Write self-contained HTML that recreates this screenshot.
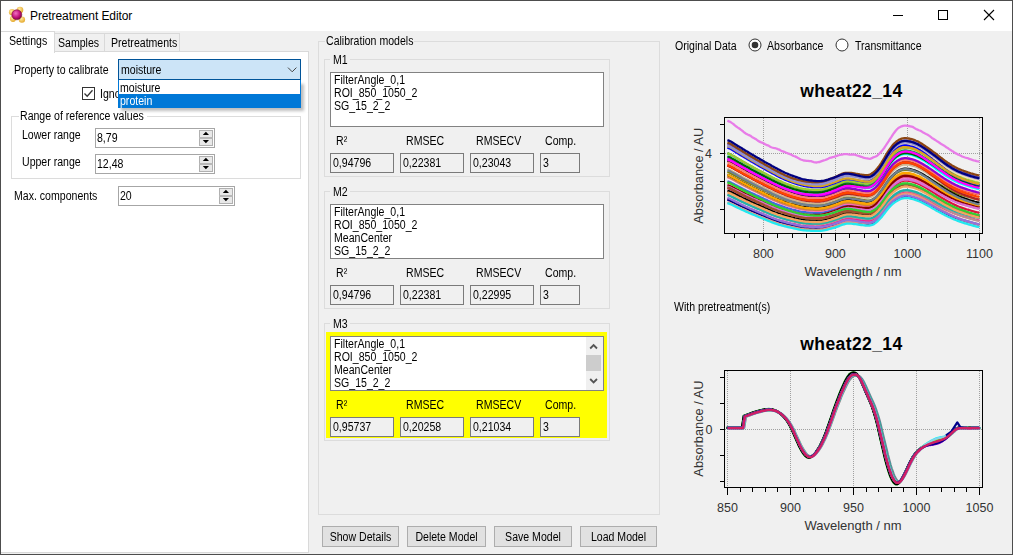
<!DOCTYPE html>
<html><head><meta charset="utf-8"><style>
html,body{margin:0;padding:0;background:#f0f0f0}
#w{position:relative;width:1013px;height:555px;overflow:hidden;font-family:"Liberation Sans",sans-serif}
.t{position:absolute;white-space:pre}
.r{position:absolute}
</style></head><body><div id="w">
<div class="r" style="left:0px;top:0px;width:1013px;height:555px;background:#f0f0f0"></div>
<div class="r" style="left:1px;top:1px;width:1011px;height:30px;background:#fff"></div>
<div class="r" style="left:0px;top:0px;width:1013px;height:1px;background:#4d4d4d"></div>
<div class="r" style="left:0px;top:554px;width:1013px;height:1px;background:#4d4d4d"></div>
<div class="r" style="left:0px;top:0px;width:1px;height:555px;background:#4d4d4d"></div>
<div class="r" style="left:1012px;top:0px;width:1px;height:555px;background:#4d4d4d"></div>
<svg class="r" style="left:8px;top:6px" width="18" height="18" viewBox="0 0 18 18">
<defs><radialGradient id="yg" cx="0.4" cy="0.35" r="0.7"><stop offset="0" stop-color="#ffeaa0"/><stop offset="1" stop-color="#e3a424"/></radialGradient>
<radialGradient id="mg" cx="0.4" cy="0.35" r="0.7"><stop offset="0" stop-color="#f070c0"/><stop offset="0.6" stop-color="#c0107a"/><stop offset="1" stop-color="#70003a"/></radialGradient></defs>
<circle cx="4.0" cy="6.2" r="3.1" fill="url(#yg)"/><circle cx="12.0" cy="4.0" r="3.3" fill="url(#yg)"/>
<circle cx="5.0" cy="12.8" r="3.1" fill="url(#yg)"/><circle cx="13.9" cy="13.6" r="3.2" fill="url(#yg)"/>
<circle cx="8.8" cy="8.8" r="5.0" fill="url(#mg)" stroke="#7a1030" stroke-width="0.6"/></svg>
<div class="t" style="left:30.00px;top:9.84px;font-size:12px;line-height:12px;color:#000;font-weight:400;letter-spacing:-0.1px;transform-origin:0 0;transform:scaleX(1);">Pretreatment Editor</div>
<div class="r" style="left:893px;top:15px;width:10px;height:1px;background:#000"></div>
<div class="r" style="left:938px;top:10px;width:10px;height:10px;border:1px solid #000;box-sizing:border-box"></div>
<svg class="r" style="left:983px;top:9px" width="12" height="12" viewBox="0 0 12 12"><path d="M1 1L11 11M11 1L1 11" stroke="#000" stroke-width="1.1" fill="none"/></svg>
<div class="r" style="left:1px;top:51px;width:308px;height:502px;background:#fff;border-right:1px solid #d9d9d9;border-bottom:1px solid #d9d9d9;border-left:0;box-sizing:border-box"></div>
<div class="r" style="left:1px;top:51px;width:308px;height:1px;background:#d9d9d9"></div>
<div class="r" style="left:54px;top:33px;width:51px;height:19px;background:#f0f0f0;border:1px solid #d9d9d9;box-sizing:border-box"></div>
<div class="r" style="left:104px;top:33px;width:76px;height:19px;background:#f0f0f0;border:1px solid #d9d9d9;box-sizing:border-box"></div>
<div class="r" style="left:1px;top:31px;width:54px;height:22px;background:#fff;border-top:1px solid #d9d9d9;border-right:1px solid #d9d9d9;box-sizing:border-box"></div>
<div class="t" style="left:8.80px;top:34.84px;font-size:12px;line-height:12px;color:#000;font-weight:400;letter-spacing:0px;transform-origin:0 0;transform:scaleX(0.88);">Settings</div>
<div class="t" style="left:58.30px;top:36.84px;font-size:12px;line-height:12px;color:#000;font-weight:400;letter-spacing:0px;transform-origin:0 0;transform:scaleX(0.88);">Samples</div>
<div class="t" style="left:110.80px;top:36.84px;font-size:12px;line-height:12px;color:#000;font-weight:400;letter-spacing:0px;transform-origin:0 0;transform:scaleX(0.88);">Pretreatments</div>
<div class="t" style="left:13.80px;top:64.34px;font-size:12px;line-height:12px;color:#000;font-weight:400;letter-spacing:0px;transform-origin:0 0;transform:scaleX(0.88);">Property to calibrate</div>
<div class="r" style="left:82px;top:87px;width:13px;height:13px;border:1px solid #333;box-sizing:border-box;background:#fff"></div>
<svg class="r" style="left:82px;top:87px" width="13" height="13" viewBox="0 0 13 13"><path d="M2.5 6.5L5.2 9.2L10.5 3.3" stroke="#333" stroke-width="1.3" fill="none"/></svg>
<div class="t" style="left:100.30px;top:88.34px;font-size:12px;line-height:12px;color:#000;font-weight:400;letter-spacing:0px;transform-origin:0 0;transform:scaleX(0.88);">Ignore</div>
<div class="r" style="left:11px;top:116px;width:290px;height:63px;border:1px solid #dcdcdc;box-sizing:border-box"></div>
<div class="r" style="left:19px;top:110px;width:128px;height:10px;background:#fff"></div>
<div class="t" style="left:19.80px;top:110.34px;font-size:12px;line-height:12px;color:#000;font-weight:400;letter-spacing:0px;transform-origin:0 0;transform:scaleX(0.88);">Range of reference values</div>
<div class="t" style="left:22.30px;top:129.34px;font-size:12px;line-height:12px;color:#000;font-weight:400;letter-spacing:0px;transform-origin:0 0;transform:scaleX(0.88);">Lower range</div>
<div class="t" style="left:22.30px;top:155.84px;font-size:12px;line-height:12px;color:#000;font-weight:400;letter-spacing:0px;transform-origin:0 0;transform:scaleX(0.88);">Upper range</div>
<div class="r" style="left:95px;top:128px;width:120px;height:20px;border:1px solid #a6a6a6;box-sizing:border-box;background:#fff"></div>
<div class="t" style="left:96.80px;top:131.54px;font-size:12px;line-height:12px;color:#000;font-weight:400;letter-spacing:0px;transform-origin:0 0;transform:scaleX(0.88);">8,79</div>
<div class="r" style="left:199px;top:130px;width:14px;height:8px;background:#e8e8e8;border:1px solid #b0b0b0;border-bottom:0;box-sizing:border-box"></div>
<div class="r" style="left:199px;top:138px;width:14px;height:8px;background:#e8e8e8;border:1px solid #b0b0b0;border-top:0;box-sizing:border-box"></div>
<div class="r" style="left:199px;top:137px;width:14px;height:2px;background:#b8b8b8"></div>
<svg class="r" style="left:199px;top:128px" width="14" height="20" viewBox="0 0 14 20"><path d="M3.8 7L6.9 3.8L10 7Z M3.8 12L10 12L6.9 15.2Z" fill="#000"/></svg>
<div class="r" style="left:95px;top:154px;width:120px;height:20px;border:1px solid #a6a6a6;box-sizing:border-box;background:#fff"></div>
<div class="t" style="left:96.80px;top:157.54px;font-size:12px;line-height:12px;color:#000;font-weight:400;letter-spacing:0px;transform-origin:0 0;transform:scaleX(0.88);">12,48</div>
<div class="r" style="left:199px;top:156px;width:14px;height:8px;background:#e8e8e8;border:1px solid #b0b0b0;border-bottom:0;box-sizing:border-box"></div>
<div class="r" style="left:199px;top:164px;width:14px;height:8px;background:#e8e8e8;border:1px solid #b0b0b0;border-top:0;box-sizing:border-box"></div>
<div class="r" style="left:199px;top:163px;width:14px;height:2px;background:#b8b8b8"></div>
<svg class="r" style="left:199px;top:154px" width="14" height="20" viewBox="0 0 14 20"><path d="M3.8 7L6.9 3.8L10 7Z M3.8 12L10 12L6.9 15.2Z" fill="#000"/></svg>
<div class="t" style="left:13.80px;top:189.84px;font-size:12px;line-height:12px;color:#000;font-weight:400;letter-spacing:0px;transform-origin:0 0;transform:scaleX(0.88);">Max. components</div>
<div class="r" style="left:118px;top:186px;width:117px;height:20px;border:1px solid #a6a6a6;box-sizing:border-box;background:#fff"></div>
<div class="t" style="left:119.80px;top:189.54px;font-size:12px;line-height:12px;color:#000;font-weight:400;letter-spacing:0px;transform-origin:0 0;transform:scaleX(0.88);">20</div>
<div class="r" style="left:219px;top:188px;width:14px;height:8px;background:#e8e8e8;border:1px solid #b0b0b0;border-bottom:0;box-sizing:border-box"></div>
<div class="r" style="left:219px;top:196px;width:14px;height:8px;background:#e8e8e8;border:1px solid #b0b0b0;border-top:0;box-sizing:border-box"></div>
<div class="r" style="left:219px;top:195px;width:14px;height:2px;background:#b8b8b8"></div>
<svg class="r" style="left:219px;top:186px" width="14" height="20" viewBox="0 0 14 20"><path d="M3.8 7L6.9 3.8L10 7Z M3.8 12L10 12L6.9 15.2Z" fill="#000"/></svg>
<div class="r" style="left:118px;top:59px;width:183px;height:21px;background:#cce4f7;border:1px solid #005499;box-sizing:border-box"></div>
<div class="t" style="left:120.80px;top:63.84px;font-size:12px;line-height:12px;color:#000;font-weight:400;letter-spacing:0px;transform-origin:0 0;transform:scaleX(0.88);">moisture</div>
<svg class="r" style="left:284px;top:64px" width="16" height="10" viewBox="0 0 16 10"><path d="M4 3.6L8.2 7.8L12.4 3.6" stroke="#444" stroke-width="1" fill="none"/></svg>
<div class="r" style="left:121px;top:84px;width:183px;height:27px;background:rgba(0,0,0,0.25);filter:blur(1.5px)"></div>
<div class="r" style="left:118px;top:80px;width:183px;height:28px;background:#fff;border:1px solid #0078d7;border-top:0;box-sizing:border-box"></div>
<div class="r" style="left:118px;top:94px;width:183px;height:14px;background:#0078d7"></div>
<div class="t" style="left:119.80px;top:81.94px;font-size:12px;line-height:12px;color:#000;font-weight:400;letter-spacing:0px;transform-origin:0 0;transform:scaleX(0.88);">moisture</div>
<div class="t" style="left:120.10px;top:94.84px;font-size:12px;line-height:12px;color:#fff;font-weight:400;letter-spacing:0px;transform-origin:0 0;transform:scaleX(0.88);">protein</div>
<div class="r" style="left:318px;top:41px;width:342px;height:474px;border:1px solid #dcdcdc;box-sizing:border-box"></div>
<div class="r" style="left:325px;top:35px;width:89px;height:10px;background:#f0f0f0"></div>
<div class="t" style="left:325.80px;top:35.34px;font-size:12px;line-height:12px;color:#000;font-weight:400;letter-spacing:0px;transform-origin:0 0;transform:scaleX(0.88);">Calibration models</div>
<div class="r" style="left:324px;top:59px;width:286px;height:118px;border:1px solid #dcdcdc;box-sizing:border-box"></div>
<div class="r" style="left:330px;top:53px;width:20px;height:10px;background:#f0f0f0"></div>
<div class="t" style="left:332.80px;top:54.14px;font-size:12px;line-height:12px;color:#000;font-weight:400;letter-spacing:0px;transform-origin:0 0;transform:scaleX(0.88);">M1</div>
<div class="r" style="left:330px;top:72px;width:274px;height:55px;background:#fff;border:1px solid #828282;box-sizing:border-box"></div>
<div class="t" style="left:333.80px;top:74.34px;font-size:12px;line-height:12px;color:#000;font-weight:400;letter-spacing:0px;transform-origin:0 0;transform:scaleX(0.88);">FilterAngle_0,1</div>
<div class="t" style="left:333.80px;top:87.34px;font-size:12px;line-height:12px;color:#000;font-weight:400;letter-spacing:0px;transform-origin:0 0;transform:scaleX(0.88);">ROI_850_1050_2</div>
<div class="t" style="left:333.80px;top:100.34px;font-size:12px;line-height:12px;color:#000;font-weight:400;letter-spacing:0px;transform-origin:0 0;transform:scaleX(0.88);">SG_15_2_2</div>
<div class="t" style="left:335.80px;top:134.84px;font-size:12px;line-height:12px;color:#000;font-weight:400;letter-spacing:0px;transform-origin:0 0;transform:scaleX(0.88);">R&#178;</div>
<div class="t" style="left:405.80px;top:134.84px;font-size:12px;line-height:12px;color:#000;font-weight:400;letter-spacing:0px;transform-origin:0 0;transform:scaleX(0.88);">RMSEC</div>
<div class="t" style="left:475.80px;top:134.84px;font-size:12px;line-height:12px;color:#000;font-weight:400;letter-spacing:0px;transform-origin:0 0;transform:scaleX(0.88);">RMSECV</div>
<div class="t" style="left:544.80px;top:134.84px;font-size:12px;line-height:12px;color:#000;font-weight:400;letter-spacing:0px;transform-origin:0 0;transform:scaleX(0.88);">Comp.</div>
<div class="r" style="left:330px;top:153px;width:64px;height:20px;background:#f0f0f0;border:1px solid #7a7a7a;box-sizing:border-box"></div>
<div class="t" style="left:333.30px;top:157.34px;font-size:12px;line-height:12px;color:#000;font-weight:400;letter-spacing:0px;transform-origin:0 0;transform:scaleX(0.88);">0,94796</div>
<div class="r" style="left:400px;top:153px;width:64px;height:20px;background:#f0f0f0;border:1px solid #7a7a7a;box-sizing:border-box"></div>
<div class="t" style="left:403.30px;top:157.34px;font-size:12px;line-height:12px;color:#000;font-weight:400;letter-spacing:0px;transform-origin:0 0;transform:scaleX(0.88);">0,22381</div>
<div class="r" style="left:470px;top:153px;width:64px;height:20px;background:#f0f0f0;border:1px solid #7a7a7a;box-sizing:border-box"></div>
<div class="t" style="left:473.30px;top:157.34px;font-size:12px;line-height:12px;color:#000;font-weight:400;letter-spacing:0px;transform-origin:0 0;transform:scaleX(0.88);">0,23043</div>
<div class="r" style="left:540px;top:153px;width:40px;height:20px;background:#f0f0f0;border:1px solid #7a7a7a;box-sizing:border-box"></div>
<div class="t" style="left:543.30px;top:157.34px;font-size:12px;line-height:12px;color:#000;font-weight:400;letter-spacing:0px;transform-origin:0 0;transform:scaleX(0.88);">3</div>
<div class="r" style="left:324px;top:191px;width:286px;height:118px;border:1px solid #dcdcdc;box-sizing:border-box"></div>
<div class="r" style="left:330px;top:185px;width:20px;height:10px;background:#f0f0f0"></div>
<div class="t" style="left:332.80px;top:186.14px;font-size:12px;line-height:12px;color:#000;font-weight:400;letter-spacing:0px;transform-origin:0 0;transform:scaleX(0.88);">M2</div>
<div class="r" style="left:330px;top:204px;width:274px;height:55px;background:#fff;border:1px solid #828282;box-sizing:border-box"></div>
<div class="t" style="left:333.80px;top:206.34px;font-size:12px;line-height:12px;color:#000;font-weight:400;letter-spacing:0px;transform-origin:0 0;transform:scaleX(0.88);">FilterAngle_0,1</div>
<div class="t" style="left:333.80px;top:219.34px;font-size:12px;line-height:12px;color:#000;font-weight:400;letter-spacing:0px;transform-origin:0 0;transform:scaleX(0.88);">ROI_850_1050_2</div>
<div class="t" style="left:333.80px;top:232.34px;font-size:12px;line-height:12px;color:#000;font-weight:400;letter-spacing:0px;transform-origin:0 0;transform:scaleX(0.88);">MeanCenter</div>
<div class="t" style="left:333.80px;top:245.34px;font-size:12px;line-height:12px;color:#000;font-weight:400;letter-spacing:0px;transform-origin:0 0;transform:scaleX(0.88);">SG_15_2_2</div>
<div class="t" style="left:335.80px;top:266.84px;font-size:12px;line-height:12px;color:#000;font-weight:400;letter-spacing:0px;transform-origin:0 0;transform:scaleX(0.88);">R&#178;</div>
<div class="t" style="left:405.80px;top:266.84px;font-size:12px;line-height:12px;color:#000;font-weight:400;letter-spacing:0px;transform-origin:0 0;transform:scaleX(0.88);">RMSEC</div>
<div class="t" style="left:475.80px;top:266.84px;font-size:12px;line-height:12px;color:#000;font-weight:400;letter-spacing:0px;transform-origin:0 0;transform:scaleX(0.88);">RMSECV</div>
<div class="t" style="left:544.80px;top:266.84px;font-size:12px;line-height:12px;color:#000;font-weight:400;letter-spacing:0px;transform-origin:0 0;transform:scaleX(0.88);">Comp.</div>
<div class="r" style="left:330px;top:285px;width:64px;height:20px;background:#f0f0f0;border:1px solid #7a7a7a;box-sizing:border-box"></div>
<div class="t" style="left:333.30px;top:289.34px;font-size:12px;line-height:12px;color:#000;font-weight:400;letter-spacing:0px;transform-origin:0 0;transform:scaleX(0.88);">0,94796</div>
<div class="r" style="left:400px;top:285px;width:64px;height:20px;background:#f0f0f0;border:1px solid #7a7a7a;box-sizing:border-box"></div>
<div class="t" style="left:403.30px;top:289.34px;font-size:12px;line-height:12px;color:#000;font-weight:400;letter-spacing:0px;transform-origin:0 0;transform:scaleX(0.88);">0,22381</div>
<div class="r" style="left:470px;top:285px;width:64px;height:20px;background:#f0f0f0;border:1px solid #7a7a7a;box-sizing:border-box"></div>
<div class="t" style="left:473.30px;top:289.34px;font-size:12px;line-height:12px;color:#000;font-weight:400;letter-spacing:0px;transform-origin:0 0;transform:scaleX(0.88);">0,22995</div>
<div class="r" style="left:540px;top:285px;width:40px;height:20px;background:#f0f0f0;border:1px solid #7a7a7a;box-sizing:border-box"></div>
<div class="t" style="left:543.30px;top:289.34px;font-size:12px;line-height:12px;color:#000;font-weight:400;letter-spacing:0px;transform-origin:0 0;transform:scaleX(0.88);">3</div>
<div class="r" style="left:324px;top:323px;width:286px;height:118px;border:1px solid #dcdcdc;box-sizing:border-box"></div>
<div class="r" style="left:330px;top:317px;width:20px;height:10px;background:#f0f0f0"></div>
<div class="t" style="left:332.80px;top:318.14px;font-size:12px;line-height:12px;color:#000;font-weight:400;letter-spacing:0px;transform-origin:0 0;transform:scaleX(0.88);">M3</div>
<div class="r" style="left:326px;top:332px;width:281px;height:106px;background:#ffff00"></div>
<div class="r" style="left:330px;top:336px;width:274px;height:55px;background:#fff;border:1px solid #828282;box-sizing:border-box"></div>
<div class="t" style="left:333.80px;top:338.34px;font-size:12px;line-height:12px;color:#000;font-weight:400;letter-spacing:0px;transform-origin:0 0;transform:scaleX(0.88);">FilterAngle_0,1</div>
<div class="t" style="left:333.80px;top:351.34px;font-size:12px;line-height:12px;color:#000;font-weight:400;letter-spacing:0px;transform-origin:0 0;transform:scaleX(0.88);">ROI_850_1050_2</div>
<div class="t" style="left:333.80px;top:364.34px;font-size:12px;line-height:12px;color:#000;font-weight:400;letter-spacing:0px;transform-origin:0 0;transform:scaleX(0.88);">MeanCenter</div>
<div class="t" style="left:333.80px;top:377.34px;font-size:12px;line-height:12px;color:#000;font-weight:400;letter-spacing:0px;transform-origin:0 0;transform:scaleX(0.88);">SG_15_2_2</div>
<div class="r" style="left:586px;top:337px;width:17px;height:53px;background:#f0f0f0"></div>
<div class="r" style="left:586px;top:355px;width:15px;height:16px;background:#cdcdcd"></div>
<svg class="r" style="left:586px;top:337px" width="17" height="53" viewBox="0 0 17 53"><path d="M4.2 11.5L7.6 8L11 11.5 M4.2 42L7.6 45.5L11 42" stroke="#555" stroke-width="1.8" fill="none"/></svg>
<div class="t" style="left:335.80px;top:398.84px;font-size:12px;line-height:12px;color:#000;font-weight:400;letter-spacing:0px;transform-origin:0 0;transform:scaleX(0.88);">R&#178;</div>
<div class="t" style="left:405.80px;top:398.84px;font-size:12px;line-height:12px;color:#000;font-weight:400;letter-spacing:0px;transform-origin:0 0;transform:scaleX(0.88);">RMSEC</div>
<div class="t" style="left:475.80px;top:398.84px;font-size:12px;line-height:12px;color:#000;font-weight:400;letter-spacing:0px;transform-origin:0 0;transform:scaleX(0.88);">RMSECV</div>
<div class="t" style="left:544.80px;top:398.84px;font-size:12px;line-height:12px;color:#000;font-weight:400;letter-spacing:0px;transform-origin:0 0;transform:scaleX(0.88);">Comp.</div>
<div class="r" style="left:330px;top:417px;width:64px;height:20px;background:#f0f0f0;border:1px solid #7a7a7a;box-sizing:border-box"></div>
<div class="t" style="left:333.30px;top:421.34px;font-size:12px;line-height:12px;color:#000;font-weight:400;letter-spacing:0px;transform-origin:0 0;transform:scaleX(0.88);">0,95737</div>
<div class="r" style="left:400px;top:417px;width:64px;height:20px;background:#f0f0f0;border:1px solid #7a7a7a;box-sizing:border-box"></div>
<div class="t" style="left:403.30px;top:421.34px;font-size:12px;line-height:12px;color:#000;font-weight:400;letter-spacing:0px;transform-origin:0 0;transform:scaleX(0.88);">0,20258</div>
<div class="r" style="left:470px;top:417px;width:64px;height:20px;background:#f0f0f0;border:1px solid #7a7a7a;box-sizing:border-box"></div>
<div class="t" style="left:473.30px;top:421.34px;font-size:12px;line-height:12px;color:#000;font-weight:400;letter-spacing:0px;transform-origin:0 0;transform:scaleX(0.88);">0,21034</div>
<div class="r" style="left:540px;top:417px;width:40px;height:20px;background:#f0f0f0;border:1px solid #7a7a7a;box-sizing:border-box"></div>
<div class="t" style="left:543.30px;top:421.34px;font-size:12px;line-height:12px;color:#000;font-weight:400;letter-spacing:0px;transform-origin:0 0;transform:scaleX(0.88);">3</div>
<div class="r" style="left:322px;top:526px;width:77px;height:21px;background:#e1e1e1;border:1px solid #adadad;box-sizing:border-box"></div>
<div class="t" style="left:322px;top:530.6px;width:77px;height:12px;line-height:12px;text-align:center;font-size:12px;color:#000;transform-origin:50% 0;transform:scaleX(0.88)">Show Details</div>
<div class="r" style="left:407px;top:526px;width:79px;height:21px;background:#e1e1e1;border:1px solid #adadad;box-sizing:border-box"></div>
<div class="t" style="left:407px;top:530.6px;width:79px;height:12px;line-height:12px;text-align:center;font-size:12px;color:#000;transform-origin:50% 0;transform:scaleX(0.88)">Delete Model</div>
<div class="r" style="left:494px;top:526px;width:78px;height:21px;background:#e1e1e1;border:1px solid #adadad;box-sizing:border-box"></div>
<div class="t" style="left:494px;top:530.6px;width:78px;height:12px;line-height:12px;text-align:center;font-size:12px;color:#000;transform-origin:50% 0;transform:scaleX(0.88)">Save Model</div>
<div class="r" style="left:580px;top:526px;width:77px;height:21px;background:#e1e1e1;border:1px solid #adadad;box-sizing:border-box"></div>
<div class="t" style="left:580px;top:530.6px;width:77px;height:12px;line-height:12px;text-align:center;font-size:12px;color:#000;transform-origin:50% 0;transform:scaleX(0.88)">Load Model</div>
<div class="t" style="left:675.30px;top:40.34px;font-size:12px;line-height:12px;color:#000;font-weight:400;letter-spacing:0px;transform-origin:0 0;transform:scaleX(0.88);">Original Data</div>
<svg class="r" style="left:747.6px;top:38.3px" width="14" height="14" viewBox="0 0 14 14"><circle cx="7" cy="7" r="6" fill="#fff" stroke="#333" stroke-width="1"/><circle cx="7" cy="7" r="3.3" fill="#333"/></svg>
<div class="t" style="left:766.80px;top:40.34px;font-size:12px;line-height:12px;color:#000;font-weight:400;letter-spacing:0px;transform-origin:0 0;transform:scaleX(0.88);">Absorbance</div>
<svg class="r" style="left:835.4px;top:38.3px" width="14" height="14" viewBox="0 0 14 14"><circle cx="7" cy="7" r="6" fill="#fff" stroke="#333" stroke-width="1"/></svg>
<div class="t" style="left:854.80px;top:40.34px;font-size:12px;line-height:12px;color:#000;font-weight:400;letter-spacing:0px;transform-origin:0 0;transform:scaleX(0.88);">Transmittance</div>
<svg class="r" style="left:0;top:0" width="1013" height="555" viewBox="0 0 1013 555" font-family="Liberation Sans, sans-serif">
<text x="851.5" y="96.7" font-size="17.5" fill="#000" text-anchor="middle" font-weight="700" letter-spacing="0.4">wheat22_14</text>
<defs><clipPath id="c1"><rect x="724.5" y="117.5" width="258.0" height="116.0"/></clipPath></defs>
<line x1="763.5" y1="118.0" x2="763.5" y2="233.0" stroke="#a0a0a0" stroke-width="1" stroke-dasharray="1 1"/>
<line x1="835.5" y1="118.0" x2="835.5" y2="233.0" stroke="#a0a0a0" stroke-width="1" stroke-dasharray="1 1"/>
<line x1="907.5" y1="118.0" x2="907.5" y2="233.0" stroke="#a0a0a0" stroke-width="1" stroke-dasharray="1 1"/>
<line x1="979.5" y1="118.0" x2="979.5" y2="233.0" stroke="#a0a0a0" stroke-width="1" stroke-dasharray="1 1"/>
<line x1="725.0" y1="153.5" x2="982.0" y2="153.5" stroke="#a0a0a0" stroke-width="1" stroke-dasharray="1 1"/>
<g clip-path="url(#c1)" fill="none" stroke-width="2.3" stroke-linejoin="round">
<path d="M727.4 156.2 L728.8 156.8 L730.3 157.4 L731.7 158.2 L733.2 159.0 L734.6 159.9 L736.0 160.7 L737.5 161.5 L738.9 162.4 L740.4 163.2 L741.8 164.0 L743.2 164.9 L744.7 165.7 L746.1 166.5 L747.6 167.3 L749.0 168.1 L750.4 168.9 L751.9 169.7 L753.3 170.5 L754.8 171.3 L756.2 172.1 L757.6 172.8 L759.1 173.6 L760.5 174.4 L762.0 175.1 L763.4 175.9 L764.8 176.7 L766.3 177.4 L767.7 178.2 L769.2 178.9 L770.6 179.7 L772.0 180.4 L773.5 181.1 L774.9 181.9 L776.4 182.6 L777.8 183.2 L779.2 183.9 L780.7 184.6 L782.1 185.2 L783.6 185.9 L785.0 186.5 L786.4 187.0 L787.9 187.6 L789.3 188.1 L790.8 188.6 L792.2 189.1 L793.6 189.5 L795.1 190.0 L796.5 190.4 L798.0 190.8 L799.4 191.2 L800.8 191.6 L802.3 191.9 L803.7 192.2 L805.2 192.4 L806.6 192.6 L808.0 192.8 L809.5 192.9 L810.9 193.0 L812.4 193.1 L813.8 193.2 L815.2 193.3 L816.7 193.3 L818.1 193.3 L819.6 193.3 L821.0 193.1 L822.4 192.9 L823.9 192.7 L825.3 192.3 L826.8 191.9 L828.2 191.5 L829.6 191.0 L831.1 190.6 L832.5 190.1 L834.0 189.5 L835.4 189.0 L836.8 188.4 L838.3 187.8 L839.7 187.2 L841.2 186.6 L842.6 186.1 L844.0 185.7 L845.5 185.5 L846.9 185.3 L848.4 185.3 L849.8 185.4 L851.2 185.6 L852.7 185.8 L854.1 186.1 L855.6 186.3 L857.0 186.6 L858.4 186.9 L859.9 187.1 L861.3 187.4 L862.8 187.6 L864.2 187.9 L865.6 188.0 L867.1 188.1 L868.5 188.0 L870.0 187.7 L871.4 187.2 L872.8 186.3 L874.3 185.3 L875.7 184.0 L877.2 182.5 L878.6 180.9 L880.0 179.0 L881.5 177.0 L882.9 174.8 L884.4 172.5 L885.8 170.3 L887.2 168.0 L888.7 165.9 L890.1 163.9 L891.6 162.0 L893.0 160.4 L894.4 159.0 L895.9 157.8 L897.3 156.7 L898.8 155.8 L900.2 155.1 L901.6 154.6 L903.1 154.2 L904.5 154.0 L906.0 154.0 L907.4 154.1 L908.8 154.4 L910.3 154.7 L911.7 155.0 L913.2 155.4 L914.6 155.9 L916.0 156.4 L917.5 157.1 L918.9 157.8 L920.4 158.6 L921.8 159.4 L923.2 160.3 L924.7 161.1 L926.1 162.1 L927.6 163.0 L929.0 164.0 L930.4 164.9 L931.9 165.9 L933.3 166.9 L934.8 167.9 L936.2 169.0 L937.6 170.0 L939.1 171.0 L940.5 172.0 L942.0 173.1 L943.4 174.1 L944.8 175.0 L946.3 176.0 L947.7 176.9 L949.2 177.8 L950.6 178.6 L952.0 179.4 L953.5 180.2 L954.9 180.9 L956.4 181.6 L957.8 182.3 L959.2 182.9 L960.7 183.5 L962.1 184.0 L963.6 184.5 L965.0 185.0 L966.4 185.5 L967.9 186.0 L969.3 186.4 L970.8 186.9 L972.2 187.3 L973.6 187.7 L975.1 188.1 L976.5 188.5 L978.0 188.8 L979.4 189.0" stroke="#00ffff"/>
<path d="M727.4 181.3 L728.8 181.8 L730.3 182.4 L731.7 183.1 L733.2 183.8 L734.6 184.6 L736.0 185.3 L737.5 186.1 L738.9 186.8 L740.4 187.6 L741.8 188.3 L743.2 189.0 L744.7 189.7 L746.1 190.5 L747.6 191.2 L749.0 191.9 L750.4 192.6 L751.9 193.2 L753.3 193.9 L754.8 194.6 L756.2 195.3 L757.6 195.9 L759.1 196.6 L760.5 197.3 L762.0 197.9 L763.4 198.6 L764.8 199.2 L766.3 199.9 L767.7 200.6 L769.2 201.2 L770.6 201.9 L772.0 202.5 L773.5 203.1 L774.9 203.7 L776.4 204.3 L777.8 204.9 L779.2 205.4 L780.7 205.9 L782.1 206.4 L783.6 206.9 L785.0 207.4 L786.4 207.8 L787.9 208.3 L789.3 208.7 L790.8 209.1 L792.2 209.5 L793.6 209.8 L795.1 210.2 L796.5 210.6 L798.0 210.9 L799.4 211.3 L800.8 211.6 L802.3 211.8 L803.7 212.0 L805.2 212.2 L806.6 212.4 L808.0 212.5 L809.5 212.6 L810.9 212.7 L812.4 212.7 L813.8 212.8 L815.2 212.8 L816.7 212.8 L818.1 212.8 L819.6 212.8 L821.0 212.6 L822.4 212.4 L823.9 212.2 L825.3 211.9 L826.8 211.5 L828.2 211.1 L829.6 210.6 L831.1 210.2 L832.5 209.7 L834.0 209.2 L835.4 208.7 L836.8 208.2 L838.3 207.6 L839.7 207.0 L841.2 206.5 L842.6 206.0 L844.0 205.5 L845.5 205.2 L846.9 205.1 L848.4 205.0 L849.8 205.1 L851.2 205.2 L852.7 205.4 L854.1 205.6 L855.6 205.8 L857.0 206.0 L858.4 206.3 L859.9 206.5 L861.3 206.7 L862.8 206.9 L864.2 207.1 L865.6 207.3 L867.1 207.4 L868.5 207.4 L870.0 207.2 L871.4 206.8 L872.8 206.1 L874.3 205.2 L875.7 204.1 L877.2 202.7 L878.6 201.2 L880.0 199.6 L881.5 197.7 L882.9 195.8 L884.4 193.7 L885.8 191.6 L887.2 189.6 L888.7 187.6 L890.1 185.8 L891.6 184.2 L893.0 182.8 L894.4 181.6 L895.9 180.5 L897.3 179.5 L898.8 178.6 L900.2 177.9 L901.6 177.4 L903.1 177.0 L904.5 176.8 L906.0 176.7 L907.4 176.8 L908.8 177.0 L910.3 177.2 L911.7 177.6 L913.2 177.9 L914.6 178.4 L916.0 178.8 L917.5 179.4 L918.9 180.0 L920.4 180.7 L921.8 181.4 L923.2 182.2 L924.7 183.0 L926.1 183.8 L927.6 184.6 L929.0 185.5 L930.4 186.3 L931.9 187.2 L933.3 188.1 L934.8 189.0 L936.2 189.9 L937.6 190.7 L939.1 191.6 L940.5 192.5 L942.0 193.3 L943.4 194.2 L944.8 195.0 L946.3 195.8 L947.7 196.5 L949.2 197.3 L950.6 198.0 L952.0 198.7 L953.5 199.4 L954.9 200.0 L956.4 200.6 L957.8 201.2 L959.2 201.8 L960.7 202.3 L962.1 202.8 L963.6 203.3 L965.0 203.7 L966.4 204.1 L967.9 204.5 L969.3 205.0 L970.8 205.4 L972.2 205.8 L973.6 206.2 L975.1 206.5 L976.5 206.9 L978.0 207.2 L979.4 207.4" stroke="#4169e1"/>
<path d="M727.4 198.9 L728.8 199.3 L730.3 199.9 L731.7 200.5 L733.2 201.2 L734.6 201.9 L736.0 202.6 L737.5 203.3 L738.9 204.0 L740.4 204.7 L741.8 205.3 L743.2 206.0 L744.7 206.7 L746.1 207.3 L747.6 207.9 L749.0 208.6 L750.4 209.2 L751.9 209.8 L753.3 210.4 L754.8 211.0 L756.2 211.6 L757.6 212.2 L759.1 212.8 L760.5 213.3 L762.0 213.9 L763.4 214.5 L764.8 215.1 L766.3 215.7 L767.7 216.3 L769.2 216.9 L770.6 217.5 L772.0 218.0 L773.5 218.6 L774.9 219.1 L776.4 219.6 L777.8 220.0 L779.2 220.5 L780.7 220.9 L782.1 221.3 L783.6 221.7 L785.0 222.1 L786.4 222.4 L787.9 222.8 L789.3 223.1 L790.8 223.5 L792.2 223.8 L793.6 224.1 L795.1 224.4 L796.5 224.8 L798.0 225.1 L799.4 225.3 L800.8 225.6 L802.3 225.8 L803.7 226.0 L805.2 226.1 L806.6 226.3 L808.0 226.3 L809.5 226.4 L810.9 226.5 L812.4 226.5 L813.8 226.5 L815.2 226.6 L816.7 226.5 L818.1 226.5 L819.6 226.4 L821.0 226.3 L822.4 226.1 L823.9 225.9 L825.3 225.6 L826.8 225.2 L828.2 224.8 L829.6 224.4 L831.1 224.0 L832.5 223.5 L834.0 223.1 L835.4 222.6 L836.8 222.1 L838.3 221.5 L839.7 221.0 L841.2 220.4 L842.6 219.9 L844.0 219.5 L845.5 219.1 L846.9 218.9 L848.4 218.8 L849.8 218.8 L851.2 218.9 L852.7 219.1 L854.1 219.3 L855.6 219.5 L857.0 219.7 L858.4 219.9 L859.9 220.1 L861.3 220.3 L862.8 220.5 L864.2 220.7 L865.6 220.8 L867.1 220.9 L868.5 221.0 L870.0 220.9 L871.4 220.5 L872.8 220.0 L874.3 219.2 L875.7 218.2 L877.2 216.9 L878.6 215.5 L880.0 214.0 L881.5 212.3 L882.9 210.5 L884.4 208.6 L885.8 206.6 L887.2 204.7 L888.7 202.9 L890.1 201.2 L891.6 199.8 L893.0 198.5 L894.4 197.4 L895.9 196.3 L897.3 195.4 L898.8 194.6 L900.2 193.9 L901.6 193.3 L903.1 192.9 L904.5 192.7 L906.0 192.6 L907.4 192.7 L908.8 192.8 L910.3 193.1 L911.7 193.4 L913.2 193.7 L914.6 194.1 L916.0 194.5 L917.5 195.1 L918.9 195.6 L920.4 196.2 L921.8 196.9 L923.2 197.5 L924.7 198.2 L926.1 199.0 L927.6 199.7 L929.0 200.5 L930.4 201.3 L931.9 202.1 L933.3 202.9 L934.8 203.7 L936.2 204.5 L937.6 205.3 L939.1 206.0 L940.5 206.8 L942.0 207.5 L943.4 208.3 L944.8 209.0 L946.3 209.7 L947.7 210.3 L949.2 211.0 L950.6 211.6 L952.0 212.2 L953.5 212.9 L954.9 213.4 L956.4 214.0 L957.8 214.5 L959.2 215.0 L960.7 215.5 L962.1 215.9 L963.6 216.4 L965.0 216.8 L966.4 217.2 L967.9 217.5 L969.3 217.9 L970.8 218.3 L972.2 218.7 L973.6 219.1 L975.1 219.5 L976.5 219.8 L978.0 220.1 L979.4 220.3" stroke="#ff1493"/>
<path d="M727.4 177.1 L728.8 177.6 L730.3 178.3 L731.7 179.0 L733.2 179.8 L734.6 180.6 L736.0 181.4 L737.5 182.2 L738.9 182.9 L740.4 183.7 L741.8 184.5 L743.2 185.2 L744.7 186.0 L746.1 186.8 L747.6 187.5 L749.0 188.2 L750.4 189.0 L751.9 189.7 L753.3 190.4 L754.8 191.1 L756.2 191.8 L757.6 192.5 L759.1 193.2 L760.5 193.9 L762.0 194.6 L763.4 195.3 L764.8 196.0 L766.3 196.7 L767.7 197.4 L769.2 198.1 L770.6 198.8 L772.0 199.4 L773.5 200.1 L774.9 200.7 L776.4 201.3 L777.8 201.9 L779.2 202.5 L780.7 203.1 L782.1 203.6 L783.6 204.1 L785.0 204.6 L786.4 205.1 L787.9 205.6 L789.3 206.0 L790.8 206.5 L792.2 206.9 L793.6 207.3 L795.1 207.7 L796.5 208.1 L798.0 208.5 L799.4 208.9 L800.8 209.2 L802.3 209.5 L803.7 209.7 L805.2 209.9 L806.6 210.1 L808.0 210.3 L809.5 210.4 L810.9 210.5 L812.4 210.6 L813.8 210.7 L815.2 210.8 L816.7 210.8 L818.1 210.8 L819.6 210.8 L821.0 210.7 L822.4 210.5 L823.9 210.3 L825.3 210.0 L826.8 209.7 L828.2 209.3 L829.6 208.9 L831.1 208.5 L832.5 208.1 L834.0 207.6 L835.4 207.1 L836.8 206.6 L838.3 206.1 L839.7 205.5 L841.2 205.0 L842.6 204.5 L844.0 204.2 L845.5 203.9 L846.9 203.8 L848.4 203.8 L849.8 203.9 L851.2 204.0 L852.7 204.3 L854.1 204.5 L855.6 204.8 L857.0 205.1 L858.4 205.4 L859.9 205.7 L861.3 206.0 L862.8 206.2 L864.2 206.5 L865.6 206.7 L867.1 206.9 L868.5 206.9 L870.0 206.8 L871.4 206.4 L872.8 205.8 L874.3 204.9 L875.7 203.8 L877.2 202.6 L878.6 201.1 L880.0 199.5 L881.5 197.7 L882.9 195.8 L884.4 193.8 L885.8 191.7 L887.2 189.7 L888.7 187.8 L890.1 186.1 L891.6 184.5 L893.0 183.1 L894.4 181.9 L895.9 180.8 L897.3 179.9 L898.8 179.1 L900.2 178.4 L901.6 177.9 L903.1 177.6 L904.5 177.4 L906.0 177.4 L907.4 177.5 L908.8 177.7 L910.3 178.0 L911.7 178.3 L913.2 178.7 L914.6 179.2 L916.0 179.7 L917.5 180.3 L918.9 180.9 L920.4 181.6 L921.8 182.3 L923.2 183.1 L924.7 183.9 L926.1 184.7 L927.6 185.5 L929.0 186.4 L930.4 187.3 L931.9 188.2 L933.3 189.1 L934.8 189.9 L936.2 190.8 L937.6 191.7 L939.1 192.6 L940.5 193.5 L942.0 194.3 L943.4 195.2 L944.8 196.0 L946.3 196.8 L947.7 197.6 L949.2 198.3 L950.6 199.0 L952.0 199.7 L953.5 200.4 L954.9 201.1 L956.4 201.7 L957.8 202.3 L959.2 202.9 L960.7 203.4 L962.1 203.9 L963.6 204.4 L965.0 204.8 L966.4 205.3 L967.9 205.7 L969.3 206.1 L970.8 206.6 L972.2 207.0 L973.6 207.4 L975.1 207.8 L976.5 208.2 L978.0 208.5 L979.4 208.7" stroke="#ff69b4"/>
<path d="M727.4 194.7 L728.8 195.2 L730.3 195.8 L731.7 196.4 L733.2 197.2 L734.6 197.9 L736.0 198.6 L737.5 199.4 L738.9 200.1 L740.4 200.8 L741.8 201.5 L743.2 202.2 L744.7 202.9 L746.1 203.5 L747.6 204.2 L749.0 204.9 L750.4 205.5 L751.9 206.2 L753.3 206.8 L754.8 207.4 L756.2 208.1 L757.6 208.7 L759.1 209.3 L760.5 209.9 L762.0 210.5 L763.4 211.2 L764.8 211.8 L766.3 212.4 L767.7 213.0 L769.2 213.7 L770.6 214.3 L772.0 214.9 L773.5 215.5 L774.9 216.0 L776.4 216.5 L777.8 217.0 L779.2 217.5 L780.7 218.0 L782.1 218.4 L783.6 218.8 L785.0 219.2 L786.4 219.6 L787.9 220.0 L789.3 220.4 L790.8 220.8 L792.2 221.1 L793.6 221.5 L795.1 221.8 L796.5 222.2 L798.0 222.5 L799.4 222.8 L800.8 223.1 L802.3 223.4 L803.7 223.6 L805.2 223.7 L806.6 223.9 L808.0 224.0 L809.5 224.1 L810.9 224.2 L812.4 224.2 L813.8 224.3 L815.2 224.3 L816.7 224.4 L818.1 224.3 L819.6 224.3 L821.0 224.2 L822.4 224.0 L823.9 223.8 L825.3 223.5 L826.8 223.2 L828.2 222.8 L829.6 222.4 L831.1 222.0 L832.5 221.6 L834.0 221.1 L835.4 220.7 L836.8 220.2 L838.3 219.6 L839.7 219.1 L841.2 218.5 L842.6 218.0 L844.0 217.6 L845.5 217.3 L846.9 217.1 L848.4 217.0 L849.8 217.0 L851.2 217.1 L852.7 217.3 L854.1 217.5 L855.6 217.7 L857.0 217.9 L858.4 218.1 L859.9 218.3 L861.3 218.5 L862.8 218.7 L864.2 218.9 L865.6 219.1 L867.1 219.2 L868.5 219.2 L870.0 219.1 L871.4 218.8 L872.8 218.2 L874.3 217.4 L875.7 216.3 L877.2 215.0 L878.6 213.6 L880.0 212.1 L881.5 210.4 L882.9 208.5 L884.4 206.6 L885.8 204.6 L887.2 202.7 L888.7 200.8 L890.1 199.2 L891.6 197.7 L893.0 196.4 L894.4 195.3 L895.9 194.2 L897.3 193.3 L898.8 192.5 L900.2 191.8 L901.6 191.3 L903.1 190.9 L904.5 190.7 L906.0 190.6 L907.4 190.7 L908.8 190.9 L910.3 191.2 L911.7 191.5 L913.2 191.9 L914.6 192.3 L916.0 192.8 L917.5 193.3 L918.9 194.0 L920.4 194.6 L921.8 195.3 L923.2 196.1 L924.7 196.8 L926.1 197.6 L927.6 198.4 L929.0 199.3 L930.4 200.1 L931.9 201.0 L933.3 201.9 L934.8 202.7 L936.2 203.6 L937.6 204.4 L939.1 205.3 L940.5 206.1 L942.0 206.9 L943.4 207.7 L944.8 208.5 L946.3 209.2 L947.7 210.0 L949.2 210.7 L950.6 211.4 L952.0 212.1 L953.5 212.7 L954.9 213.4 L956.4 214.0 L957.8 214.6 L959.2 215.1 L960.7 215.6 L962.1 216.1 L963.6 216.6 L965.0 217.1 L966.4 217.5 L967.9 217.9 L969.3 218.4 L970.8 218.8 L972.2 219.2 L973.6 219.6 L975.1 220.0 L976.5 220.4 L978.0 220.7 L979.4 221.0" stroke="#bc8f8f"/>
<path d="M727.4 188.0 L728.8 188.5 L730.3 189.1 L731.7 189.7 L733.2 190.5 L734.6 191.2 L736.0 191.9 L737.5 192.7 L738.9 193.4 L740.4 194.1 L741.8 194.8 L743.2 195.5 L744.7 196.2 L746.1 196.9 L747.6 197.6 L749.0 198.3 L750.4 199.0 L751.9 199.6 L753.3 200.3 L754.8 200.9 L756.2 201.6 L757.6 202.2 L759.1 202.8 L760.5 203.5 L762.0 204.1 L763.4 204.7 L764.8 205.4 L766.3 206.0 L767.7 206.7 L769.2 207.3 L770.6 207.9 L772.0 208.5 L773.5 209.1 L774.9 209.7 L776.4 210.2 L777.8 210.8 L779.2 211.3 L780.7 211.7 L782.1 212.2 L783.6 212.7 L785.0 213.1 L786.4 213.5 L787.9 213.9 L789.3 214.3 L790.8 214.7 L792.2 215.1 L793.6 215.4 L795.1 215.8 L796.5 216.1 L798.0 216.5 L799.4 216.8 L800.8 217.1 L802.3 217.3 L803.7 217.5 L805.2 217.7 L806.6 217.8 L808.0 217.9 L809.5 218.0 L810.9 218.1 L812.4 218.1 L813.8 218.2 L815.2 218.2 L816.7 218.2 L818.1 218.2 L819.6 218.1 L821.0 218.0 L822.4 217.8 L823.9 217.5 L825.3 217.2 L826.8 216.8 L828.2 216.4 L829.6 216.0 L831.1 215.6 L832.5 215.1 L834.0 214.6 L835.4 214.1 L836.8 213.6 L838.3 213.0 L839.7 212.4 L841.2 211.8 L842.6 211.3 L844.0 210.8 L845.5 210.5 L846.9 210.2 L848.4 210.1 L849.8 210.1 L851.2 210.2 L852.7 210.3 L854.1 210.5 L855.6 210.7 L857.0 210.8 L858.4 211.0 L859.9 211.2 L861.3 211.4 L862.8 211.5 L864.2 211.6 L865.6 211.7 L867.1 211.8 L868.5 211.7 L870.0 211.5 L871.4 211.0 L872.8 210.4 L874.3 209.4 L875.7 208.2 L877.2 206.9 L878.6 205.3 L880.0 203.7 L881.5 201.8 L882.9 199.9 L884.4 197.8 L885.8 195.7 L887.2 193.6 L888.7 191.7 L890.1 189.9 L891.6 188.3 L893.0 186.9 L894.4 185.6 L895.9 184.5 L897.3 183.5 L898.8 182.6 L900.2 181.9 L901.6 181.3 L903.1 180.9 L904.5 180.7 L906.0 180.6 L907.4 180.7 L908.8 180.9 L910.3 181.1 L911.7 181.4 L913.2 181.8 L914.6 182.3 L916.0 182.8 L917.5 183.4 L918.9 184.0 L920.4 184.7 L921.8 185.5 L923.2 186.2 L924.7 187.0 L926.1 187.9 L927.6 188.8 L929.0 189.7 L930.4 190.6 L931.9 191.5 L933.3 192.4 L934.8 193.4 L936.2 194.3 L937.6 195.2 L939.1 196.1 L940.5 197.0 L942.0 197.9 L943.4 198.8 L944.8 199.6 L946.3 200.4 L947.7 201.2 L949.2 202.0 L950.6 202.8 L952.0 203.5 L953.5 204.2 L954.9 204.9 L956.4 205.6 L957.8 206.2 L959.2 206.8 L960.7 207.3 L962.1 207.8 L963.6 208.3 L965.0 208.8 L966.4 209.3 L967.9 209.7 L969.3 210.2 L970.8 210.6 L972.2 211.0 L973.6 211.4 L975.1 211.8 L976.5 212.2 L978.0 212.5 L979.4 212.8" stroke="#dc143c"/>
<path d="M727.4 160.6 L728.8 161.1 L730.3 161.7 L731.7 162.5 L733.2 163.3 L734.6 164.1 L736.0 165.0 L737.5 165.8 L738.9 166.6 L740.4 167.5 L741.8 168.3 L743.2 169.1 L744.7 169.9 L746.1 170.7 L747.6 171.5 L749.0 172.3 L750.4 173.1 L751.9 173.9 L753.3 174.7 L754.8 175.4 L756.2 176.2 L757.6 177.0 L759.1 177.7 L760.5 178.5 L762.0 179.2 L763.4 180.0 L764.8 180.7 L766.3 181.5 L767.7 182.2 L769.2 183.0 L770.6 183.7 L772.0 184.4 L773.5 185.1 L774.9 185.8 L776.4 186.5 L777.8 187.2 L779.2 187.9 L780.7 188.5 L782.1 189.1 L783.6 189.7 L785.0 190.3 L786.4 190.9 L787.9 191.4 L789.3 191.9 L790.8 192.4 L792.2 192.9 L793.6 193.3 L795.1 193.8 L796.5 194.2 L798.0 194.6 L799.4 195.0 L800.8 195.3 L802.3 195.7 L803.7 195.9 L805.2 196.2 L806.6 196.4 L808.0 196.5 L809.5 196.7 L810.9 196.8 L812.4 196.9 L813.8 197.0 L815.2 197.1 L816.7 197.1 L818.1 197.1 L819.6 197.1 L821.0 197.0 L822.4 196.8 L823.9 196.5 L825.3 196.2 L826.8 195.8 L828.2 195.4 L829.6 195.0 L831.1 194.5 L832.5 194.0 L834.0 193.6 L835.4 193.0 L836.8 192.5 L838.3 191.9 L839.7 191.3 L841.2 190.8 L842.6 190.3 L844.0 189.9 L845.5 189.7 L846.9 189.5 L848.4 189.5 L849.8 189.7 L851.2 189.9 L852.7 190.1 L854.1 190.4 L855.6 190.6 L857.0 190.9 L858.4 191.2 L859.9 191.5 L861.3 191.8 L862.8 192.1 L864.2 192.4 L865.6 192.6 L867.1 192.7 L868.5 192.7 L870.0 192.4 L871.4 191.9 L872.8 191.2 L874.3 190.2 L875.7 189.0 L877.2 187.6 L878.6 186.0 L880.0 184.2 L881.5 182.3 L882.9 180.2 L884.4 178.0 L885.8 175.8 L887.2 173.7 L888.7 171.6 L890.1 169.7 L891.6 167.9 L893.0 166.4 L894.4 165.0 L895.9 163.9 L897.3 162.9 L898.8 162.0 L900.2 161.3 L901.6 160.8 L903.1 160.4 L904.5 160.3 L906.0 160.3 L907.4 160.4 L908.8 160.6 L910.3 160.9 L911.7 161.3 L913.2 161.7 L914.6 162.1 L916.0 162.7 L917.5 163.3 L918.9 163.9 L920.4 164.7 L921.8 165.5 L923.2 166.3 L924.7 167.2 L926.1 168.0 L927.6 168.9 L929.0 169.9 L930.4 170.8 L931.9 171.7 L933.3 172.7 L934.8 173.7 L936.2 174.6 L937.6 175.6 L939.1 176.6 L940.5 177.5 L942.0 178.5 L943.4 179.4 L944.8 180.4 L946.3 181.2 L947.7 182.1 L949.2 182.9 L950.6 183.7 L952.0 184.5 L953.5 185.2 L954.9 185.9 L956.4 186.6 L957.8 187.2 L959.2 187.8 L960.7 188.4 L962.1 188.9 L963.6 189.4 L965.0 189.9 L966.4 190.3 L967.9 190.8 L969.3 191.2 L970.8 191.6 L972.2 192.1 L973.6 192.5 L975.1 192.9 L976.5 193.2 L978.0 193.5 L979.4 193.8" stroke="#000000"/>
<path d="M727.4 195.0 L728.8 195.4 L730.3 196.0 L731.7 196.7 L733.2 197.4 L734.6 198.1 L736.0 198.8 L737.5 199.5 L738.9 200.2 L740.4 200.9 L741.8 201.6 L743.2 202.3 L744.7 202.9 L746.1 203.6 L747.6 204.2 L749.0 204.9 L750.4 205.5 L751.9 206.2 L753.3 206.8 L754.8 207.4 L756.2 208.0 L757.6 208.6 L759.1 209.2 L760.5 209.8 L762.0 210.4 L763.4 211.0 L764.8 211.6 L766.3 212.3 L767.7 212.9 L769.2 213.5 L770.6 214.1 L772.0 214.7 L773.5 215.2 L774.9 215.8 L776.4 216.3 L777.8 216.7 L779.2 217.2 L780.7 217.7 L782.1 218.1 L783.6 218.5 L785.0 218.9 L786.4 219.3 L787.9 219.6 L789.3 220.0 L790.8 220.4 L792.2 220.7 L793.6 221.0 L795.1 221.4 L796.5 221.7 L798.0 222.0 L799.4 222.3 L800.8 222.6 L802.3 222.8 L803.7 223.0 L805.2 223.2 L806.6 223.3 L808.0 223.4 L809.5 223.5 L810.9 223.5 L812.4 223.6 L813.8 223.6 L815.2 223.6 L816.7 223.6 L818.1 223.6 L819.6 223.5 L821.0 223.4 L822.4 223.2 L823.9 223.0 L825.3 222.7 L826.8 222.3 L828.2 222.0 L829.6 221.5 L831.1 221.1 L832.5 220.7 L834.0 220.2 L835.4 219.7 L836.8 219.2 L838.3 218.7 L839.7 218.1 L841.2 217.6 L842.6 217.1 L844.0 216.7 L845.5 216.3 L846.9 216.1 L848.4 216.1 L849.8 216.1 L851.2 216.2 L852.7 216.4 L854.1 216.6 L855.6 216.8 L857.0 217.0 L858.4 217.3 L859.9 217.5 L861.3 217.7 L862.8 218.0 L864.2 218.2 L865.6 218.4 L867.1 218.5 L868.5 218.5 L870.0 218.4 L871.4 218.1 L872.8 217.6 L874.3 216.8 L875.7 215.7 L877.2 214.5 L878.6 213.1 L880.0 211.5 L881.5 209.9 L882.9 208.0 L884.4 206.1 L885.8 204.1 L887.2 202.2 L888.7 200.4 L890.1 198.8 L891.6 197.3 L893.0 196.0 L894.4 194.9 L895.9 193.8 L897.3 192.9 L898.8 192.1 L900.2 191.4 L901.6 190.9 L903.1 190.5 L904.5 190.3 L906.0 190.2 L907.4 190.2 L908.8 190.4 L910.3 190.6 L911.7 190.9 L913.2 191.3 L914.6 191.7 L916.0 192.1 L917.5 192.6 L918.9 193.2 L920.4 193.8 L921.8 194.5 L923.2 195.2 L924.7 195.9 L926.1 196.6 L927.6 197.4 L929.0 198.1 L930.4 198.9 L931.9 199.7 L933.3 200.6 L934.8 201.3 L936.2 202.1 L937.6 202.9 L939.1 203.7 L940.5 204.4 L942.0 205.2 L943.4 205.9 L944.8 206.6 L946.3 207.3 L947.7 208.0 L949.2 208.6 L950.6 209.3 L952.0 209.9 L953.5 210.5 L954.9 211.1 L956.4 211.7 L957.8 212.2 L959.2 212.7 L960.7 213.2 L962.1 213.6 L963.6 214.0 L965.0 214.4 L966.4 214.8 L967.9 215.2 L969.3 215.6 L970.8 216.0 L972.2 216.4 L973.6 216.7 L975.1 217.1 L976.5 217.4 L978.0 217.7 L979.4 217.9" stroke="#20b2aa"/>
<path d="M727.4 153.2 L728.8 153.7 L730.3 154.4 L731.7 155.2 L733.2 156.0 L734.6 156.8 L736.0 157.7 L737.5 158.5 L738.9 159.4 L740.4 160.2 L741.8 161.1 L743.2 161.9 L744.7 162.7 L746.1 163.6 L747.6 164.4 L749.0 165.2 L750.4 166.0 L751.9 166.8 L753.3 167.6 L754.8 168.4 L756.2 169.2 L757.6 170.0 L759.1 170.8 L760.5 171.5 L762.0 172.3 L763.4 173.1 L764.8 173.9 L766.3 174.6 L767.7 175.4 L769.2 176.2 L770.6 176.9 L772.0 177.7 L773.5 178.4 L774.9 179.1 L776.4 179.8 L777.8 180.6 L779.2 181.3 L780.7 181.9 L782.1 182.6 L783.6 183.2 L785.0 183.9 L786.4 184.4 L787.9 185.0 L789.3 185.5 L790.8 186.0 L792.2 186.5 L793.6 187.0 L795.1 187.4 L796.5 187.9 L798.0 188.3 L799.4 188.7 L800.8 189.0 L802.3 189.4 L803.7 189.6 L805.2 189.9 L806.6 190.1 L808.0 190.3 L809.5 190.4 L810.9 190.5 L812.4 190.7 L813.8 190.8 L815.2 190.8 L816.7 190.9 L818.1 190.9 L819.6 190.8 L821.0 190.7 L822.4 190.4 L823.9 190.2 L825.3 189.8 L826.8 189.4 L828.2 189.0 L829.6 188.5 L831.1 188.0 L832.5 187.5 L834.0 187.0 L835.4 186.4 L836.8 185.8 L838.3 185.2 L839.7 184.6 L841.2 184.0 L842.6 183.5 L844.0 183.1 L845.5 182.8 L846.9 182.7 L848.4 182.7 L849.8 182.8 L851.2 183.0 L852.7 183.2 L854.1 183.4 L855.6 183.7 L857.0 183.9 L858.4 184.2 L859.9 184.4 L861.3 184.7 L862.8 185.0 L864.2 185.2 L865.6 185.3 L867.1 185.4 L868.5 185.2 L870.0 184.9 L871.4 184.3 L872.8 183.5 L874.3 182.4 L875.7 181.1 L877.2 179.5 L878.6 177.8 L880.0 176.0 L881.5 173.9 L882.9 171.7 L884.4 169.4 L885.8 167.0 L887.2 164.8 L888.7 162.6 L890.1 160.5 L891.6 158.6 L893.0 157.0 L894.4 155.6 L895.9 154.3 L897.3 153.2 L898.8 152.3 L900.2 151.6 L901.6 151.0 L903.1 150.7 L904.5 150.5 L906.0 150.5 L907.4 150.6 L908.8 150.8 L910.3 151.1 L911.7 151.5 L913.2 151.9 L914.6 152.4 L916.0 152.9 L917.5 153.6 L918.9 154.3 L920.4 155.1 L921.8 156.0 L923.2 156.9 L924.7 157.8 L926.1 158.7 L927.6 159.7 L929.0 160.6 L930.4 161.7 L931.9 162.7 L933.3 163.7 L934.8 164.7 L936.2 165.8 L937.6 166.8 L939.1 167.9 L940.5 169.0 L942.0 170.0 L943.4 171.1 L944.8 172.1 L946.3 173.0 L947.7 174.0 L949.2 174.9 L950.6 175.7 L952.0 176.6 L953.5 177.3 L954.9 178.1 L956.4 178.8 L957.8 179.5 L959.2 180.1 L960.7 180.7 L962.1 181.3 L963.6 181.8 L965.0 182.3 L966.4 182.8 L967.9 183.3 L969.3 183.8 L970.8 184.2 L972.2 184.7 L973.6 185.1 L975.1 185.5 L976.5 185.8 L978.0 186.1 L979.4 186.4" stroke="#2e8b57"/>
<path d="M727.4 176.6 L728.8 177.1 L730.3 177.7 L731.7 178.5 L733.2 179.2 L734.6 180.0 L736.0 180.8 L737.5 181.6 L738.9 182.4 L740.4 183.1 L741.8 183.9 L743.2 184.7 L744.7 185.4 L746.1 186.1 L747.6 186.9 L749.0 187.6 L750.4 188.3 L751.9 189.1 L753.3 189.8 L754.8 190.5 L756.2 191.2 L757.6 191.9 L759.1 192.6 L760.5 193.3 L762.0 193.9 L763.4 194.6 L764.8 195.3 L766.3 196.0 L767.7 196.7 L769.2 197.4 L770.6 198.1 L772.0 198.7 L773.5 199.4 L774.9 200.0 L776.4 200.6 L777.8 201.2 L779.2 201.8 L780.7 202.3 L782.1 202.9 L783.6 203.4 L785.0 203.9 L786.4 204.4 L787.9 204.8 L789.3 205.3 L790.8 205.7 L792.2 206.1 L793.6 206.5 L795.1 206.9 L796.5 207.3 L798.0 207.7 L799.4 208.1 L800.8 208.4 L802.3 208.7 L803.7 208.9 L805.2 209.1 L806.6 209.3 L808.0 209.4 L809.5 209.5 L810.9 209.7 L812.4 209.7 L813.8 209.8 L815.2 209.9 L816.7 209.9 L818.1 209.9 L819.6 209.9 L821.0 209.7 L822.4 209.6 L823.9 209.3 L825.3 209.0 L826.8 208.7 L828.2 208.3 L829.6 207.8 L831.1 207.4 L832.5 207.0 L834.0 206.5 L835.4 206.0 L836.8 205.5 L838.3 204.9 L839.7 204.3 L841.2 203.8 L842.6 203.3 L844.0 202.9 L845.5 202.6 L846.9 202.5 L848.4 202.4 L849.8 202.5 L851.2 202.6 L852.7 202.8 L854.1 203.1 L855.6 203.3 L857.0 203.6 L858.4 203.8 L859.9 204.1 L861.3 204.3 L862.8 204.6 L864.2 204.8 L865.6 205.0 L867.1 205.1 L868.5 205.1 L870.0 204.9 L871.4 204.5 L872.8 203.8 L874.3 202.9 L875.7 201.8 L877.2 200.4 L878.6 198.9 L880.0 197.3 L881.5 195.4 L882.9 193.5 L884.4 191.4 L885.8 189.3 L887.2 187.2 L888.7 185.3 L890.1 183.5 L891.6 181.9 L893.0 180.4 L894.4 179.2 L895.9 178.1 L897.3 177.1 L898.8 176.3 L900.2 175.6 L901.6 175.0 L903.1 174.7 L904.5 174.5 L906.0 174.5 L907.4 174.5 L908.8 174.7 L910.3 175.0 L911.7 175.4 L913.2 175.8 L914.6 176.2 L916.0 176.7 L917.5 177.3 L918.9 178.0 L920.4 178.7 L921.8 179.4 L923.2 180.2 L924.7 181.0 L926.1 181.8 L927.6 182.7 L929.0 183.6 L930.4 184.5 L931.9 185.4 L933.3 186.3 L934.8 187.2 L936.2 188.1 L937.6 189.0 L939.1 190.0 L940.5 190.9 L942.0 191.7 L943.4 192.6 L944.8 193.5 L946.3 194.3 L947.7 195.1 L949.2 195.9 L950.6 196.6 L952.0 197.4 L953.5 198.1 L954.9 198.7 L956.4 199.4 L957.8 200.0 L959.2 200.6 L960.7 201.1 L962.1 201.6 L963.6 202.1 L965.0 202.6 L966.4 203.0 L967.9 203.4 L969.3 203.9 L970.8 204.3 L972.2 204.7 L973.6 205.1 L975.1 205.5 L976.5 205.9 L978.0 206.2 L979.4 206.5" stroke="#cd853f"/>
<path d="M727.4 171.9 L728.8 172.3 L730.3 173.0 L731.7 173.7 L733.2 174.4 L734.6 175.2 L736.0 176.0 L737.5 176.8 L738.9 177.6 L740.4 178.3 L741.8 179.1 L743.2 179.9 L744.7 180.6 L746.1 181.4 L747.6 182.1 L749.0 182.8 L750.4 183.6 L751.9 184.3 L753.3 185.0 L754.8 185.7 L756.2 186.4 L757.6 187.1 L759.1 187.8 L760.5 188.5 L762.0 189.2 L763.4 189.9 L764.8 190.6 L766.3 191.3 L767.7 192.0 L769.2 192.7 L770.6 193.4 L772.0 194.0 L773.5 194.7 L774.9 195.3 L776.4 195.9 L777.8 196.5 L779.2 197.1 L780.7 197.7 L782.1 198.3 L783.6 198.8 L785.0 199.3 L786.4 199.8 L787.9 200.3 L789.3 200.7 L790.8 201.1 L792.2 201.5 L793.6 202.0 L795.1 202.3 L796.5 202.7 L798.0 203.1 L799.4 203.4 L800.8 203.8 L802.3 204.0 L803.7 204.3 L805.2 204.5 L806.6 204.6 L808.0 204.8 L809.5 204.9 L810.9 205.0 L812.4 205.1 L813.8 205.1 L815.2 205.2 L816.7 205.2 L818.1 205.2 L819.6 205.1 L821.0 205.0 L822.4 204.8 L823.9 204.5 L825.3 204.2 L826.8 203.8 L828.2 203.4 L829.6 202.9 L831.1 202.5 L832.5 202.0 L834.0 201.5 L835.4 201.0 L836.8 200.5 L838.3 199.9 L839.7 199.3 L841.2 198.8 L842.6 198.3 L844.0 197.9 L845.5 197.6 L846.9 197.5 L848.4 197.5 L849.8 197.6 L851.2 197.7 L852.7 198.0 L854.1 198.2 L855.6 198.5 L857.0 198.8 L858.4 199.1 L859.9 199.4 L861.3 199.7 L862.8 200.0 L864.2 200.2 L865.6 200.4 L867.1 200.6 L868.5 200.6 L870.0 200.4 L871.4 200.0 L872.8 199.4 L874.3 198.4 L875.7 197.3 L877.2 196.0 L878.6 194.5 L880.0 192.8 L881.5 191.0 L882.9 189.0 L884.4 186.9 L885.8 184.8 L887.2 182.7 L888.7 180.7 L890.1 178.9 L891.6 177.3 L893.0 175.8 L894.4 174.5 L895.9 173.4 L897.3 172.5 L898.8 171.6 L900.2 170.9 L901.6 170.4 L903.1 170.0 L904.5 169.8 L906.0 169.8 L907.4 169.9 L908.8 170.1 L910.3 170.3 L911.7 170.6 L913.2 171.0 L914.6 171.4 L916.0 171.9 L917.5 172.4 L918.9 173.0 L920.4 173.7 L921.8 174.4 L923.2 175.2 L924.7 175.9 L926.1 176.7 L927.6 177.5 L929.0 178.3 L930.4 179.2 L931.9 180.0 L933.3 180.9 L934.8 181.7 L936.2 182.6 L937.6 183.4 L939.1 184.3 L940.5 185.1 L942.0 186.0 L943.4 186.8 L944.8 187.6 L946.3 188.4 L947.7 189.1 L949.2 189.9 L950.6 190.5 L952.0 191.2 L953.5 191.9 L954.9 192.5 L956.4 193.1 L957.8 193.6 L959.2 194.1 L960.7 194.6 L962.1 195.1 L963.6 195.5 L965.0 195.9 L966.4 196.3 L967.9 196.7 L969.3 197.1 L970.8 197.5 L972.2 197.9 L973.6 198.3 L975.1 198.6 L976.5 198.9 L978.0 199.2 L979.4 199.4" stroke="#808000"/>
<path d="M727.4 190.7 L728.8 191.1 L730.3 191.7 L731.7 192.4 L733.2 193.1 L734.6 193.9 L736.0 194.6 L737.5 195.3 L738.9 196.1 L740.4 196.8 L741.8 197.5 L743.2 198.2 L744.7 198.9 L746.1 199.6 L747.6 200.2 L749.0 200.9 L750.4 201.6 L751.9 202.2 L753.3 202.9 L754.8 203.5 L756.2 204.2 L757.6 204.8 L759.1 205.4 L760.5 206.1 L762.0 206.7 L763.4 207.3 L764.8 208.0 L766.3 208.6 L767.7 209.2 L769.2 209.9 L770.6 210.5 L772.0 211.1 L773.5 211.7 L774.9 212.3 L776.4 212.8 L777.8 213.3 L779.2 213.8 L780.7 214.3 L782.1 214.7 L783.6 215.2 L785.0 215.6 L786.4 216.0 L787.9 216.4 L789.3 216.8 L790.8 217.2 L792.2 217.5 L793.6 217.9 L795.1 218.3 L796.5 218.6 L798.0 218.9 L799.4 219.3 L800.8 219.5 L802.3 219.8 L803.7 220.0 L805.2 220.2 L806.6 220.3 L808.0 220.4 L809.5 220.5 L810.9 220.6 L812.4 220.7 L813.8 220.7 L815.2 220.8 L816.7 220.8 L818.1 220.8 L819.6 220.7 L821.0 220.6 L822.4 220.4 L823.9 220.1 L825.3 219.8 L826.8 219.5 L828.2 219.1 L829.6 218.7 L831.1 218.2 L832.5 217.8 L834.0 217.3 L835.4 216.8 L836.8 216.3 L838.3 215.8 L839.7 215.2 L841.2 214.6 L842.6 214.1 L844.0 213.6 L845.5 213.3 L846.9 213.1 L848.4 213.0 L849.8 213.0 L851.2 213.1 L852.7 213.2 L854.1 213.4 L855.6 213.6 L857.0 213.8 L858.4 213.9 L859.9 214.1 L861.3 214.3 L862.8 214.5 L864.2 214.6 L865.6 214.7 L867.1 214.8 L868.5 214.7 L870.0 214.6 L871.4 214.2 L872.8 213.5 L874.3 212.6 L875.7 211.5 L877.2 210.1 L878.6 208.6 L880.0 207.0 L881.5 205.2 L882.9 203.3 L884.4 201.3 L885.8 199.2 L887.2 197.2 L888.7 195.3 L890.1 193.5 L891.6 192.0 L893.0 190.6 L894.4 189.4 L895.9 188.3 L897.3 187.4 L898.8 186.5 L900.2 185.8 L901.6 185.2 L903.1 184.8 L904.5 184.6 L906.0 184.6 L907.4 184.6 L908.8 184.8 L910.3 185.1 L911.7 185.4 L913.2 185.8 L914.6 186.2 L916.0 186.8 L917.5 187.3 L918.9 188.0 L920.4 188.7 L921.8 189.4 L923.2 190.2 L924.7 191.0 L926.1 191.8 L927.6 192.7 L929.0 193.6 L930.4 194.5 L931.9 195.4 L933.3 196.3 L934.8 197.2 L936.2 198.1 L937.6 199.0 L939.1 199.9 L940.5 200.8 L942.0 201.7 L943.4 202.5 L944.8 203.3 L946.3 204.2 L947.7 204.9 L949.2 205.7 L950.6 206.5 L952.0 207.2 L953.5 207.9 L954.9 208.6 L956.4 209.2 L957.8 209.8 L959.2 210.4 L960.7 211.0 L962.1 211.5 L963.6 212.0 L965.0 212.5 L966.4 212.9 L967.9 213.4 L969.3 213.8 L970.8 214.2 L972.2 214.7 L973.6 215.1 L975.1 215.5 L976.5 215.9 L978.0 216.2 L979.4 216.5" stroke="#000000"/>
<path d="M727.4 165.7 L728.8 166.2 L730.3 166.8 L731.7 167.6 L733.2 168.3 L734.6 169.1 L736.0 170.0 L737.5 170.7 L738.9 171.5 L740.4 172.3 L741.8 173.1 L743.2 173.9 L744.7 174.7 L746.1 175.5 L747.6 176.2 L749.0 177.0 L750.4 177.7 L751.9 178.5 L753.3 179.2 L754.8 179.9 L756.2 180.7 L757.6 181.4 L759.1 182.1 L760.5 182.8 L762.0 183.6 L763.4 184.3 L764.8 185.0 L766.3 185.7 L767.7 186.4 L769.2 187.1 L770.6 187.8 L772.0 188.5 L773.5 189.2 L774.9 189.9 L776.4 190.5 L777.8 191.1 L779.2 191.8 L780.7 192.4 L782.1 193.0 L783.6 193.5 L785.0 194.1 L786.4 194.6 L787.9 195.1 L789.3 195.5 L790.8 196.0 L792.2 196.4 L793.6 196.9 L795.1 197.3 L796.5 197.7 L798.0 198.0 L799.4 198.4 L800.8 198.7 L802.3 199.0 L803.7 199.3 L805.2 199.5 L806.6 199.6 L808.0 199.8 L809.5 199.9 L810.9 200.0 L812.4 200.1 L813.8 200.2 L815.2 200.2 L816.7 200.2 L818.1 200.2 L819.6 200.1 L821.0 200.0 L822.4 199.8 L823.9 199.5 L825.3 199.2 L826.8 198.8 L828.2 198.3 L829.6 197.9 L831.1 197.4 L832.5 196.9 L834.0 196.4 L835.4 195.9 L836.8 195.3 L838.3 194.7 L839.7 194.1 L841.2 193.5 L842.6 193.0 L844.0 192.6 L845.5 192.3 L846.9 192.2 L848.4 192.2 L849.8 192.3 L851.2 192.4 L852.7 192.7 L854.1 192.9 L855.6 193.2 L857.0 193.4 L858.4 193.7 L859.9 194.0 L861.3 194.3 L862.8 194.5 L864.2 194.7 L865.6 194.9 L867.1 195.0 L868.5 195.0 L870.0 194.7 L871.4 194.3 L872.8 193.5 L874.3 192.5 L875.7 191.3 L877.2 189.9 L878.6 188.3 L880.0 186.6 L881.5 184.6 L882.9 182.6 L884.4 180.4 L885.8 178.2 L887.2 176.0 L888.7 174.0 L890.1 172.1 L891.6 170.3 L893.0 168.8 L894.4 167.4 L895.9 166.3 L897.3 165.3 L898.8 164.4 L900.2 163.7 L901.6 163.1 L903.1 162.8 L904.5 162.6 L906.0 162.5 L907.4 162.6 L908.8 162.8 L910.3 163.1 L911.7 163.4 L913.2 163.8 L914.6 164.2 L916.0 164.7 L917.5 165.3 L918.9 165.9 L920.4 166.6 L921.8 167.4 L923.2 168.2 L924.7 169.0 L926.1 169.8 L927.6 170.7 L929.0 171.6 L930.4 172.5 L931.9 173.4 L933.3 174.3 L934.8 175.2 L936.2 176.1 L937.6 177.1 L939.1 178.0 L940.5 178.9 L942.0 179.8 L943.4 180.7 L944.8 181.6 L946.3 182.5 L947.7 183.3 L949.2 184.0 L950.6 184.8 L952.0 185.5 L953.5 186.2 L954.9 186.9 L956.4 187.5 L957.8 188.1 L959.2 188.7 L960.7 189.2 L962.1 189.7 L963.6 190.2 L965.0 190.6 L966.4 191.0 L967.9 191.5 L969.3 191.9 L970.8 192.3 L972.2 192.7 L973.6 193.1 L975.1 193.4 L976.5 193.8 L978.0 194.0 L979.4 194.2" stroke="#ff0000"/>
<path d="M727.4 169.2 L728.8 169.7 L730.3 170.3 L731.7 171.1 L733.2 171.9 L734.6 172.7 L736.0 173.5 L737.5 174.3 L738.9 175.0 L740.4 175.8 L741.8 176.6 L743.2 177.4 L744.7 178.2 L746.1 178.9 L747.6 179.7 L749.0 180.5 L750.4 181.2 L751.9 181.9 L753.3 182.7 L754.8 183.4 L756.2 184.1 L757.6 184.8 L759.1 185.6 L760.5 186.3 L762.0 187.0 L763.4 187.7 L764.8 188.4 L766.3 189.1 L767.7 189.8 L769.2 190.5 L770.6 191.2 L772.0 191.9 L773.5 192.6 L774.9 193.3 L776.4 193.9 L777.8 194.5 L779.2 195.1 L780.7 195.7 L782.1 196.3 L783.6 196.9 L785.0 197.4 L786.4 197.9 L787.9 198.4 L789.3 198.9 L790.8 199.3 L792.2 199.7 L793.6 200.2 L795.1 200.6 L796.5 201.0 L798.0 201.3 L799.4 201.7 L800.8 202.0 L802.3 202.3 L803.7 202.6 L805.2 202.8 L806.6 203.0 L808.0 203.1 L809.5 203.2 L810.9 203.3 L812.4 203.4 L813.8 203.5 L815.2 203.6 L816.7 203.6 L818.1 203.6 L819.6 203.5 L821.0 203.4 L822.4 203.2 L823.9 202.9 L825.3 202.6 L826.8 202.2 L828.2 201.8 L829.6 201.3 L831.1 200.8 L832.5 200.4 L834.0 199.9 L835.4 199.3 L836.8 198.8 L838.3 198.2 L839.7 197.6 L841.2 197.0 L842.6 196.4 L844.0 196.0 L845.5 195.7 L846.9 195.5 L848.4 195.5 L849.8 195.5 L851.2 195.7 L852.7 195.8 L854.1 196.0 L855.6 196.2 L857.0 196.5 L858.4 196.7 L859.9 196.9 L861.3 197.1 L862.8 197.3 L864.2 197.5 L865.6 197.6 L867.1 197.6 L868.5 197.5 L870.0 197.2 L871.4 196.7 L872.8 195.9 L874.3 194.9 L875.7 193.7 L877.2 192.2 L878.6 190.6 L880.0 188.8 L881.5 186.8 L882.9 184.7 L884.4 182.5 L885.8 180.3 L887.2 178.1 L888.7 176.0 L890.1 174.1 L891.6 172.3 L893.0 170.8 L894.4 169.5 L895.9 168.3 L897.3 167.2 L898.8 166.3 L900.2 165.6 L901.6 165.0 L903.1 164.7 L904.5 164.5 L906.0 164.4 L907.4 164.5 L908.8 164.7 L910.3 165.0 L911.7 165.4 L913.2 165.8 L914.6 166.2 L916.0 166.8 L917.5 167.4 L918.9 168.1 L920.4 168.9 L921.8 169.7 L923.2 170.5 L924.7 171.4 L926.1 172.3 L927.6 173.2 L929.0 174.2 L930.4 175.2 L931.9 176.1 L933.3 177.1 L934.8 178.1 L936.2 179.1 L937.6 180.1 L939.1 181.1 L940.5 182.1 L942.0 183.1 L943.4 184.1 L944.8 185.0 L946.3 186.0 L947.7 186.8 L949.2 187.7 L950.6 188.5 L952.0 189.3 L953.5 190.1 L954.9 190.8 L956.4 191.5 L957.8 192.2 L959.2 192.8 L960.7 193.4 L962.1 193.9 L963.6 194.5 L965.0 195.0 L966.4 195.4 L967.9 195.9 L969.3 196.4 L970.8 196.8 L972.2 197.3 L973.6 197.7 L975.1 198.1 L976.5 198.5 L978.0 198.8 L979.4 199.0" stroke="#d2b48c"/>
<path d="M727.4 185.2 L728.8 185.6 L730.3 186.2 L731.7 186.8 L733.2 187.6 L734.6 188.3 L736.0 189.0 L737.5 189.7 L738.9 190.5 L740.4 191.2 L741.8 191.9 L743.2 192.6 L744.7 193.3 L746.1 194.0 L747.6 194.7 L749.0 195.3 L750.4 196.0 L751.9 196.6 L753.3 197.3 L754.8 197.9 L756.2 198.6 L757.6 199.2 L759.1 199.9 L760.5 200.5 L762.0 201.1 L763.4 201.7 L764.8 202.4 L766.3 203.0 L767.7 203.7 L769.2 204.3 L770.6 204.9 L772.0 205.5 L773.5 206.1 L774.9 206.7 L776.4 207.2 L777.8 207.7 L779.2 208.2 L780.7 208.7 L782.1 209.2 L783.6 209.7 L785.0 210.1 L786.4 210.5 L787.9 210.9 L789.3 211.3 L790.8 211.7 L792.2 212.0 L793.6 212.4 L795.1 212.7 L796.5 213.1 L798.0 213.4 L799.4 213.7 L800.8 214.0 L802.3 214.2 L803.7 214.4 L805.2 214.6 L806.6 214.7 L808.0 214.8 L809.5 214.8 L810.9 214.9 L812.4 215.0 L813.8 215.0 L815.2 215.0 L816.7 215.0 L818.1 214.9 L819.6 214.8 L821.0 214.7 L822.4 214.5 L823.9 214.2 L825.3 213.8 L826.8 213.4 L828.2 213.0 L829.6 212.6 L831.1 212.1 L832.5 211.6 L834.0 211.1 L835.4 210.5 L836.8 210.0 L838.3 209.4 L839.7 208.7 L841.2 208.1 L842.6 207.6 L844.0 207.1 L845.5 206.8 L846.9 206.5 L848.4 206.4 L849.8 206.4 L851.2 206.5 L852.7 206.6 L854.1 206.8 L855.6 206.9 L857.0 207.1 L858.4 207.3 L859.9 207.5 L861.3 207.6 L862.8 207.8 L864.2 207.9 L865.6 208.0 L867.1 208.0 L868.5 207.9 L870.0 207.7 L871.4 207.2 L872.8 206.5 L874.3 205.5 L875.7 204.3 L877.2 202.9 L878.6 201.3 L880.0 199.6 L881.5 197.7 L882.9 195.7 L884.4 193.6 L885.8 191.4 L887.2 189.3 L888.7 187.3 L890.1 185.5 L891.6 183.8 L893.0 182.4 L894.4 181.1 L895.9 179.9 L897.3 178.9 L898.8 178.0 L900.2 177.2 L901.6 176.7 L903.1 176.2 L904.5 176.0 L906.0 175.9 L907.4 176.0 L908.8 176.1 L910.3 176.4 L911.7 176.7 L913.2 177.0 L914.6 177.5 L916.0 177.9 L917.5 178.5 L918.9 179.1 L920.4 179.8 L921.8 180.6 L923.2 181.3 L924.7 182.1 L926.1 182.9 L927.6 183.8 L929.0 184.7 L930.4 185.6 L931.9 186.5 L933.3 187.4 L934.8 188.3 L936.2 189.2 L937.6 190.1 L939.1 191.0 L940.5 191.9 L942.0 192.8 L943.4 193.6 L944.8 194.5 L946.3 195.3 L947.7 196.1 L949.2 196.8 L950.6 197.6 L952.0 198.3 L953.5 199.0 L954.9 199.7 L956.4 200.3 L957.8 200.9 L959.2 201.5 L960.7 202.0 L962.1 202.5 L963.6 203.0 L965.0 203.4 L966.4 203.8 L967.9 204.3 L969.3 204.7 L970.8 205.1 L972.2 205.5 L973.6 205.9 L975.1 206.3 L976.5 206.6 L978.0 206.9 L979.4 207.1" stroke="#8b0000"/>
<path d="M727.4 156.5 L728.8 157.0 L730.3 157.6 L731.7 158.4 L733.2 159.2 L734.6 160.0 L736.0 160.8 L737.5 161.7 L738.9 162.5 L740.4 163.3 L741.8 164.1 L743.2 164.9 L744.7 165.7 L746.1 166.5 L747.6 167.3 L749.0 168.1 L750.4 168.9 L751.9 169.7 L753.3 170.5 L754.8 171.2 L756.2 172.0 L757.6 172.8 L759.1 173.5 L760.5 174.3 L762.0 175.0 L763.4 175.8 L764.8 176.5 L766.3 177.3 L767.7 178.0 L769.2 178.7 L770.6 179.5 L772.0 180.2 L773.5 180.9 L774.9 181.6 L776.4 182.3 L777.8 183.0 L779.2 183.6 L780.7 184.3 L782.1 184.9 L783.6 185.5 L785.0 186.1 L786.4 186.7 L787.9 187.2 L789.3 187.7 L790.8 188.2 L792.2 188.6 L793.6 189.1 L795.1 189.5 L796.5 189.9 L798.0 190.3 L799.4 190.7 L800.8 191.0 L802.3 191.3 L803.7 191.6 L805.2 191.8 L806.6 192.0 L808.0 192.2 L809.5 192.3 L810.9 192.4 L812.4 192.5 L813.8 192.6 L815.2 192.6 L816.7 192.6 L818.1 192.6 L819.6 192.5 L821.0 192.4 L822.4 192.2 L823.9 191.9 L825.3 191.5 L826.8 191.1 L828.2 190.6 L829.6 190.2 L831.1 189.7 L832.5 189.2 L834.0 188.6 L835.4 188.1 L836.8 187.5 L838.3 186.9 L839.7 186.2 L841.2 185.6 L842.6 185.1 L844.0 184.7 L845.5 184.5 L846.9 184.3 L848.4 184.3 L849.8 184.4 L851.2 184.6 L852.7 184.8 L854.1 185.1 L855.6 185.3 L857.0 185.6 L858.4 185.9 L859.9 186.2 L861.3 186.5 L862.8 186.7 L864.2 187.0 L865.6 187.1 L867.1 187.2 L868.5 187.1 L870.0 186.8 L871.4 186.3 L872.8 185.5 L874.3 184.4 L875.7 183.1 L877.2 181.7 L878.6 180.0 L880.0 178.2 L881.5 176.1 L882.9 174.0 L884.4 171.7 L885.8 169.4 L887.2 167.2 L888.7 165.0 L890.1 163.0 L891.6 161.2 L893.0 159.6 L894.4 158.2 L895.9 156.9 L897.3 155.9 L898.8 155.0 L900.2 154.2 L901.6 153.7 L903.1 153.3 L904.5 153.1 L906.0 153.1 L907.4 153.2 L908.8 153.4 L910.3 153.7 L911.7 154.0 L913.2 154.4 L914.6 154.8 L916.0 155.3 L917.5 155.9 L918.9 156.6 L920.4 157.4 L921.8 158.1 L923.2 159.0 L924.7 159.8 L926.1 160.7 L927.6 161.6 L929.0 162.5 L930.4 163.4 L931.9 164.4 L933.3 165.3 L934.8 166.3 L936.2 167.2 L937.6 168.2 L939.1 169.2 L940.5 170.2 L942.0 171.1 L943.4 172.1 L944.8 173.0 L946.3 173.9 L947.7 174.8 L949.2 175.6 L950.6 176.4 L952.0 177.1 L953.5 177.9 L954.9 178.6 L956.4 179.2 L957.8 179.8 L959.2 180.4 L960.7 181.0 L962.1 181.5 L963.6 182.0 L965.0 182.4 L966.4 182.9 L967.9 183.3 L969.3 183.7 L970.8 184.1 L972.2 184.5 L973.6 184.9 L975.1 185.2 L976.5 185.6 L978.0 185.8 L979.4 186.0" stroke="#006400"/>
<path d="M727.4 144.0 L728.8 144.6 L730.3 145.3 L731.7 146.0 L733.2 146.9 L734.6 147.8 L736.0 148.6 L737.5 149.5 L738.9 150.4 L740.4 151.2 L741.8 152.1 L743.2 153.0 L744.7 153.8 L746.1 154.7 L747.6 155.5 L749.0 156.4 L750.4 157.2 L751.9 158.0 L753.3 158.9 L754.8 159.7 L756.2 160.5 L757.6 161.3 L759.1 162.1 L760.5 162.9 L762.0 163.8 L763.4 164.6 L764.8 165.4 L766.3 166.1 L767.7 166.9 L769.2 167.7 L770.6 168.5 L772.0 169.3 L773.5 170.0 L774.9 170.8 L776.4 171.6 L777.8 172.3 L779.2 173.0 L780.7 173.8 L782.1 174.5 L783.6 175.2 L785.0 175.8 L786.4 176.4 L787.9 177.0 L789.3 177.6 L790.8 178.1 L792.2 178.6 L793.6 179.1 L795.1 179.6 L796.5 180.0 L798.0 180.4 L799.4 180.8 L800.8 181.2 L802.3 181.5 L803.7 181.8 L805.2 182.1 L806.6 182.3 L808.0 182.5 L809.5 182.6 L810.9 182.8 L812.4 182.9 L813.8 183.0 L815.2 183.0 L816.7 183.1 L818.1 183.1 L819.6 183.0 L821.0 182.8 L822.4 182.6 L823.9 182.3 L825.3 181.9 L826.8 181.5 L828.2 181.0 L829.6 180.5 L831.1 180.0 L832.5 179.5 L834.0 178.9 L835.4 178.3 L836.8 177.7 L838.3 177.1 L839.7 176.4 L841.2 175.8 L842.6 175.3 L844.0 174.9 L845.5 174.6 L846.9 174.5 L848.4 174.5 L849.8 174.6 L851.2 174.8 L852.7 175.0 L854.1 175.3 L855.6 175.5 L857.0 175.8 L858.4 176.0 L859.9 176.3 L861.3 176.6 L862.8 176.8 L864.2 177.0 L865.6 177.2 L867.1 177.2 L868.5 177.0 L870.0 176.6 L871.4 176.0 L872.8 175.0 L874.3 173.9 L875.7 172.5 L877.2 170.9 L878.6 169.1 L880.0 167.2 L881.5 165.0 L882.9 162.7 L884.4 160.3 L885.8 157.9 L887.2 155.5 L888.7 153.2 L890.1 151.0 L891.6 149.1 L893.0 147.3 L894.4 145.8 L895.9 144.5 L897.3 143.4 L898.8 142.4 L900.2 141.7 L901.6 141.1 L903.1 140.8 L904.5 140.6 L906.0 140.6 L907.4 140.7 L908.8 140.9 L910.3 141.2 L911.7 141.6 L913.2 142.0 L914.6 142.5 L916.0 143.0 L917.5 143.7 L918.9 144.4 L920.4 145.3 L921.8 146.1 L923.2 147.1 L924.7 148.0 L926.1 149.0 L927.6 149.9 L929.0 150.9 L930.4 152.0 L931.9 153.0 L933.3 154.1 L934.8 155.1 L936.2 156.2 L937.6 157.3 L939.1 158.4 L940.5 159.5 L942.0 160.6 L943.4 161.7 L944.8 162.8 L946.3 163.8 L947.7 164.8 L949.2 165.7 L950.6 166.6 L952.0 167.4 L953.5 168.2 L954.9 169.0 L956.4 169.7 L957.8 170.4 L959.2 171.1 L960.7 171.7 L962.1 172.3 L963.6 172.8 L965.0 173.3 L966.4 173.8 L967.9 174.3 L969.3 174.7 L970.8 175.2 L972.2 175.6 L973.6 176.0 L975.1 176.4 L976.5 176.8 L978.0 177.1 L979.4 177.3" stroke="#6a5acd"/>
<path d="M727.4 146.4 L728.8 147.0 L730.3 147.6 L731.7 148.4 L733.2 149.3 L734.6 150.1 L736.0 151.0 L737.5 151.9 L738.9 152.8 L740.4 153.6 L741.8 154.5 L743.2 155.3 L744.7 156.2 L746.1 157.1 L747.6 157.9 L749.0 158.7 L750.4 159.6 L751.9 160.4 L753.3 161.2 L754.8 162.1 L756.2 162.9 L757.6 163.7 L759.1 164.5 L760.5 165.3 L762.0 166.1 L763.4 166.9 L764.8 167.7 L766.3 168.5 L767.7 169.3 L769.2 170.1 L770.6 170.8 L772.0 171.6 L773.5 172.4 L774.9 173.1 L776.4 173.9 L777.8 174.6 L779.2 175.4 L780.7 176.1 L782.1 176.8 L783.6 177.4 L785.0 178.1 L786.4 178.7 L787.9 179.3 L789.3 179.8 L790.8 180.4 L792.2 180.9 L793.6 181.4 L795.1 181.8 L796.5 182.3 L798.0 182.7 L799.4 183.1 L800.8 183.5 L802.3 183.8 L803.7 184.1 L805.2 184.4 L806.6 184.6 L808.0 184.8 L809.5 184.9 L810.9 185.1 L812.4 185.2 L813.8 185.3 L815.2 185.4 L816.7 185.4 L818.1 185.4 L819.6 185.3 L821.0 185.2 L822.4 185.0 L823.9 184.7 L825.3 184.3 L826.8 183.9 L828.2 183.5 L829.6 183.0 L831.1 182.5 L832.5 182.0 L834.0 181.5 L835.4 180.9 L836.8 180.3 L838.3 179.6 L839.7 179.0 L841.2 178.4 L842.6 177.9 L844.0 177.5 L845.5 177.3 L846.9 177.2 L848.4 177.2 L849.8 177.3 L851.2 177.5 L852.7 177.7 L854.1 178.0 L855.6 178.2 L857.0 178.5 L858.4 178.8 L859.9 179.1 L861.3 179.3 L862.8 179.6 L864.2 179.8 L865.6 180.0 L867.1 180.0 L868.5 179.9 L870.0 179.6 L871.4 178.9 L872.8 178.0 L874.3 176.9 L875.7 175.6 L877.2 174.0 L878.6 172.3 L880.0 170.4 L881.5 168.3 L882.9 166.0 L884.4 163.6 L885.8 161.3 L887.2 158.9 L888.7 156.7 L890.1 154.6 L891.6 152.7 L893.0 151.0 L894.4 149.5 L895.9 148.2 L897.3 147.1 L898.8 146.2 L900.2 145.5 L901.6 144.9 L903.1 144.6 L904.5 144.4 L906.0 144.4 L907.4 144.5 L908.8 144.8 L910.3 145.1 L911.7 145.4 L913.2 145.8 L914.6 146.3 L916.0 146.9 L917.5 147.5 L918.9 148.3 L920.4 149.1 L921.8 150.0 L923.2 150.9 L924.7 151.8 L926.1 152.7 L927.6 153.7 L929.0 154.7 L930.4 155.7 L931.9 156.8 L933.3 157.8 L934.8 158.9 L936.2 159.9 L937.6 161.0 L939.1 162.1 L940.5 163.2 L942.0 164.2 L943.4 165.3 L944.8 166.3 L946.3 167.3 L947.7 168.3 L949.2 169.2 L950.6 170.1 L952.0 170.9 L953.5 171.7 L954.9 172.5 L956.4 173.2 L957.8 173.9 L959.2 174.5 L960.7 175.2 L962.1 175.7 L963.6 176.3 L965.0 176.8 L966.4 177.3 L967.9 177.7 L969.3 178.2 L970.8 178.6 L972.2 179.1 L973.6 179.5 L975.1 179.9 L976.5 180.2 L978.0 180.5 L979.4 180.8" stroke="#f5deb3"/>
<path d="M727.4 162.3 L728.8 162.9 L730.3 163.5 L731.7 164.3 L733.2 165.1 L734.6 165.9 L736.0 166.7 L737.5 167.5 L738.9 168.3 L740.4 169.2 L741.8 170.0 L743.2 170.8 L744.7 171.6 L746.1 172.4 L747.6 173.2 L749.0 173.9 L750.4 174.7 L751.9 175.5 L753.3 176.3 L754.8 177.0 L756.2 177.8 L757.6 178.5 L759.1 179.3 L760.5 180.0 L762.0 180.7 L763.4 181.5 L764.8 182.2 L766.3 183.0 L767.7 183.7 L769.2 184.4 L770.6 185.2 L772.0 185.9 L773.5 186.6 L774.9 187.3 L776.4 187.9 L777.8 188.6 L779.2 189.2 L780.7 189.9 L782.1 190.5 L783.6 191.1 L785.0 191.7 L786.4 192.2 L787.9 192.7 L789.3 193.2 L790.8 193.7 L792.2 194.1 L793.6 194.6 L795.1 195.0 L796.5 195.4 L798.0 195.8 L799.4 196.2 L800.8 196.5 L802.3 196.9 L803.7 197.1 L805.2 197.3 L806.6 197.5 L808.0 197.7 L809.5 197.8 L810.9 198.0 L812.4 198.1 L813.8 198.1 L815.2 198.2 L816.7 198.2 L818.1 198.2 L819.6 198.2 L821.0 198.1 L822.4 197.9 L823.9 197.6 L825.3 197.3 L826.8 196.9 L828.2 196.4 L829.6 196.0 L831.1 195.5 L832.5 195.1 L834.0 194.5 L835.4 194.0 L836.8 193.4 L838.3 192.9 L839.7 192.3 L841.2 191.7 L842.6 191.2 L844.0 190.8 L845.5 190.5 L846.9 190.4 L848.4 190.4 L849.8 190.5 L851.2 190.6 L852.7 190.8 L854.1 191.1 L855.6 191.3 L857.0 191.6 L858.4 191.9 L859.9 192.1 L861.3 192.4 L862.8 192.7 L864.2 192.9 L865.6 193.1 L867.1 193.1 L868.5 193.1 L870.0 192.8 L871.4 192.3 L872.8 191.5 L874.3 190.5 L875.7 189.3 L877.2 187.8 L878.6 186.2 L880.0 184.4 L881.5 182.5 L882.9 180.3 L884.4 178.1 L885.8 175.9 L887.2 173.7 L888.7 171.6 L890.1 169.7 L891.6 167.9 L893.0 166.4 L894.4 165.0 L895.9 163.8 L897.3 162.8 L898.8 161.9 L900.2 161.2 L901.6 160.6 L903.1 160.3 L904.5 160.1 L906.0 160.1 L907.4 160.2 L908.8 160.4 L910.3 160.7 L911.7 161.0 L913.2 161.4 L914.6 161.9 L916.0 162.4 L917.5 163.1 L918.9 163.8 L920.4 164.5 L921.8 165.3 L923.2 166.2 L924.7 167.0 L926.1 167.9 L927.6 168.8 L929.0 169.7 L930.4 170.7 L931.9 171.7 L933.3 172.6 L934.8 173.6 L936.2 174.6 L937.6 175.6 L939.1 176.6 L940.5 177.5 L942.0 178.5 L943.4 179.5 L944.8 180.4 L946.3 181.3 L947.7 182.2 L949.2 183.0 L950.6 183.8 L952.0 184.6 L953.5 185.4 L954.9 186.1 L956.4 186.8 L957.8 187.4 L959.2 188.0 L960.7 188.6 L962.1 189.1 L963.6 189.6 L965.0 190.1 L966.4 190.6 L967.9 191.0 L969.3 191.5 L970.8 191.9 L972.2 192.3 L973.6 192.7 L975.1 193.1 L976.5 193.5 L978.0 193.8 L979.4 194.0" stroke="#fa8072"/>
<path d="M727.4 158.7 L728.8 159.2 L730.3 159.9 L731.7 160.7 L733.2 161.5 L734.6 162.3 L736.0 163.2 L737.5 164.0 L738.9 164.9 L740.4 165.7 L741.8 166.5 L743.2 167.3 L744.7 168.2 L746.1 169.0 L747.6 169.8 L749.0 170.6 L750.4 171.4 L751.9 172.2 L753.3 173.0 L754.8 173.7 L756.2 174.5 L757.6 175.3 L759.1 176.1 L760.5 176.8 L762.0 177.6 L763.4 178.3 L764.8 179.1 L766.3 179.9 L767.7 180.6 L769.2 181.4 L770.6 182.1 L772.0 182.8 L773.5 183.6 L774.9 184.3 L776.4 185.0 L777.8 185.7 L779.2 186.3 L780.7 187.0 L782.1 187.6 L783.6 188.2 L785.0 188.8 L786.4 189.4 L787.9 189.9 L789.3 190.5 L790.8 190.9 L792.2 191.4 L793.6 191.9 L795.1 192.3 L796.5 192.8 L798.0 193.2 L799.4 193.6 L800.8 193.9 L802.3 194.3 L803.7 194.5 L805.2 194.8 L806.6 195.0 L808.0 195.2 L809.5 195.3 L810.9 195.4 L812.4 195.6 L813.8 195.7 L815.2 195.7 L816.7 195.8 L818.1 195.8 L819.6 195.7 L821.0 195.6 L822.4 195.4 L823.9 195.2 L825.3 194.8 L826.8 194.5 L828.2 194.0 L829.6 193.6 L831.1 193.1 L832.5 192.7 L834.0 192.2 L835.4 191.6 L836.8 191.1 L838.3 190.5 L839.7 189.9 L841.2 189.4 L842.6 188.9 L844.0 188.5 L845.5 188.2 L846.9 188.1 L848.4 188.1 L849.8 188.2 L851.2 188.4 L852.7 188.6 L854.1 188.9 L855.6 189.2 L857.0 189.5 L858.4 189.8 L859.9 190.0 L861.3 190.3 L862.8 190.6 L864.2 190.8 L865.6 191.0 L867.1 191.1 L868.5 191.1 L870.0 190.8 L871.4 190.3 L872.8 189.5 L874.3 188.5 L875.7 187.3 L877.2 185.9 L878.6 184.2 L880.0 182.4 L881.5 180.5 L882.9 178.4 L884.4 176.1 L885.8 173.9 L887.2 171.7 L888.7 169.6 L890.1 167.7 L891.6 165.9 L893.0 164.3 L894.4 163.0 L895.9 161.8 L897.3 160.7 L898.8 159.9 L900.2 159.2 L901.6 158.6 L903.1 158.3 L904.5 158.1 L906.0 158.1 L907.4 158.3 L908.8 158.5 L910.3 158.8 L911.7 159.1 L913.2 159.5 L914.6 160.0 L916.0 160.6 L917.5 161.2 L918.9 161.9 L920.4 162.7 L921.8 163.5 L923.2 164.3 L924.7 165.2 L926.1 166.1 L927.6 167.0 L929.0 168.0 L930.4 168.9 L931.9 169.9 L933.3 170.9 L934.8 171.9 L936.2 172.9 L937.6 173.9 L939.1 174.9 L940.5 175.9 L942.0 176.9 L943.4 177.9 L944.8 178.8 L946.3 179.7 L947.7 180.6 L949.2 181.5 L950.6 182.3 L952.0 183.1 L953.5 183.8 L954.9 184.6 L956.4 185.2 L957.8 185.9 L959.2 186.5 L960.7 187.1 L962.1 187.6 L963.6 188.2 L965.0 188.6 L966.4 189.1 L967.9 189.6 L969.3 190.0 L970.8 190.5 L972.2 190.9 L973.6 191.3 L975.1 191.7 L976.5 192.1 L978.0 192.4 L979.4 192.6" stroke="#9400d3"/>
<path d="M727.4 199.7 L728.8 200.2 L730.3 200.8 L731.7 201.4 L733.2 202.1 L734.6 202.8 L736.0 203.6 L737.5 204.3 L738.9 205.0 L740.4 205.6 L741.8 206.3 L743.2 207.0 L744.7 207.7 L746.1 208.3 L747.6 209.0 L749.0 209.6 L750.4 210.2 L751.9 210.9 L753.3 211.5 L754.8 212.1 L756.2 212.7 L757.6 213.3 L759.1 213.9 L760.5 214.5 L762.0 215.1 L763.4 215.7 L764.8 216.3 L766.3 216.9 L767.7 217.5 L769.2 218.1 L770.6 218.7 L772.0 219.3 L773.5 219.8 L774.9 220.4 L776.4 220.9 L777.8 221.3 L779.2 221.8 L780.7 222.2 L782.1 222.6 L783.6 223.0 L785.0 223.4 L786.4 223.8 L787.9 224.1 L789.3 224.5 L790.8 224.8 L792.2 225.2 L793.6 225.5 L795.1 225.9 L796.5 226.2 L798.0 226.5 L799.4 226.8 L800.8 227.1 L802.3 227.3 L803.7 227.5 L805.2 227.7 L806.6 227.8 L808.0 227.9 L809.5 228.0 L810.9 228.1 L812.4 228.1 L813.8 228.2 L815.2 228.2 L816.7 228.2 L818.1 228.2 L819.6 228.2 L821.0 228.1 L822.4 227.9 L823.9 227.7 L825.3 227.4 L826.8 227.1 L828.2 226.7 L829.6 226.3 L831.1 225.9 L832.5 225.5 L834.0 225.1 L835.4 224.6 L836.8 224.2 L838.3 223.6 L839.7 223.1 L841.2 222.6 L842.6 222.1 L844.0 221.7 L845.5 221.3 L846.9 221.2 L848.4 221.1 L849.8 221.1 L851.2 221.2 L852.7 221.4 L854.1 221.6 L855.6 221.8 L857.0 222.0 L858.4 222.3 L859.9 222.5 L861.3 222.7 L862.8 222.9 L864.2 223.1 L865.6 223.3 L867.1 223.5 L868.5 223.5 L870.0 223.4 L871.4 223.2 L872.8 222.7 L874.3 221.9 L875.7 220.9 L877.2 219.7 L878.6 218.3 L880.0 216.8 L881.5 215.2 L882.9 213.5 L884.4 211.6 L885.8 209.7 L887.2 207.8 L888.7 206.0 L890.1 204.4 L891.6 203.0 L893.0 201.8 L894.4 200.7 L895.9 199.7 L897.3 198.8 L898.8 198.0 L900.2 197.4 L901.6 196.8 L903.1 196.5 L904.5 196.2 L906.0 196.2 L907.4 196.3 L908.8 196.4 L910.3 196.7 L911.7 197.0 L913.2 197.4 L914.6 197.8 L916.0 198.2 L917.5 198.8 L918.9 199.3 L920.4 200.0 L921.8 200.6 L923.2 201.3 L924.7 202.0 L926.1 202.8 L927.6 203.5 L929.0 204.3 L930.4 205.2 L931.9 206.0 L933.3 206.8 L934.8 207.6 L936.2 208.4 L937.6 209.2 L939.1 209.9 L940.5 210.7 L942.0 211.4 L943.4 212.2 L944.8 212.9 L946.3 213.6 L947.7 214.3 L949.2 214.9 L950.6 215.6 L952.0 216.2 L953.5 216.8 L954.9 217.4 L956.4 218.0 L957.8 218.5 L959.2 219.1 L960.7 219.6 L962.1 220.0 L963.6 220.5 L965.0 220.9 L966.4 221.3 L967.9 221.7 L969.3 222.1 L970.8 222.5 L972.2 222.9 L973.6 223.3 L975.1 223.7 L976.5 224.1 L978.0 224.4 L979.4 224.6" stroke="#000080"/>
<path d="M727.4 174.9 L728.8 175.4 L730.3 176.0 L731.7 176.7 L733.2 177.5 L734.6 178.3 L736.0 179.1 L737.5 179.8 L738.9 180.6 L740.4 181.4 L741.8 182.1 L743.2 182.9 L744.7 183.6 L746.1 184.4 L747.6 185.1 L749.0 185.8 L750.4 186.6 L751.9 187.3 L753.3 188.0 L754.8 188.7 L756.2 189.4 L757.6 190.1 L759.1 190.8 L760.5 191.5 L762.0 192.1 L763.4 192.8 L764.8 193.5 L766.3 194.2 L767.7 194.9 L769.2 195.6 L770.6 196.3 L772.0 196.9 L773.5 197.6 L774.9 198.2 L776.4 198.8 L777.8 199.4 L779.2 200.0 L780.7 200.5 L782.1 201.1 L783.6 201.6 L785.0 202.1 L786.4 202.6 L787.9 203.0 L789.3 203.5 L790.8 203.9 L792.2 204.3 L793.6 204.7 L795.1 205.1 L796.5 205.5 L798.0 205.8 L799.4 206.2 L800.8 206.5 L802.3 206.8 L803.7 207.0 L805.2 207.2 L806.6 207.4 L808.0 207.5 L809.5 207.6 L810.9 207.7 L812.4 207.8 L813.8 207.8 L815.2 207.9 L816.7 207.9 L818.1 207.9 L819.6 207.8 L821.0 207.7 L822.4 207.5 L823.9 207.2 L825.3 206.9 L826.8 206.5 L828.2 206.1 L829.6 205.6 L831.1 205.1 L832.5 204.7 L834.0 204.2 L835.4 203.6 L836.8 203.1 L838.3 202.5 L839.7 201.8 L841.2 201.3 L842.6 200.7 L844.0 200.3 L845.5 200.0 L846.9 199.8 L848.4 199.7 L849.8 199.7 L851.2 199.8 L852.7 200.0 L854.1 200.1 L855.6 200.3 L857.0 200.5 L858.4 200.7 L859.9 200.9 L861.3 201.1 L862.8 201.3 L864.2 201.4 L865.6 201.5 L867.1 201.6 L868.5 201.5 L870.0 201.2 L871.4 200.7 L872.8 199.9 L874.3 198.9 L875.7 197.7 L877.2 196.2 L878.6 194.6 L880.0 192.8 L881.5 190.9 L882.9 188.8 L884.4 186.6 L885.8 184.4 L887.2 182.3 L888.7 180.2 L890.1 178.3 L891.6 176.6 L893.0 175.1 L894.4 173.7 L895.9 172.6 L897.3 171.5 L898.8 170.6 L900.2 169.9 L901.6 169.3 L903.1 168.9 L904.5 168.7 L906.0 168.7 L907.4 168.8 L908.8 169.0 L910.3 169.2 L911.7 169.6 L913.2 170.0 L914.6 170.4 L916.0 171.0 L917.5 171.6 L918.9 172.3 L920.4 173.0 L921.8 173.8 L923.2 174.6 L924.7 175.5 L926.1 176.4 L927.6 177.3 L929.0 178.2 L930.4 179.2 L931.9 180.2 L933.3 181.2 L934.8 182.2 L936.2 183.1 L937.6 184.1 L939.1 185.1 L940.5 186.1 L942.0 187.0 L943.4 188.0 L944.8 188.9 L946.3 189.8 L947.7 190.7 L949.2 191.5 L950.6 192.3 L952.0 193.1 L953.5 193.8 L954.9 194.6 L956.4 195.3 L957.8 195.9 L959.2 196.5 L960.7 197.1 L962.1 197.7 L963.6 198.2 L965.0 198.7 L966.4 199.1 L967.9 199.6 L969.3 200.1 L970.8 200.5 L972.2 200.9 L973.6 201.4 L975.1 201.8 L976.5 202.1 L978.0 202.5 L979.4 202.7" stroke="#000000"/>
<path d="M727.4 153.3 L728.8 153.8 L730.3 154.4 L731.7 155.2 L733.2 156.0 L734.6 156.8 L736.0 157.6 L737.5 158.5 L738.9 159.3 L740.4 160.1 L741.8 161.0 L743.2 161.8 L744.7 162.6 L746.1 163.4 L747.6 164.2 L749.0 165.0 L750.4 165.8 L751.9 166.6 L753.3 167.4 L754.8 168.2 L756.2 169.0 L757.6 169.7 L759.1 170.5 L760.5 171.2 L762.0 172.0 L763.4 172.8 L764.8 173.5 L766.3 174.3 L767.7 175.0 L769.2 175.8 L770.6 176.5 L772.0 177.2 L773.5 178.0 L774.9 178.7 L776.4 179.4 L777.8 180.1 L779.2 180.8 L780.7 181.4 L782.1 182.1 L783.6 182.7 L785.0 183.3 L786.4 183.9 L787.9 184.4 L789.3 184.9 L790.8 185.4 L792.2 185.9 L793.6 186.3 L795.1 186.8 L796.5 187.2 L798.0 187.6 L799.4 188.0 L800.8 188.3 L802.3 188.6 L803.7 188.9 L805.2 189.1 L806.6 189.3 L808.0 189.4 L809.5 189.6 L810.9 189.7 L812.4 189.8 L813.8 189.8 L815.2 189.9 L816.7 189.9 L818.1 189.9 L819.6 189.8 L821.0 189.6 L822.4 189.4 L823.9 189.1 L825.3 188.7 L826.8 188.3 L828.2 187.8 L829.6 187.3 L831.1 186.8 L832.5 186.3 L834.0 185.7 L835.4 185.1 L836.8 184.5 L838.3 183.9 L839.7 183.2 L841.2 182.6 L842.6 182.1 L844.0 181.7 L845.5 181.4 L846.9 181.2 L848.4 181.2 L849.8 181.3 L851.2 181.4 L852.7 181.6 L854.1 181.8 L855.6 182.1 L857.0 182.3 L858.4 182.5 L859.9 182.8 L861.3 183.0 L862.8 183.2 L864.2 183.4 L865.6 183.5 L867.1 183.6 L868.5 183.4 L870.0 183.0 L871.4 182.4 L872.8 181.5 L874.3 180.4 L875.7 179.0 L877.2 177.5 L878.6 175.8 L880.0 173.8 L881.5 171.7 L882.9 169.5 L884.4 167.1 L885.8 164.7 L887.2 162.4 L888.7 160.2 L890.1 158.1 L891.6 156.2 L893.0 154.5 L894.4 153.0 L895.9 151.7 L897.3 150.6 L898.8 149.7 L900.2 148.9 L901.6 148.4 L903.1 148.0 L904.5 147.8 L906.0 147.8 L907.4 147.9 L908.8 148.0 L910.3 148.3 L911.7 148.7 L913.2 149.1 L914.6 149.5 L916.0 150.1 L917.5 150.7 L918.9 151.4 L920.4 152.2 L921.8 153.0 L923.2 153.9 L924.7 154.8 L926.1 155.7 L927.6 156.7 L929.0 157.6 L930.4 158.6 L931.9 159.6 L933.3 160.7 L934.8 161.7 L936.2 162.7 L937.6 163.8 L939.1 164.8 L940.5 165.9 L942.0 166.9 L943.4 167.9 L944.8 168.9 L946.3 169.9 L947.7 170.8 L949.2 171.7 L950.6 172.5 L952.0 173.4 L953.5 174.1 L954.9 174.9 L956.4 175.6 L957.8 176.2 L959.2 176.9 L960.7 177.4 L962.1 178.0 L963.6 178.5 L965.0 179.0 L966.4 179.5 L967.9 179.9 L969.3 180.4 L970.8 180.8 L972.2 181.2 L973.6 181.6 L975.1 182.0 L976.5 182.3 L978.0 182.6 L979.4 182.8" stroke="#9acd32"/>
<path d="M727.4 147.5 L728.8 148.1 L730.3 148.8 L731.7 149.6 L733.2 150.5 L734.6 151.3 L736.0 152.2 L737.5 153.1 L738.9 154.0 L740.4 154.9 L741.8 155.7 L743.2 156.6 L744.7 157.5 L746.1 158.3 L747.6 159.2 L749.0 160.0 L750.4 160.9 L751.9 161.7 L753.3 162.6 L754.8 163.4 L756.2 164.2 L757.6 165.0 L759.1 165.9 L760.5 166.7 L762.0 167.5 L763.4 168.3 L764.8 169.1 L766.3 169.9 L767.7 170.7 L769.2 171.5 L770.6 172.3 L772.0 173.1 L773.5 173.8 L774.9 174.6 L776.4 175.4 L777.8 176.1 L779.2 176.9 L780.7 177.6 L782.1 178.3 L783.6 179.0 L785.0 179.6 L786.4 180.2 L787.9 180.8 L789.3 181.4 L790.8 181.9 L792.2 182.4 L793.6 182.9 L795.1 183.4 L796.5 183.9 L798.0 184.3 L799.4 184.7 L800.8 185.1 L802.3 185.5 L803.7 185.8 L805.2 186.1 L806.6 186.3 L808.0 186.5 L809.5 186.7 L810.9 186.8 L812.4 187.0 L813.8 187.1 L815.2 187.2 L816.7 187.2 L818.1 187.2 L819.6 187.2 L821.0 187.1 L822.4 186.9 L823.9 186.6 L825.3 186.3 L826.8 185.9 L828.2 185.4 L829.6 185.0 L831.1 184.5 L832.5 184.0 L834.0 183.5 L835.4 182.9 L836.8 182.3 L838.3 181.7 L839.7 181.1 L841.2 180.5 L842.6 180.0 L844.0 179.6 L845.5 179.3 L846.9 179.2 L848.4 179.2 L849.8 179.3 L851.2 179.4 L852.7 179.6 L854.1 179.9 L855.6 180.1 L857.0 180.3 L858.4 180.6 L859.9 180.8 L861.3 181.1 L862.8 181.3 L864.2 181.5 L865.6 181.6 L867.1 181.6 L868.5 181.4 L870.0 181.1 L871.4 180.4 L872.8 179.5 L874.3 178.3 L875.7 177.0 L877.2 175.4 L878.6 173.6 L880.0 171.7 L881.5 169.5 L882.9 167.2 L884.4 164.9 L885.8 162.5 L887.2 160.1 L888.7 157.9 L890.1 155.8 L891.6 153.8 L893.0 152.1 L894.4 150.6 L895.9 149.4 L897.3 148.3 L898.8 147.3 L900.2 146.6 L901.6 146.0 L903.1 145.7 L904.5 145.5 L906.0 145.5 L907.4 145.7 L908.8 145.9 L910.3 146.3 L911.7 146.6 L913.2 147.1 L914.6 147.6 L916.0 148.2 L917.5 148.9 L918.9 149.7 L920.4 150.6 L921.8 151.5 L923.2 152.5 L924.7 153.5 L926.1 154.5 L927.6 155.6 L929.0 156.6 L930.4 157.7 L931.9 158.8 L933.3 160.0 L934.8 161.1 L936.2 162.2 L937.6 163.4 L939.1 164.5 L940.5 165.7 L942.0 166.8 L943.4 168.0 L944.8 169.1 L946.3 170.2 L947.7 171.2 L949.2 172.2 L950.6 173.1 L952.0 174.0 L953.5 174.9 L954.9 175.7 L956.4 176.5 L957.8 177.3 L959.2 178.0 L960.7 178.7 L962.1 179.3 L963.6 179.9 L965.0 180.4 L966.4 181.0 L967.9 181.5 L969.3 182.0 L970.8 182.5 L972.2 183.0 L973.6 183.5 L975.1 183.9 L976.5 184.3 L978.0 184.6 L979.4 184.9" stroke="#0000ff"/>
<path d="M727.4 174.9 L728.8 175.4 L730.3 176.0 L731.7 176.8 L733.2 177.5 L734.6 178.3 L736.0 179.1 L737.5 179.9 L738.9 180.7 L740.4 181.5 L741.8 182.2 L743.2 183.0 L744.7 183.7 L746.1 184.5 L747.6 185.2 L749.0 186.0 L750.4 186.7 L751.9 187.4 L753.3 188.2 L754.8 188.9 L756.2 189.6 L757.6 190.3 L759.1 191.0 L760.5 191.7 L762.0 192.4 L763.4 193.1 L764.8 193.8 L766.3 194.5 L767.7 195.2 L769.2 195.9 L770.6 196.6 L772.0 197.2 L773.5 197.9 L774.9 198.5 L776.4 199.1 L777.8 199.7 L779.2 200.3 L780.7 200.9 L782.1 201.4 L783.6 202.0 L785.0 202.5 L786.4 203.0 L787.9 203.4 L789.3 203.9 L790.8 204.3 L792.2 204.7 L793.6 205.2 L795.1 205.6 L796.5 206.0 L798.0 206.3 L799.4 206.7 L800.8 207.0 L802.3 207.3 L803.7 207.6 L805.2 207.8 L806.6 207.9 L808.0 208.1 L809.5 208.2 L810.9 208.3 L812.4 208.4 L813.8 208.5 L815.2 208.6 L816.7 208.6 L818.1 208.6 L819.6 208.5 L821.0 208.4 L822.4 208.2 L823.9 208.0 L825.3 207.7 L826.8 207.3 L828.2 206.9 L829.6 206.5 L831.1 206.1 L832.5 205.6 L834.0 205.2 L835.4 204.7 L836.8 204.1 L838.3 203.6 L839.7 203.0 L841.2 202.4 L842.6 201.9 L844.0 201.5 L845.5 201.3 L846.9 201.1 L848.4 201.1 L849.8 201.2 L851.2 201.3 L852.7 201.5 L854.1 201.7 L855.6 202.0 L857.0 202.3 L858.4 202.5 L859.9 202.8 L861.3 203.0 L862.8 203.3 L864.2 203.5 L865.6 203.7 L867.1 203.8 L868.5 203.7 L870.0 203.6 L871.4 203.1 L872.8 202.5 L874.3 201.5 L875.7 200.4 L877.2 199.0 L878.6 197.5 L880.0 195.8 L881.5 194.0 L882.9 192.0 L884.4 189.9 L885.8 187.8 L887.2 185.7 L888.7 183.7 L890.1 181.9 L891.6 180.3 L893.0 178.9 L894.4 177.6 L895.9 176.5 L897.3 175.5 L898.8 174.7 L900.2 174.0 L901.6 173.4 L903.1 173.1 L904.5 172.9 L906.0 172.9 L907.4 173.0 L908.8 173.2 L910.3 173.5 L911.7 173.8 L913.2 174.2 L914.6 174.6 L916.0 175.2 L917.5 175.8 L918.9 176.4 L920.4 177.1 L921.8 177.9 L923.2 178.7 L924.7 179.5 L926.1 180.3 L927.6 181.2 L929.0 182.1 L930.4 183.0 L931.9 183.9 L933.3 184.9 L934.8 185.8 L936.2 186.7 L937.6 187.6 L939.1 188.6 L940.5 189.5 L942.0 190.4 L943.4 191.3 L944.8 192.1 L946.3 193.0 L947.7 193.8 L949.2 194.6 L950.6 195.3 L952.0 196.1 L953.5 196.8 L954.9 197.5 L956.4 198.1 L957.8 198.7 L959.2 199.3 L960.7 199.9 L962.1 200.4 L963.6 200.9 L965.0 201.3 L966.4 201.8 L967.9 202.2 L969.3 202.7 L970.8 203.1 L972.2 203.5 L973.6 203.9 L975.1 204.3 L976.5 204.7 L978.0 205.0 L979.4 205.3" stroke="#ffa500"/>
<path d="M727.4 146.1 L728.8 146.6 L730.3 147.3 L731.7 148.1 L733.2 149.0 L734.6 149.9 L736.0 150.8 L737.5 151.7 L738.9 152.6 L740.4 153.4 L741.8 154.3 L743.2 155.2 L744.7 156.1 L746.1 156.9 L747.6 157.8 L749.0 158.7 L750.4 159.5 L751.9 160.4 L753.3 161.2 L754.8 162.0 L756.2 162.9 L757.6 163.7 L759.1 164.5 L760.5 165.4 L762.0 166.2 L763.4 167.0 L764.8 167.8 L766.3 168.6 L767.7 169.4 L769.2 170.2 L770.6 171.0 L772.0 171.8 L773.5 172.6 L774.9 173.3 L776.4 174.1 L777.8 174.9 L779.2 175.6 L780.7 176.3 L782.1 177.1 L783.6 177.8 L785.0 178.4 L786.4 179.0 L787.9 179.6 L789.3 180.2 L790.8 180.8 L792.2 181.3 L793.6 181.8 L795.1 182.3 L796.5 182.7 L798.0 183.2 L799.4 183.6 L800.8 184.0 L802.3 184.4 L803.7 184.7 L805.2 185.0 L806.6 185.2 L808.0 185.4 L809.5 185.6 L810.9 185.7 L812.4 185.9 L813.8 186.0 L815.2 186.1 L816.7 186.2 L818.1 186.2 L819.6 186.1 L821.0 186.0 L822.4 185.8 L823.9 185.6 L825.3 185.2 L826.8 184.9 L828.2 184.4 L829.6 184.0 L831.1 183.5 L832.5 183.0 L834.0 182.5 L835.4 182.0 L836.8 181.4 L838.3 180.8 L839.7 180.2 L841.2 179.6 L842.6 179.2 L844.0 178.8 L845.5 178.6 L846.9 178.5 L848.4 178.5 L849.8 178.6 L851.2 178.9 L852.7 179.1 L854.1 179.4 L855.6 179.7 L857.0 180.0 L858.4 180.3 L859.9 180.6 L861.3 180.9 L862.8 181.2 L864.2 181.5 L865.6 181.6 L867.1 181.7 L868.5 181.6 L870.0 181.3 L871.4 180.7 L872.8 179.9 L874.3 178.8 L875.7 177.5 L877.2 176.0 L878.6 174.3 L880.0 172.4 L881.5 170.4 L882.9 168.1 L884.4 165.8 L885.8 163.5 L887.2 161.2 L888.7 159.0 L890.1 157.0 L891.6 155.1 L893.0 153.4 L894.4 152.0 L895.9 150.8 L897.3 149.7 L898.8 148.8 L900.2 148.1 L901.6 147.6 L903.1 147.2 L904.5 147.1 L906.0 147.1 L907.4 147.3 L908.8 147.5 L910.3 147.8 L911.7 148.2 L913.2 148.7 L914.6 149.2 L916.0 149.7 L917.5 150.4 L918.9 151.2 L920.4 152.0 L921.8 152.9 L923.2 153.8 L924.7 154.7 L926.1 155.7 L927.6 156.7 L929.0 157.7 L930.4 158.7 L931.9 159.7 L933.3 160.8 L934.8 161.9 L936.2 162.9 L937.6 164.0 L939.1 165.1 L940.5 166.2 L942.0 167.3 L943.4 168.3 L944.8 169.4 L946.3 170.4 L947.7 171.3 L949.2 172.3 L950.6 173.2 L952.0 174.0 L953.5 174.8 L954.9 175.6 L956.4 176.3 L957.8 177.0 L959.2 177.7 L960.7 178.3 L962.1 178.9 L963.6 179.4 L965.0 180.0 L966.4 180.5 L967.9 181.0 L969.3 181.4 L970.8 181.9 L972.2 182.4 L973.6 182.8 L975.1 183.2 L976.5 183.6 L978.0 183.9 L979.4 184.2" stroke="#daa520"/>
<path d="M727.4 186.6 L728.8 187.0 L730.3 187.6 L731.7 188.3 L733.2 189.0 L734.6 189.7 L736.0 190.4 L737.5 191.1 L738.9 191.9 L740.4 192.6 L741.8 193.3 L743.2 194.0 L744.7 194.7 L746.1 195.3 L747.6 196.0 L749.0 196.7 L750.4 197.4 L751.9 198.0 L753.3 198.7 L754.8 199.3 L756.2 199.9 L757.6 200.6 L759.1 201.2 L760.5 201.8 L762.0 202.4 L763.4 203.1 L764.8 203.7 L766.3 204.3 L767.7 205.0 L769.2 205.6 L770.6 206.2 L772.0 206.8 L773.5 207.4 L774.9 208.0 L776.4 208.5 L777.8 209.0 L779.2 209.5 L780.7 210.0 L782.1 210.5 L783.6 210.9 L785.0 211.3 L786.4 211.8 L787.9 212.2 L789.3 212.5 L790.8 212.9 L792.2 213.3 L793.6 213.6 L795.1 214.0 L796.5 214.3 L798.0 214.6 L799.4 214.9 L800.8 215.2 L802.3 215.4 L803.7 215.6 L805.2 215.8 L806.6 215.9 L808.0 216.0 L809.5 216.1 L810.9 216.1 L812.4 216.2 L813.8 216.2 L815.2 216.2 L816.7 216.2 L818.1 216.2 L819.6 216.1 L821.0 215.9 L822.4 215.7 L823.9 215.4 L825.3 215.1 L826.8 214.7 L828.2 214.3 L829.6 213.9 L831.1 213.4 L832.5 212.9 L834.0 212.4 L835.4 211.9 L836.8 211.4 L838.3 210.8 L839.7 210.2 L841.2 209.6 L842.6 209.1 L844.0 208.6 L845.5 208.3 L846.9 208.1 L848.4 208.0 L849.8 208.1 L851.2 208.2 L852.7 208.3 L854.1 208.5 L855.6 208.7 L857.0 208.9 L858.4 209.1 L859.9 209.3 L861.3 209.5 L862.8 209.7 L864.2 209.9 L865.6 210.1 L867.1 210.1 L868.5 210.1 L870.0 209.9 L871.4 209.5 L872.8 208.9 L874.3 208.0 L875.7 206.8 L877.2 205.5 L878.6 204.0 L880.0 202.3 L881.5 200.5 L882.9 198.6 L884.4 196.5 L885.8 194.5 L887.2 192.4 L888.7 190.5 L890.1 188.7 L891.6 187.1 L893.0 185.7 L894.4 184.5 L895.9 183.4 L897.3 182.4 L898.8 181.5 L900.2 180.8 L901.6 180.2 L903.1 179.8 L904.5 179.6 L906.0 179.5 L907.4 179.6 L908.8 179.7 L910.3 180.0 L911.7 180.3 L913.2 180.6 L914.6 181.0 L916.0 181.5 L917.5 182.0 L918.9 182.6 L920.4 183.2 L921.8 183.9 L923.2 184.7 L924.7 185.4 L926.1 186.2 L927.6 187.0 L929.0 187.8 L930.4 188.6 L931.9 189.5 L933.3 190.3 L934.8 191.2 L936.2 192.0 L937.6 192.9 L939.1 193.7 L940.5 194.5 L942.0 195.3 L943.4 196.1 L944.8 196.9 L946.3 197.6 L947.7 198.4 L949.2 199.1 L950.6 199.8 L952.0 200.4 L953.5 201.1 L954.9 201.7 L956.4 202.3 L957.8 202.8 L959.2 203.3 L960.7 203.8 L962.1 204.3 L963.6 204.7 L965.0 205.1 L966.4 205.5 L967.9 205.9 L969.3 206.3 L970.8 206.7 L972.2 207.1 L973.6 207.5 L975.1 207.8 L976.5 208.2 L978.0 208.4 L979.4 208.6" stroke="#da70d6"/>
<path d="M727.4 187.3 L728.8 187.8 L730.3 188.4 L731.7 189.1 L733.2 189.9 L734.6 190.6 L736.0 191.4 L737.5 192.1 L738.9 192.9 L740.4 193.6 L741.8 194.3 L743.2 195.1 L744.7 195.8 L746.1 196.5 L747.6 197.2 L749.0 197.9 L750.4 198.6 L751.9 199.3 L753.3 199.9 L754.8 200.6 L756.2 201.3 L757.6 201.9 L759.1 202.6 L760.5 203.2 L762.0 203.9 L763.4 204.5 L764.8 205.2 L766.3 205.9 L767.7 206.5 L769.2 207.2 L770.6 207.8 L772.0 208.5 L773.5 209.1 L774.9 209.7 L776.4 210.2 L777.8 210.8 L779.2 211.3 L780.7 211.8 L782.1 212.3 L783.6 212.7 L785.0 213.2 L786.4 213.6 L787.9 214.1 L789.3 214.5 L790.8 214.9 L792.2 215.3 L793.6 215.6 L795.1 216.0 L796.5 216.4 L798.0 216.7 L799.4 217.1 L800.8 217.4 L802.3 217.7 L803.7 217.9 L805.2 218.1 L806.6 218.2 L808.0 218.4 L809.5 218.5 L810.9 218.6 L812.4 218.7 L813.8 218.7 L815.2 218.8 L816.7 218.8 L818.1 218.8 L819.6 218.8 L821.0 218.7 L822.4 218.5 L823.9 218.3 L825.3 218.0 L826.8 217.7 L828.2 217.3 L829.6 216.9 L831.1 216.5 L832.5 216.0 L834.0 215.6 L835.4 215.1 L836.8 214.6 L838.3 214.1 L839.7 213.5 L841.2 213.0 L842.6 212.5 L844.0 212.0 L845.5 211.7 L846.9 211.5 L848.4 211.5 L849.8 211.5 L851.2 211.6 L852.7 211.8 L854.1 212.0 L855.6 212.2 L857.0 212.4 L858.4 212.6 L859.9 212.8 L861.3 213.0 L862.8 213.2 L864.2 213.4 L865.6 213.6 L867.1 213.7 L868.5 213.6 L870.0 213.5 L871.4 213.1 L872.8 212.5 L874.3 211.6 L875.7 210.5 L877.2 209.2 L878.6 207.7 L880.0 206.1 L881.5 204.3 L882.9 202.4 L884.4 200.4 L885.8 198.3 L887.2 196.3 L888.7 194.4 L890.1 192.7 L891.6 191.2 L893.0 189.8 L894.4 188.6 L895.9 187.6 L897.3 186.6 L898.8 185.8 L900.2 185.1 L901.6 184.5 L903.1 184.2 L904.5 184.0 L906.0 183.9 L907.4 184.0 L908.8 184.2 L910.3 184.5 L911.7 184.9 L913.2 185.3 L914.6 185.7 L916.0 186.2 L917.5 186.8 L918.9 187.5 L920.4 188.2 L921.8 188.9 L923.2 189.7 L924.7 190.5 L926.1 191.4 L927.6 192.2 L929.0 193.1 L930.4 194.1 L931.9 195.0 L933.3 195.9 L934.8 196.8 L936.2 197.7 L937.6 198.6 L939.1 199.5 L940.5 200.4 L942.0 201.3 L943.4 202.2 L944.8 203.0 L946.3 203.8 L947.7 204.6 L949.2 205.4 L950.6 206.2 L952.0 206.9 L953.5 207.6 L954.9 208.3 L956.4 209.0 L957.8 209.6 L959.2 210.2 L960.7 210.7 L962.1 211.3 L963.6 211.8 L965.0 212.3 L966.4 212.7 L967.9 213.2 L969.3 213.6 L970.8 214.1 L972.2 214.5 L973.6 215.0 L975.1 215.4 L976.5 215.8 L978.0 216.1 L979.4 216.4" stroke="#a0522d"/>
<path d="M727.4 165.4 L728.8 165.9 L730.3 166.6 L731.7 167.3 L733.2 168.1 L734.6 169.0 L736.0 169.8 L737.5 170.6 L738.9 171.4 L740.4 172.3 L741.8 173.1 L743.2 173.9 L744.7 174.7 L746.1 175.5 L747.6 176.3 L749.0 177.1 L750.4 177.8 L751.9 178.6 L753.3 179.4 L754.8 180.1 L756.2 180.9 L757.6 181.6 L759.1 182.4 L760.5 183.1 L762.0 183.9 L763.4 184.6 L764.8 185.4 L766.3 186.1 L767.7 186.9 L769.2 187.6 L770.6 188.3 L772.0 189.0 L773.5 189.7 L774.9 190.4 L776.4 191.1 L777.8 191.7 L779.2 192.4 L780.7 193.0 L782.1 193.6 L783.6 194.2 L785.0 194.8 L786.4 195.3 L787.9 195.8 L789.3 196.3 L790.8 196.8 L792.2 197.3 L793.6 197.7 L795.1 198.2 L796.5 198.6 L798.0 199.0 L799.4 199.4 L800.8 199.7 L802.3 200.1 L803.7 200.3 L805.2 200.6 L806.6 200.8 L808.0 200.9 L809.5 201.1 L810.9 201.2 L812.4 201.3 L813.8 201.4 L815.2 201.5 L816.7 201.6 L818.1 201.6 L819.6 201.5 L821.0 201.4 L822.4 201.2 L823.9 201.0 L825.3 200.7 L826.8 200.3 L828.2 199.9 L829.6 199.5 L831.1 199.0 L832.5 198.5 L834.0 198.0 L835.4 197.5 L836.8 197.0 L838.3 196.4 L839.7 195.8 L841.2 195.2 L842.6 194.7 L844.0 194.3 L845.5 194.0 L846.9 193.8 L848.4 193.8 L849.8 193.9 L851.2 194.0 L852.7 194.2 L854.1 194.4 L855.6 194.6 L857.0 194.8 L858.4 195.0 L859.9 195.2 L861.3 195.5 L862.8 195.7 L864.2 195.8 L865.6 195.9 L867.1 196.0 L868.5 195.9 L870.0 195.5 L871.4 195.0 L872.8 194.2 L874.3 193.2 L875.7 191.9 L877.2 190.4 L878.6 188.8 L880.0 186.9 L881.5 185.0 L882.9 182.8 L884.4 180.6 L885.8 178.4 L887.2 176.1 L888.7 174.0 L890.1 172.1 L891.6 170.3 L893.0 168.8 L894.4 167.4 L895.9 166.2 L897.3 165.2 L898.8 164.3 L900.2 163.6 L901.6 163.0 L903.1 162.6 L904.5 162.5 L906.0 162.5 L907.4 162.6 L908.8 162.8 L910.3 163.1 L911.7 163.5 L913.2 163.9 L914.6 164.4 L916.0 165.0 L917.5 165.7 L918.9 166.4 L920.4 167.3 L921.8 168.1 L923.2 169.0 L924.7 169.9 L926.1 170.9 L927.6 171.9 L929.0 172.9 L930.4 174.0 L931.9 175.0 L933.3 176.1 L934.8 177.1 L936.2 178.2 L937.6 179.2 L939.1 180.3 L940.5 181.4 L942.0 182.4 L943.4 183.5 L944.8 184.5 L946.3 185.5 L947.7 186.4 L949.2 187.3 L950.6 188.2 L952.0 189.1 L953.5 189.9 L954.9 190.7 L956.4 191.4 L957.8 192.1 L959.2 192.8 L960.7 193.4 L962.1 194.0 L963.6 194.6 L965.0 195.2 L966.4 195.7 L967.9 196.2 L969.3 196.7 L970.8 197.2 L972.2 197.7 L973.6 198.1 L975.1 198.6 L976.5 199.0 L978.0 199.3 L979.4 199.6" stroke="#b22222"/>
<path d="M727.4 165.1 L728.8 165.6 L730.3 166.3 L731.7 167.0 L733.2 167.8 L734.6 168.6 L736.0 169.4 L737.5 170.3 L738.9 171.1 L740.4 171.9 L741.8 172.7 L743.2 173.5 L744.7 174.3 L746.1 175.1 L747.6 175.8 L749.0 176.6 L750.4 177.4 L751.9 178.1 L753.3 178.9 L754.8 179.7 L756.2 180.4 L757.6 181.1 L759.1 181.9 L760.5 182.6 L762.0 183.3 L763.4 184.1 L764.8 184.8 L766.3 185.5 L767.7 186.3 L769.2 187.0 L770.6 187.7 L772.0 188.4 L773.5 189.1 L774.9 189.8 L776.4 190.5 L777.8 191.1 L779.2 191.7 L780.7 192.4 L782.1 193.0 L783.6 193.5 L785.0 194.1 L786.4 194.6 L787.9 195.1 L789.3 195.6 L790.8 196.1 L792.2 196.6 L793.6 197.0 L795.1 197.4 L796.5 197.8 L798.0 198.2 L799.4 198.6 L800.8 198.9 L802.3 199.3 L803.7 199.5 L805.2 199.7 L806.6 199.9 L808.0 200.1 L809.5 200.2 L810.9 200.4 L812.4 200.5 L813.8 200.5 L815.2 200.6 L816.7 200.6 L818.1 200.6 L819.6 200.6 L821.0 200.5 L822.4 200.3 L823.9 200.0 L825.3 199.7 L826.8 199.3 L828.2 198.9 L829.6 198.4 L831.1 198.0 L832.5 197.5 L834.0 197.0 L835.4 196.5 L836.8 195.9 L838.3 195.3 L839.7 194.7 L841.2 194.2 L842.6 193.7 L844.0 193.3 L845.5 193.0 L846.9 192.8 L848.4 192.8 L849.8 192.9 L851.2 193.0 L852.7 193.2 L854.1 193.5 L855.6 193.7 L857.0 194.0 L858.4 194.2 L859.9 194.5 L861.3 194.7 L862.8 194.9 L864.2 195.1 L865.6 195.3 L867.1 195.4 L868.5 195.3 L870.0 195.0 L871.4 194.5 L872.8 193.7 L874.3 192.7 L875.7 191.5 L877.2 190.1 L878.6 188.4 L880.0 186.7 L881.5 184.7 L882.9 182.6 L884.4 180.4 L885.8 178.2 L887.2 176.0 L888.7 173.9 L890.1 172.0 L891.6 170.2 L893.0 168.7 L894.4 167.3 L895.9 166.2 L897.3 165.1 L898.8 164.3 L900.2 163.5 L901.6 163.0 L903.1 162.6 L904.5 162.5 L906.0 162.4 L907.4 162.5 L908.8 162.8 L910.3 163.0 L911.7 163.4 L913.2 163.8 L914.6 164.3 L916.0 164.8 L917.5 165.5 L918.9 166.2 L920.4 166.9 L921.8 167.7 L923.2 168.6 L924.7 169.4 L926.1 170.3 L927.6 171.3 L929.0 172.2 L930.4 173.2 L931.9 174.2 L933.3 175.2 L934.8 176.2 L936.2 177.1 L937.6 178.1 L939.1 179.1 L940.5 180.1 L942.0 181.1 L943.4 182.1 L944.8 183.0 L946.3 184.0 L947.7 184.8 L949.2 185.7 L950.6 186.5 L952.0 187.3 L953.5 188.1 L954.9 188.8 L956.4 189.5 L957.8 190.1 L959.2 190.8 L960.7 191.3 L962.1 191.9 L963.6 192.4 L965.0 192.9 L966.4 193.4 L967.9 193.9 L969.3 194.3 L970.8 194.8 L972.2 195.2 L973.6 195.6 L975.1 196.0 L976.5 196.4 L978.0 196.7 L979.4 197.0" stroke="#ff4500"/>
<path d="M727.4 202.4 L728.8 202.8 L730.3 203.4 L731.7 204.0 L733.2 204.7 L734.6 205.4 L736.0 206.1 L737.5 206.8 L738.9 207.5 L740.4 208.1 L741.8 208.8 L743.2 209.4 L744.7 210.1 L746.1 210.7 L747.6 211.4 L749.0 212.0 L750.4 212.6 L751.9 213.2 L753.3 213.8 L754.8 214.4 L756.2 215.0 L757.6 215.6 L759.1 216.1 L760.5 216.7 L762.0 217.3 L763.4 217.9 L764.8 218.5 L766.3 219.1 L767.7 219.7 L769.2 220.2 L770.6 220.8 L772.0 221.4 L773.5 221.9 L774.9 222.4 L776.4 222.9 L777.8 223.3 L779.2 223.8 L780.7 224.2 L782.1 224.6 L783.6 224.9 L785.0 225.3 L786.4 225.7 L787.9 226.0 L789.3 226.3 L790.8 226.7 L792.2 227.0 L793.6 227.3 L795.1 227.6 L796.5 228.0 L798.0 228.3 L799.4 228.5 L800.8 228.8 L802.3 229.0 L803.7 229.2 L805.2 229.3 L806.6 229.5 L808.0 229.5 L809.5 229.6 L810.9 229.7 L812.4 229.7 L813.8 229.7 L815.2 229.8 L816.7 229.8 L818.1 229.7 L819.6 229.7 L821.0 229.5 L822.4 229.3 L823.9 229.1 L825.3 228.8 L826.8 228.5 L828.2 228.1 L829.6 227.7 L831.1 227.2 L832.5 226.8 L834.0 226.3 L835.4 225.8 L836.8 225.3 L838.3 224.8 L839.7 224.2 L841.2 223.6 L842.6 223.1 L844.0 222.6 L845.5 222.2 L846.9 222.0 L848.4 221.8 L849.8 221.8 L851.2 221.8 L852.7 221.9 L854.1 222.0 L855.6 222.2 L857.0 222.3 L858.4 222.4 L859.9 222.6 L861.3 222.7 L862.8 222.8 L864.2 222.9 L865.6 223.0 L867.1 223.0 L868.5 223.0 L870.0 222.8 L871.4 222.4 L872.8 221.8 L874.3 220.9 L875.7 219.8 L877.2 218.5 L878.6 217.0 L880.0 215.4 L881.5 213.7 L882.9 211.8 L884.4 209.9 L885.8 207.8 L887.2 205.9 L888.7 204.0 L890.1 202.3 L891.6 200.9 L893.0 199.6 L894.4 198.4 L895.9 197.3 L897.3 196.4 L898.8 195.5 L900.2 194.8 L901.6 194.2 L903.1 193.8 L904.5 193.5 L906.0 193.4 L907.4 193.5 L908.8 193.7 L910.3 193.9 L911.7 194.2 L913.2 194.6 L914.6 195.1 L916.0 195.5 L917.5 196.1 L918.9 196.7 L920.4 197.4 L921.8 198.1 L923.2 198.9 L924.7 199.6 L926.1 200.5 L927.6 201.3 L929.0 202.2 L930.4 203.1 L931.9 204.0 L933.3 204.9 L934.8 205.8 L936.2 206.7 L937.6 207.5 L939.1 208.4 L940.5 209.2 L942.0 210.0 L943.4 210.9 L944.8 211.7 L946.3 212.4 L947.7 213.2 L949.2 213.9 L950.6 214.7 L952.0 215.4 L953.5 216.1 L954.9 216.7 L956.4 217.4 L957.8 218.0 L959.2 218.6 L960.7 219.1 L962.1 219.6 L963.6 220.1 L965.0 220.6 L966.4 221.0 L967.9 221.5 L969.3 221.9 L970.8 222.3 L972.2 222.8 L973.6 223.2 L975.1 223.6 L976.5 224.0 L978.0 224.3 L979.4 224.6" stroke="#e9967a"/>
<path d="M727.4 182.3 L728.8 182.8 L730.3 183.5 L731.7 184.2 L733.2 185.0 L734.6 185.8 L736.0 186.5 L737.5 187.3 L738.9 188.1 L740.4 188.9 L741.8 189.6 L743.2 190.4 L744.7 191.1 L746.1 191.9 L747.6 192.6 L749.0 193.3 L750.4 194.1 L751.9 194.8 L753.3 195.5 L754.8 196.2 L756.2 196.9 L757.6 197.6 L759.1 198.2 L760.5 198.9 L762.0 199.6 L763.4 200.3 L764.8 201.0 L766.3 201.7 L767.7 202.4 L769.2 203.1 L770.6 203.7 L772.0 204.4 L773.5 205.0 L774.9 205.6 L776.4 206.2 L777.8 206.8 L779.2 207.4 L780.7 207.9 L782.1 208.4 L783.6 208.9 L785.0 209.4 L786.4 209.9 L787.9 210.4 L789.3 210.8 L790.8 211.2 L792.2 211.6 L793.6 212.1 L795.1 212.5 L796.5 212.9 L798.0 213.2 L799.4 213.6 L800.8 213.9 L802.3 214.2 L803.7 214.5 L805.2 214.7 L806.6 214.9 L808.0 215.0 L809.5 215.2 L810.9 215.3 L812.4 215.4 L813.8 215.5 L815.2 215.6 L816.7 215.6 L818.1 215.7 L819.6 215.6 L821.0 215.5 L822.4 215.4 L823.9 215.2 L825.3 214.9 L826.8 214.6 L828.2 214.2 L829.6 213.9 L831.1 213.5 L832.5 213.1 L834.0 212.6 L835.4 212.2 L836.8 211.7 L838.3 211.2 L839.7 210.7 L841.2 210.1 L842.6 209.7 L844.0 209.3 L845.5 209.0 L846.9 208.9 L848.4 208.9 L849.8 209.0 L851.2 209.1 L852.7 209.4 L854.1 209.6 L855.6 209.9 L857.0 210.2 L858.4 210.4 L859.9 210.7 L861.3 211.0 L862.8 211.3 L864.2 211.5 L865.6 211.7 L867.1 211.9 L868.5 211.9 L870.0 211.8 L871.4 211.5 L872.8 210.9 L874.3 210.1 L875.7 209.0 L877.2 207.8 L878.6 206.4 L880.0 204.8 L881.5 203.1 L882.9 201.2 L884.4 199.2 L885.8 197.2 L887.2 195.3 L888.7 193.4 L890.1 191.7 L891.6 190.2 L893.0 188.9 L894.4 187.7 L895.9 186.7 L897.3 185.8 L898.8 185.0 L900.2 184.3 L901.6 183.8 L903.1 183.5 L904.5 183.3 L906.0 183.3 L907.4 183.4 L908.8 183.6 L910.3 183.9 L911.7 184.3 L913.2 184.7 L914.6 185.2 L916.0 185.7 L917.5 186.3 L918.9 186.9 L920.4 187.6 L921.8 188.4 L923.2 189.1 L924.7 189.9 L926.1 190.8 L927.6 191.6 L929.0 192.5 L930.4 193.4 L931.9 194.3 L933.3 195.2 L934.8 196.1 L936.2 197.0 L937.6 197.8 L939.1 198.7 L940.5 199.6 L942.0 200.4 L943.4 201.3 L944.8 202.1 L946.3 202.9 L947.7 203.7 L949.2 204.4 L950.6 205.2 L952.0 205.9 L953.5 206.6 L954.9 207.3 L956.4 207.9 L957.8 208.5 L959.2 209.1 L960.7 209.6 L962.1 210.1 L963.6 210.6 L965.0 211.1 L966.4 211.6 L967.9 212.0 L969.3 212.5 L970.8 212.9 L972.2 213.4 L973.6 213.8 L975.1 214.2 L976.5 214.6 L978.0 214.9 L979.4 215.2" stroke="#32cd32"/>
<path d="M727.4 159.4 L728.8 159.9 L730.3 160.6 L731.7 161.3 L733.2 162.1 L734.6 162.9 L736.0 163.7 L737.5 164.5 L738.9 165.3 L740.4 166.2 L741.8 167.0 L743.2 167.8 L744.7 168.5 L746.1 169.3 L747.6 170.1 L749.0 170.9 L750.4 171.7 L751.9 172.4 L753.3 173.2 L754.8 174.0 L756.2 174.7 L757.6 175.5 L759.1 176.2 L760.5 176.9 L762.0 177.7 L763.4 178.4 L764.8 179.1 L766.3 179.9 L767.7 180.6 L769.2 181.3 L770.6 182.1 L772.0 182.8 L773.5 183.5 L774.9 184.1 L776.4 184.8 L777.8 185.5 L779.2 186.1 L780.7 186.8 L782.1 187.4 L783.6 188.0 L785.0 188.6 L786.4 189.1 L787.9 189.6 L789.3 190.1 L790.8 190.6 L792.2 191.0 L793.6 191.5 L795.1 191.9 L796.5 192.3 L798.0 192.7 L799.4 193.0 L800.8 193.4 L802.3 193.7 L803.7 193.9 L805.2 194.1 L806.6 194.3 L808.0 194.4 L809.5 194.6 L810.9 194.7 L812.4 194.7 L813.8 194.8 L815.2 194.8 L816.7 194.9 L818.1 194.8 L819.6 194.7 L821.0 194.6 L822.4 194.3 L823.9 194.0 L825.3 193.7 L826.8 193.2 L828.2 192.8 L829.6 192.3 L831.1 191.8 L832.5 191.2 L834.0 190.7 L835.4 190.1 L836.8 189.5 L838.3 188.8 L839.7 188.2 L841.2 187.5 L842.6 187.0 L844.0 186.5 L845.5 186.2 L846.9 186.0 L848.4 186.0 L849.8 186.0 L851.2 186.1 L852.7 186.2 L854.1 186.4 L855.6 186.6 L857.0 186.8 L858.4 187.0 L859.9 187.2 L861.3 187.3 L862.8 187.5 L864.2 187.6 L865.6 187.7 L867.1 187.7 L868.5 187.5 L870.0 187.1 L871.4 186.4 L872.8 185.5 L874.3 184.4 L875.7 183.0 L877.2 181.4 L878.6 179.7 L880.0 177.7 L881.5 175.6 L882.9 173.3 L884.4 171.0 L885.8 168.6 L887.2 166.3 L888.7 164.1 L890.1 162.0 L891.6 160.1 L893.0 158.4 L894.4 156.9 L895.9 155.6 L897.3 154.5 L898.8 153.5 L900.2 152.8 L901.6 152.2 L903.1 151.8 L904.5 151.6 L906.0 151.5 L907.4 151.6 L908.8 151.8 L910.3 152.1 L911.7 152.4 L913.2 152.8 L914.6 153.3 L916.0 153.9 L917.5 154.5 L918.9 155.2 L920.4 156.1 L921.8 156.9 L923.2 157.8 L924.7 158.7 L926.1 159.7 L927.6 160.7 L929.0 161.7 L930.4 162.7 L931.9 163.7 L933.3 164.8 L934.8 165.9 L936.2 166.9 L937.6 168.0 L939.1 169.1 L940.5 170.2 L942.0 171.2 L943.4 172.3 L944.8 173.3 L946.3 174.3 L947.7 175.3 L949.2 176.2 L950.6 177.1 L952.0 177.9 L953.5 178.7 L954.9 179.5 L956.4 180.2 L957.8 180.9 L959.2 181.6 L960.7 182.2 L962.1 182.8 L963.6 183.3 L965.0 183.8 L966.4 184.3 L967.9 184.8 L969.3 185.3 L970.8 185.7 L972.2 186.1 L973.6 186.6 L975.1 187.0 L976.5 187.3 L978.0 187.6 L979.4 187.9" stroke="#ff00ff"/>
<path d="M727.4 198.0 L728.8 198.4 L730.3 199.0 L731.7 199.7 L733.2 200.4 L734.6 201.1 L736.0 201.9 L737.5 202.6 L738.9 203.3 L740.4 204.0 L741.8 204.7 L743.2 205.4 L744.7 206.0 L746.1 206.7 L747.6 207.4 L749.0 208.0 L750.4 208.7 L751.9 209.3 L753.3 209.9 L754.8 210.5 L756.2 211.1 L757.6 211.8 L759.1 212.4 L760.5 213.0 L762.0 213.6 L763.4 214.2 L764.8 214.8 L766.3 215.4 L767.7 216.1 L769.2 216.7 L770.6 217.3 L772.0 217.9 L773.5 218.4 L774.9 219.0 L776.4 219.5 L777.8 220.0 L779.2 220.4 L780.7 220.9 L782.1 221.3 L783.6 221.7 L785.0 222.1 L786.4 222.5 L787.9 222.8 L789.3 223.2 L790.8 223.6 L792.2 223.9 L793.6 224.3 L795.1 224.6 L796.5 225.0 L798.0 225.3 L799.4 225.6 L800.8 225.9 L802.3 226.1 L803.7 226.3 L805.2 226.5 L806.6 226.6 L808.0 226.7 L809.5 226.8 L810.9 226.9 L812.4 227.0 L813.8 227.1 L815.2 227.1 L816.7 227.1 L818.1 227.1 L819.6 227.1 L821.0 227.0 L822.4 226.8 L823.9 226.6 L825.3 226.3 L826.8 226.0 L828.2 225.7 L829.6 225.3 L831.1 224.9 L832.5 224.5 L834.0 224.1 L835.4 223.6 L836.8 223.1 L838.3 222.6 L839.7 222.1 L841.2 221.6 L842.6 221.1 L844.0 220.7 L845.5 220.4 L846.9 220.2 L848.4 220.1 L849.8 220.2 L851.2 220.3 L852.7 220.5 L854.1 220.7 L855.6 220.9 L857.0 221.2 L858.4 221.4 L859.9 221.7 L861.3 221.9 L862.8 222.1 L864.2 222.4 L865.6 222.6 L867.1 222.7 L868.5 222.8 L870.0 222.7 L871.4 222.4 L872.8 221.9 L874.3 221.2 L875.7 220.2 L877.2 219.0 L878.6 217.7 L880.0 216.2 L881.5 214.6 L882.9 212.8 L884.4 210.9 L885.8 209.0 L887.2 207.1 L888.7 205.4 L890.1 203.8 L891.6 202.4 L893.0 201.2 L894.4 200.1 L895.9 199.1 L897.3 198.2 L898.8 197.4 L900.2 196.8 L901.6 196.3 L903.1 195.9 L904.5 195.7 L906.0 195.6 L907.4 195.7 L908.8 195.9 L910.3 196.2 L911.7 196.5 L913.2 196.8 L914.6 197.3 L916.0 197.7 L917.5 198.3 L918.9 198.8 L920.4 199.5 L921.8 200.1 L923.2 200.8 L924.7 201.5 L926.1 202.3 L927.6 203.1 L929.0 203.9 L930.4 204.7 L931.9 205.5 L933.3 206.3 L934.8 207.1 L936.2 207.9 L937.6 208.7 L939.1 209.5 L940.5 210.2 L942.0 211.0 L943.4 211.7 L944.8 212.4 L946.3 213.1 L947.7 213.8 L949.2 214.5 L950.6 215.1 L952.0 215.8 L953.5 216.4 L954.9 217.0 L956.4 217.5 L957.8 218.1 L959.2 218.6 L960.7 219.1 L962.1 219.6 L963.6 220.0 L965.0 220.4 L966.4 220.9 L967.9 221.3 L969.3 221.7 L970.8 222.1 L972.2 222.5 L973.6 222.9 L975.1 223.3 L976.5 223.7 L978.0 224.0 L979.4 224.2" stroke="#9370db"/>
<path d="M727.4 192.4 L728.8 192.8 L730.3 193.4 L731.7 194.1 L733.2 194.8 L734.6 195.5 L736.0 196.3 L737.5 197.0 L738.9 197.7 L740.4 198.4 L741.8 199.1 L743.2 199.8 L744.7 200.5 L746.1 201.2 L747.6 201.9 L749.0 202.5 L750.4 203.2 L751.9 203.8 L753.3 204.5 L754.8 205.1 L756.2 205.7 L757.6 206.4 L759.1 207.0 L760.5 207.6 L762.0 208.2 L763.4 208.9 L764.8 209.5 L766.3 210.1 L767.7 210.8 L769.2 211.4 L770.6 212.0 L772.0 212.6 L773.5 213.2 L774.9 213.7 L776.4 214.2 L777.8 214.8 L779.2 215.2 L780.7 215.7 L782.1 216.2 L783.6 216.6 L785.0 217.0 L786.4 217.4 L787.9 217.8 L789.3 218.2 L790.8 218.5 L792.2 218.9 L793.6 219.3 L795.1 219.6 L796.5 220.0 L798.0 220.3 L799.4 220.6 L800.8 220.9 L802.3 221.1 L803.7 221.3 L805.2 221.5 L806.6 221.6 L808.0 221.7 L809.5 221.8 L810.9 221.9 L812.4 222.0 L813.8 222.0 L815.2 222.0 L816.7 222.1 L818.1 222.0 L819.6 222.0 L821.0 221.9 L822.4 221.7 L823.9 221.4 L825.3 221.1 L826.8 220.8 L828.2 220.4 L829.6 220.0 L831.1 219.6 L832.5 219.1 L834.0 218.6 L835.4 218.2 L836.8 217.6 L838.3 217.1 L839.7 216.5 L841.2 215.9 L842.6 215.4 L844.0 215.0 L845.5 214.7 L846.9 214.4 L848.4 214.3 L849.8 214.4 L851.2 214.4 L852.7 214.6 L854.1 214.7 L855.6 214.9 L857.0 215.1 L858.4 215.3 L859.9 215.5 L861.3 215.7 L862.8 215.9 L864.2 216.0 L865.6 216.1 L867.1 216.2 L868.5 216.2 L870.0 216.0 L871.4 215.6 L872.8 215.0 L874.3 214.1 L875.7 213.0 L877.2 211.7 L878.6 210.2 L880.0 208.6 L881.5 206.9 L882.9 205.0 L884.4 203.0 L885.8 200.9 L887.2 198.9 L888.7 197.0 L890.1 195.3 L891.6 193.8 L893.0 192.5 L894.4 191.3 L895.9 190.2 L897.3 189.2 L898.8 188.4 L900.2 187.7 L901.6 187.1 L903.1 186.7 L904.5 186.5 L906.0 186.4 L907.4 186.5 L908.8 186.7 L910.3 187.0 L911.7 187.3 L913.2 187.7 L914.6 188.1 L916.0 188.6 L917.5 189.2 L918.9 189.8 L920.4 190.5 L921.8 191.2 L923.2 191.9 L924.7 192.7 L926.1 193.5 L927.6 194.4 L929.0 195.3 L930.4 196.1 L931.9 197.0 L933.3 197.9 L934.8 198.8 L936.2 199.7 L937.6 200.6 L939.1 201.4 L940.5 202.3 L942.0 203.1 L943.4 204.0 L944.8 204.8 L946.3 205.6 L947.7 206.3 L949.2 207.1 L950.6 207.8 L952.0 208.5 L953.5 209.2 L954.9 209.9 L956.4 210.5 L957.8 211.1 L959.2 211.7 L960.7 212.2 L962.1 212.7 L963.6 213.2 L965.0 213.6 L966.4 214.1 L967.9 214.5 L969.3 215.0 L970.8 215.4 L972.2 215.8 L973.6 216.2 L975.1 216.6 L976.5 217.0 L978.0 217.3 L979.4 217.6" stroke="#f4a460"/>
<path d="M727.4 145.7 L728.8 146.2 L730.3 146.9 L731.7 147.7 L733.2 148.5 L734.6 149.4 L736.0 150.2 L737.5 151.1 L738.9 152.0 L740.4 152.8 L741.8 153.7 L743.2 154.5 L744.7 155.4 L746.1 156.3 L747.6 157.1 L749.0 157.9 L750.4 158.8 L751.9 159.6 L753.3 160.4 L754.8 161.2 L756.2 162.1 L757.6 162.9 L759.1 163.7 L760.5 164.5 L762.0 165.3 L763.4 166.1 L764.8 166.9 L766.3 167.7 L767.7 168.4 L769.2 169.2 L770.6 170.0 L772.0 170.8 L773.5 171.5 L774.9 172.3 L776.4 173.0 L777.8 173.8 L779.2 174.5 L780.7 175.2 L782.1 175.9 L783.6 176.6 L785.0 177.2 L786.4 177.9 L787.9 178.4 L789.3 179.0 L790.8 179.5 L792.2 180.0 L793.6 180.5 L795.1 181.0 L796.5 181.4 L798.0 181.8 L799.4 182.2 L800.8 182.6 L802.3 182.9 L803.7 183.2 L805.2 183.5 L806.6 183.7 L808.0 183.9 L809.5 184.0 L810.9 184.2 L812.4 184.3 L813.8 184.4 L815.2 184.4 L816.7 184.5 L818.1 184.4 L819.6 184.4 L821.0 184.2 L822.4 184.0 L823.9 183.7 L825.3 183.3 L826.8 182.9 L828.2 182.4 L829.6 182.0 L831.1 181.4 L832.5 180.9 L834.0 180.4 L835.4 179.8 L836.8 179.2 L838.3 178.5 L839.7 177.9 L841.2 177.3 L842.6 176.8 L844.0 176.4 L845.5 176.1 L846.9 176.0 L848.4 176.0 L849.8 176.1 L851.2 176.3 L852.7 176.5 L854.1 176.7 L855.6 177.0 L857.0 177.2 L858.4 177.5 L859.9 177.8 L861.3 178.0 L862.8 178.3 L864.2 178.5 L865.6 178.6 L867.1 178.6 L868.5 178.5 L870.0 178.1 L871.4 177.5 L872.8 176.6 L874.3 175.4 L875.7 174.0 L877.2 172.5 L878.6 170.7 L880.0 168.7 L881.5 166.6 L882.9 164.3 L884.4 161.9 L885.8 159.5 L887.2 157.2 L888.7 154.9 L890.1 152.8 L891.6 150.8 L893.0 149.1 L894.4 147.6 L895.9 146.3 L897.3 145.2 L898.8 144.2 L900.2 143.5 L901.6 142.9 L903.1 142.5 L904.5 142.4 L906.0 142.4 L907.4 142.5 L908.8 142.7 L910.3 143.0 L911.7 143.4 L913.2 143.8 L914.6 144.3 L916.0 144.8 L917.5 145.5 L918.9 146.2 L920.4 147.0 L921.8 147.9 L923.2 148.8 L924.7 149.8 L926.1 150.7 L927.6 151.7 L929.0 152.7 L930.4 153.7 L931.9 154.8 L933.3 155.8 L934.8 156.9 L936.2 157.9 L937.6 159.0 L939.1 160.1 L940.5 161.2 L942.0 162.3 L943.4 163.4 L944.8 164.4 L946.3 165.5 L947.7 166.4 L949.2 167.3 L950.6 168.2 L952.0 169.1 L953.5 169.9 L954.9 170.6 L956.4 171.4 L957.8 172.1 L959.2 172.7 L960.7 173.3 L962.1 173.9 L963.6 174.4 L965.0 174.9 L966.4 175.4 L967.9 175.9 L969.3 176.4 L970.8 176.8 L972.2 177.2 L973.6 177.7 L975.1 178.0 L976.5 178.4 L978.0 178.7 L979.4 178.9" stroke="#9090d0"/>
<path d="M727.4 170.3 L728.8 170.8 L730.3 171.4 L731.7 172.2 L733.2 173.0 L734.6 173.8 L736.0 174.6 L737.5 175.5 L738.9 176.3 L740.4 177.1 L741.8 177.9 L743.2 178.7 L744.7 179.5 L746.1 180.2 L747.6 181.0 L749.0 181.8 L750.4 182.5 L751.9 183.3 L753.3 184.0 L754.8 184.8 L756.2 185.5 L757.6 186.3 L759.1 187.0 L760.5 187.7 L762.0 188.4 L763.4 189.2 L764.8 189.9 L766.3 190.6 L767.7 191.4 L769.2 192.1 L770.6 192.8 L772.0 193.5 L773.5 194.2 L774.9 194.9 L776.4 195.5 L777.8 196.1 L779.2 196.8 L780.7 197.4 L782.1 197.9 L783.6 198.5 L785.0 199.1 L786.4 199.6 L787.9 200.1 L789.3 200.6 L790.8 201.0 L792.2 201.5 L793.6 201.9 L795.1 202.3 L796.5 202.8 L798.0 203.2 L799.4 203.5 L800.8 203.9 L802.3 204.2 L803.7 204.5 L805.2 204.7 L806.6 204.9 L808.0 205.1 L809.5 205.2 L810.9 205.4 L812.4 205.5 L813.8 205.6 L815.2 205.7 L816.7 205.7 L818.1 205.7 L819.6 205.7 L821.0 205.6 L822.4 205.4 L823.9 205.2 L825.3 204.9 L826.8 204.5 L828.2 204.1 L829.6 203.7 L831.1 203.3 L832.5 202.9 L834.0 202.4 L835.4 201.9 L836.8 201.4 L838.3 200.8 L839.7 200.2 L841.2 199.7 L842.6 199.2 L844.0 198.8 L845.5 198.5 L846.9 198.4 L848.4 198.3 L849.8 198.4 L851.2 198.6 L852.7 198.8 L854.1 199.0 L855.6 199.2 L857.0 199.5 L858.4 199.7 L859.9 200.0 L861.3 200.2 L862.8 200.5 L864.2 200.7 L865.6 200.8 L867.1 200.9 L868.5 200.9 L870.0 200.6 L871.4 200.2 L872.8 199.4 L874.3 198.5 L875.7 197.3 L877.2 195.9 L878.6 194.3 L880.0 192.6 L881.5 190.7 L882.9 188.7 L884.4 186.5 L885.8 184.4 L887.2 182.2 L888.7 180.2 L890.1 178.4 L891.6 176.7 L893.0 175.2 L894.4 173.9 L895.9 172.8 L897.3 171.8 L898.8 170.9 L900.2 170.2 L901.6 169.7 L903.1 169.4 L904.5 169.2 L906.0 169.2 L907.4 169.3 L908.8 169.5 L910.3 169.8 L911.7 170.2 L913.2 170.6 L914.6 171.1 L916.0 171.7 L917.5 172.3 L918.9 173.0 L920.4 173.8 L921.8 174.6 L923.2 175.5 L924.7 176.4 L926.1 177.3 L927.6 178.2 L929.0 179.2 L930.4 180.2 L931.9 181.2 L933.3 182.2 L934.8 183.2 L936.2 184.2 L937.6 185.1 L939.1 186.1 L940.5 187.1 L942.0 188.1 L943.4 189.1 L944.8 190.0 L946.3 191.0 L947.7 191.8 L949.2 192.7 L950.6 193.5 L952.0 194.3 L953.5 195.1 L954.9 195.8 L956.4 196.6 L957.8 197.2 L959.2 197.9 L960.7 198.5 L962.1 199.0 L963.6 199.6 L965.0 200.1 L966.4 200.6 L967.9 201.1 L969.3 201.6 L970.8 202.0 L972.2 202.5 L973.6 202.9 L975.1 203.4 L976.5 203.8 L978.0 204.1 L979.4 204.4" stroke="#708090"/>
<path d="M727.4 142.6 L728.8 143.1 L730.3 143.8 L731.7 144.6 L733.2 145.5 L734.6 146.4 L736.0 147.3 L737.5 148.2 L738.9 149.1 L740.4 149.9 L741.8 150.8 L743.2 151.7 L744.7 152.6 L746.1 153.5 L747.6 154.3 L749.0 155.2 L750.4 156.1 L751.9 156.9 L753.3 157.8 L754.8 158.6 L756.2 159.5 L757.6 160.3 L759.1 161.1 L760.5 161.9 L762.0 162.8 L763.4 163.6 L764.8 164.4 L766.3 165.2 L767.7 166.0 L769.2 166.8 L770.6 167.6 L772.0 168.4 L773.5 169.2 L774.9 170.0 L776.4 170.8 L777.8 171.6 L779.2 172.3 L780.7 173.1 L782.1 173.8 L783.6 174.5 L785.0 175.2 L786.4 175.8 L787.9 176.4 L789.3 177.0 L790.8 177.6 L792.2 178.1 L793.6 178.6 L795.1 179.0 L796.5 179.4 L798.0 179.8 L799.4 180.2 L800.8 180.5 L802.3 180.8 L803.7 181.1 L805.2 181.3 L806.6 181.5 L808.0 181.7 L809.5 181.8 L810.9 181.9 L812.4 182.0 L813.8 182.0 L815.2 182.1 L816.7 182.1 L818.1 182.0 L819.6 181.9 L821.0 181.7 L822.4 181.5 L823.9 181.1 L825.3 180.7 L826.8 180.3 L828.2 179.7 L829.6 179.2 L831.1 178.7 L832.5 178.1 L834.0 177.5 L835.4 176.9 L836.8 176.2 L838.3 175.5 L839.7 174.8 L841.2 174.2 L842.6 173.7 L844.0 173.2 L845.5 172.9 L846.9 172.8 L848.4 172.8 L849.8 172.9 L851.2 173.0 L852.7 173.2 L854.1 173.4 L855.6 173.7 L857.0 173.9 L858.4 174.1 L859.9 174.4 L861.3 174.6 L862.8 174.8 L864.2 175.0 L865.6 175.1 L867.1 175.1 L868.5 174.9 L870.0 174.5 L871.4 173.8 L872.8 172.8 L874.3 171.6 L875.7 170.2 L877.2 168.6 L878.6 166.8 L880.0 164.8 L881.5 162.6 L882.9 160.3 L884.4 157.9 L885.8 155.4 L887.2 153.0 L888.7 150.7 L890.1 148.6 L891.6 146.6 L893.0 144.8 L894.4 143.3 L895.9 142.0 L897.3 140.9 L898.8 139.9 L900.2 139.2 L901.6 138.6 L903.1 138.3 L904.5 138.1 L906.0 138.1 L907.4 138.3 L908.8 138.5 L910.3 138.8 L911.7 139.2 L913.2 139.6 L914.6 140.1 L916.0 140.7 L917.5 141.3 L918.9 142.1 L920.4 142.9 L921.8 143.8 L923.2 144.8 L924.7 145.7 L926.1 146.7 L927.6 147.7 L929.0 148.7 L930.4 149.7 L931.9 150.8 L933.3 151.9 L934.8 152.9 L936.2 154.0 L937.6 155.1 L939.1 156.3 L940.5 157.4 L942.0 158.5 L943.4 159.6 L944.8 160.7 L946.3 161.7 L947.7 162.7 L949.2 163.6 L950.6 164.5 L952.0 165.4 L953.5 166.2 L954.9 167.0 L956.4 167.8 L957.8 168.5 L959.2 169.1 L960.7 169.7 L962.1 170.3 L963.6 170.9 L965.0 171.4 L966.4 171.9 L967.9 172.4 L969.3 172.8 L970.8 173.3 L972.2 173.7 L973.6 174.1 L975.1 174.5 L976.5 174.9 L978.0 175.2 L979.4 175.4" stroke="#8b4513"/>
<path d="M727.4 140.1 L728.8 140.6 L730.3 141.3 L731.7 142.1 L733.2 143.0 L734.6 143.9 L736.0 144.8 L737.5 145.7 L738.9 146.6 L740.4 147.4 L741.8 148.3 L743.2 149.2 L744.7 150.1 L746.1 151.0 L747.6 151.8 L749.0 152.7 L750.4 153.6 L751.9 154.4 L753.3 155.3 L754.8 156.1 L756.2 157.0 L757.6 157.8 L759.1 158.6 L760.5 159.4 L762.0 160.3 L763.4 161.1 L764.8 161.9 L766.3 162.7 L767.7 163.5 L769.2 164.3 L770.6 165.1 L772.0 165.9 L773.5 166.7 L774.9 167.5 L776.4 168.3 L777.8 169.1 L779.2 169.8 L780.7 170.6 L782.1 171.3 L783.6 172.0 L785.0 172.7 L786.4 173.3 L787.9 173.9 L789.3 174.5 L790.8 175.1 L792.2 175.6 L793.6 176.1 L795.1 176.7 L796.5 177.2 L798.0 177.7 L799.4 178.1 L800.8 178.6 L802.3 179.0 L803.7 179.3 L805.2 179.6 L806.6 179.9 L808.0 180.1 L809.5 180.3 L810.9 180.5 L812.4 180.7 L813.8 180.9 L815.2 181.0 L816.7 181.1 L818.1 181.1 L819.6 181.1 L821.0 181.0 L822.4 180.8 L823.9 180.6 L825.3 180.3 L826.8 179.9 L828.2 179.5 L829.6 179.0 L831.1 178.5 L832.5 178.1 L834.0 177.6 L835.4 177.0 L836.8 176.5 L838.3 175.9 L839.7 175.3 L841.2 174.7 L842.6 174.3 L844.0 173.9 L845.5 173.7 L846.9 173.7 L848.4 173.7 L849.8 173.9 L851.2 174.1 L852.7 174.4 L854.1 174.7 L855.6 175.0 L857.0 175.4 L858.4 175.7 L859.9 176.0 L861.3 176.4 L862.8 176.7 L864.2 176.9 L865.6 177.2 L867.1 177.2 L868.5 177.1 L870.0 176.8 L871.4 176.2 L872.8 175.3 L874.3 174.2 L875.7 172.8 L877.2 171.3 L878.6 169.6 L880.0 167.6 L881.5 165.4 L882.9 163.1 L884.4 160.7 L885.8 158.2 L887.2 155.8 L888.7 153.5 L890.1 151.4 L891.6 149.4 L893.0 147.6 L894.4 146.1 L895.9 144.8 L897.3 143.7 L898.8 142.7 L900.2 142.0 L901.6 141.4 L903.1 141.1 L904.5 140.9 L906.0 140.9 L907.4 141.1 L908.8 141.3 L910.3 141.6 L911.7 142.0 L913.2 142.4 L914.6 142.9 L916.0 143.5 L917.5 144.1 L918.9 144.9 L920.4 145.7 L921.8 146.6 L923.2 147.6 L924.7 148.5 L926.1 149.5 L927.6 150.5 L929.0 151.5 L930.4 152.5 L931.9 153.6 L933.3 154.7 L934.8 155.7 L936.2 156.8 L937.6 157.9 L939.1 159.1 L940.5 160.2 L942.0 161.3 L943.4 162.4 L944.8 163.5 L946.3 164.5 L947.7 165.5 L949.2 166.4 L950.6 167.3 L952.0 168.2 L953.5 169.0 L954.9 169.8 L956.4 170.6 L957.8 171.3 L959.2 171.9 L960.7 172.5 L962.1 173.1 L963.6 173.7 L965.0 174.2 L966.4 174.7 L967.9 175.2 L969.3 175.6 L970.8 176.1 L972.2 176.5 L973.6 176.9 L975.1 177.3 L976.5 177.7 L978.0 178.0 L979.4 178.2" stroke="#000080"/>
<path d="M727.4 203.2 L728.8 203.6 L730.3 204.2 L731.7 204.8 L733.2 205.5 L734.6 206.2 L736.0 206.9 L737.5 207.6 L738.9 208.3 L740.4 209.0 L741.8 209.7 L743.2 210.3 L744.7 211.0 L746.1 211.6 L747.6 212.3 L749.0 212.9 L750.4 213.5 L751.9 214.1 L753.3 214.7 L754.8 215.3 L756.2 215.9 L757.6 216.5 L759.1 217.1 L760.5 217.6 L762.0 218.2 L763.4 218.8 L764.8 219.4 L766.3 220.0 L767.7 220.6 L769.2 221.2 L770.6 221.8 L772.0 222.4 L773.5 222.9 L774.9 223.4 L776.4 223.9 L777.8 224.3 L779.2 224.8 L780.7 225.2 L782.1 225.6 L783.6 225.9 L785.0 226.3 L786.4 226.7 L787.9 227.0 L789.3 227.3 L790.8 227.7 L792.2 228.0 L793.6 228.3 L795.1 228.7 L796.5 229.0 L798.0 229.3 L799.4 229.6 L800.8 229.9 L802.3 230.1 L803.7 230.3 L805.2 230.4 L806.6 230.6 L808.0 230.6 L809.5 230.7 L810.9 230.8 L812.4 230.8 L813.8 230.9 L815.2 230.9 L816.7 230.9 L818.1 230.9 L819.6 230.9 L821.0 230.8 L822.4 230.6 L823.9 230.4 L825.3 230.1 L826.8 229.8 L828.2 229.4 L829.6 229.0 L831.1 228.6 L832.5 228.2 L834.0 227.8 L835.4 227.3 L836.8 226.8 L838.3 226.3 L839.7 225.8 L841.2 225.2 L842.6 224.7 L844.0 224.3 L845.5 223.9 L846.9 223.7 L848.4 223.6 L849.8 223.6 L851.2 223.7 L852.7 223.8 L854.1 224.0 L855.6 224.2 L857.0 224.4 L858.4 224.6 L859.9 224.8 L861.3 225.0 L862.8 225.2 L864.2 225.3 L865.6 225.5 L867.1 225.6 L868.5 225.6 L870.0 225.5 L871.4 225.2 L872.8 224.7 L874.3 223.9 L875.7 222.9 L877.2 221.7 L878.6 220.3 L880.0 218.8 L881.5 217.2 L882.9 215.4 L884.4 213.5 L885.8 211.6 L887.2 209.7 L888.7 207.9 L890.1 206.4 L891.6 205.0 L893.0 203.7 L894.4 202.6 L895.9 201.6 L897.3 200.7 L898.8 199.9 L900.2 199.2 L901.6 198.7 L903.1 198.3 L904.5 198.1 L906.0 198.0 L907.4 198.1 L908.8 198.2 L910.3 198.5 L911.7 198.8 L913.2 199.2 L914.6 199.6 L916.0 200.1 L917.5 200.6 L918.9 201.2 L920.4 201.8 L921.8 202.5 L923.2 203.2 L924.7 203.9 L926.1 204.7 L927.6 205.5 L929.0 206.3 L930.4 207.1 L931.9 208.0 L933.3 208.8 L934.8 209.6 L936.2 210.5 L937.6 211.3 L939.1 212.0 L940.5 212.8 L942.0 213.6 L943.4 214.3 L944.8 215.1 L946.3 215.8 L947.7 216.5 L949.2 217.2 L950.6 217.8 L952.0 218.5 L953.5 219.1 L954.9 219.7 L956.4 220.3 L957.8 220.9 L959.2 221.4 L960.7 221.9 L962.1 222.4 L963.6 222.9 L965.0 223.3 L966.4 223.7 L967.9 224.2 L969.3 224.6 L970.8 225.0 L972.2 225.4 L973.6 225.8 L975.1 226.2 L976.5 226.6 L978.0 226.9 L979.4 227.2" stroke="#22e8f0"/>
<path d="M727.4 120.6 L728.8 121.4 L730.3 121.9 L731.7 122.9 L733.2 123.9 L734.6 125.2 L736.0 126.3 L737.5 127.4 L738.9 128.3 L740.4 129.3 L741.8 130.4 L743.2 131.5 L744.7 132.8 L746.1 133.7 L747.6 134.5 L749.0 135.1 L750.4 135.8 L751.9 136.9 L753.3 137.7 L754.8 138.6 L756.2 139.3 L757.6 140.5 L759.1 141.4 L760.5 142.1 L762.0 142.6 L763.4 143.3 L764.8 144.1 L766.3 144.8 L767.7 145.3 L769.2 146.1 L770.6 147.0 L772.0 147.5 L773.5 147.9 L774.9 148.1 L776.4 148.5 L777.8 149.1 L779.2 149.6 L780.7 150.5 L782.1 151.2 L783.6 151.7 L785.0 152.2 L786.4 152.8 L787.9 153.4 L789.3 153.9 L790.8 154.5 L792.2 155.2 L793.6 156.0 L795.1 156.4 L796.5 157.1 L798.0 157.9 L799.4 158.8 L800.8 159.5 L802.3 160.0 L803.7 160.5 L805.2 160.6 L806.6 160.9 L808.0 160.9 L809.5 161.2 L810.9 161.2 L812.4 161.7 L813.8 162.1 L815.2 162.4 L816.7 162.5 L818.1 162.2 L819.6 162.0 L821.0 161.4 L822.4 160.9 L823.9 160.4 L825.3 160.0 L826.8 159.4 L828.2 158.8 L829.6 157.9 L831.1 157.7 L832.5 157.1 L834.0 156.8 L835.4 156.3 L836.8 155.9 L838.3 155.3 L839.7 155.0 L841.2 154.6 L842.6 154.5 L844.0 154.2 L845.5 154.2 L846.9 154.2 L848.4 154.3 L849.8 154.6 L851.2 154.6 L852.7 154.4 L854.1 154.5 L855.6 154.9 L857.0 155.5 L858.4 155.8 L859.9 156.3 L861.3 156.8 L862.8 157.4 L864.2 157.9 L865.6 158.2 L867.1 158.4 L868.5 158.7 L870.0 158.8 L871.4 158.4 L872.8 157.6 L874.3 157.0 L875.7 156.5 L877.2 155.7 L878.6 154.5 L880.0 152.9 L881.5 151.4 L882.9 149.6 L884.4 147.7 L885.8 145.5 L887.2 143.3 L888.7 141.2 L890.1 138.8 L891.6 136.6 L893.0 134.4 L894.4 132.5 L895.9 130.5 L897.3 129.0 L898.8 127.7 L900.2 127.0 L901.6 126.3 L903.1 125.8 L904.5 125.6 L906.0 125.6 L907.4 125.9 L908.8 126.0 L910.3 126.3 L911.7 126.7 L913.2 127.2 L914.6 128.1 L916.0 129.0 L917.5 129.6 L918.9 130.2 L920.4 130.8 L921.8 131.6 L923.2 132.5 L924.7 133.3 L926.1 134.0 L927.6 134.7 L929.0 135.6 L930.4 136.7 L931.9 137.9 L933.3 138.7 L934.8 139.7 L936.2 140.6 L937.6 141.6 L939.1 142.5 L940.5 143.5 L942.0 144.4 L943.4 145.3 L944.8 146.1 L946.3 147.2 L947.7 148.0 L949.2 149.1 L950.6 150.0 L952.0 150.9 L953.5 151.8 L954.9 152.9 L956.4 153.6 L957.8 154.4 L959.2 155.0 L960.7 155.6 L962.1 156.5 L963.6 157.0 L965.0 157.5 L966.4 157.9 L967.9 158.2 L969.3 158.9 L970.8 159.3 L972.2 159.9 L973.6 160.3 L975.1 160.6 L976.5 161.1 L978.0 161.4 L979.4 161.7" stroke="#e87ce8"/>
</g>
<rect x="724.5" y="117.5" width="258.0" height="116.0" fill="none" stroke="#000" stroke-width="1"/>
<line x1="720" y1="124.5" x2="724.5" y2="124.5" stroke="#000" stroke-width="1"/>
<line x1="720" y1="153.5" x2="724.5" y2="153.5" stroke="#000" stroke-width="1"/>
<line x1="720" y1="181.5" x2="724.5" y2="181.5" stroke="#000" stroke-width="1"/>
<line x1="720" y1="209.5" x2="724.5" y2="209.5" stroke="#000" stroke-width="1"/>
<line x1="734.5" y1="233.5" x2="734.5" y2="238.0" stroke="#000" stroke-width="1"/>
<line x1="749.5" y1="233.5" x2="749.5" y2="238.0" stroke="#000" stroke-width="1"/>
<line x1="763.5" y1="233.5" x2="763.5" y2="241.0" stroke="#000" stroke-width="1"/>
<line x1="777.5" y1="233.5" x2="777.5" y2="238.0" stroke="#000" stroke-width="1"/>
<line x1="792.5" y1="233.5" x2="792.5" y2="238.0" stroke="#000" stroke-width="1"/>
<line x1="806.5" y1="233.5" x2="806.5" y2="238.0" stroke="#000" stroke-width="1"/>
<line x1="821.5" y1="233.5" x2="821.5" y2="238.0" stroke="#000" stroke-width="1"/>
<line x1="835.5" y1="233.5" x2="835.5" y2="241.0" stroke="#000" stroke-width="1"/>
<line x1="849.5" y1="233.5" x2="849.5" y2="238.0" stroke="#000" stroke-width="1"/>
<line x1="864.5" y1="233.5" x2="864.5" y2="238.0" stroke="#000" stroke-width="1"/>
<line x1="878.5" y1="233.5" x2="878.5" y2="238.0" stroke="#000" stroke-width="1"/>
<line x1="893.5" y1="233.5" x2="893.5" y2="238.0" stroke="#000" stroke-width="1"/>
<line x1="907.5" y1="233.5" x2="907.5" y2="241.0" stroke="#000" stroke-width="1"/>
<line x1="921.5" y1="233.5" x2="921.5" y2="238.0" stroke="#000" stroke-width="1"/>
<line x1="936.5" y1="233.5" x2="936.5" y2="238.0" stroke="#000" stroke-width="1"/>
<line x1="950.5" y1="233.5" x2="950.5" y2="238.0" stroke="#000" stroke-width="1"/>
<line x1="965.5" y1="233.5" x2="965.5" y2="238.0" stroke="#000" stroke-width="1"/>
<line x1="979.5" y1="233.5" x2="979.5" y2="241.0" stroke="#000" stroke-width="1"/>
<text x="763.4" y="258" font-size="12.5" fill="#333" text-anchor="middle" font-weight="400" letter-spacing="0">800</text>
<text x="835.4" y="258" font-size="12.5" fill="#333" text-anchor="middle" font-weight="400" letter-spacing="0">900</text>
<text x="907.4" y="258" font-size="12.5" fill="#333" text-anchor="middle" font-weight="400" letter-spacing="0">1000</text>
<text x="979.4" y="258" font-size="12.5" fill="#333" text-anchor="middle" font-weight="400" letter-spacing="0">1100</text>
<text x="708.5" y="158" font-size="12.5" fill="#333" text-anchor="middle" font-weight="400" letter-spacing="0">4</text>
<text x="853" y="275.5" font-size="13" fill="#333" text-anchor="middle" font-weight="400" letter-spacing="0">Wavelength / nm</text>
<text x="703" y="175.7" font-size="12.8" fill="#333" text-anchor="middle" font-weight="400" letter-spacing="0" transform="rotate(-90 703 175.7)">Absorbance / AU</text>
</svg>
<div class="t" style="left:673.80px;top:301.04px;font-size:12px;line-height:12px;color:#000;font-weight:400;letter-spacing:0px;transform-origin:0 0;transform:scaleX(0.88);">With pretreatment(s)</div>
<svg class="r" style="left:0;top:0" width="1013" height="555" viewBox="0 0 1013 555" font-family="Liberation Sans, sans-serif">
<text x="851.5" y="349.7" font-size="17.5" fill="#000" text-anchor="middle" font-weight="700" letter-spacing="0.4">wheat22_14</text>
<defs><clipPath id="c2"><rect x="724.5" y="370.5" width="258.0" height="117.0"/></clipPath></defs>
<line x1="727.5" y1="371.0" x2="727.5" y2="487.0" stroke="#a0a0a0" stroke-width="1" stroke-dasharray="1 1"/>
<line x1="790.5" y1="371.0" x2="790.5" y2="487.0" stroke="#a0a0a0" stroke-width="1" stroke-dasharray="1 1"/>
<line x1="853.5" y1="371.0" x2="853.5" y2="487.0" stroke="#a0a0a0" stroke-width="1" stroke-dasharray="1 1"/>
<line x1="916.5" y1="371.0" x2="916.5" y2="487.0" stroke="#a0a0a0" stroke-width="1" stroke-dasharray="1 1"/>
<line x1="979.5" y1="371.0" x2="979.5" y2="487.0" stroke="#a0a0a0" stroke-width="1" stroke-dasharray="1 1"/>
<line x1="725.0" y1="429.5" x2="982.0" y2="429.5" stroke="#a0a0a0" stroke-width="1" stroke-dasharray="1 1"/>
<g clip-path="url(#c2)" fill="none" stroke-width="2.2" stroke-linejoin="round">
<path d="M727.3 427.8 L742.7 427.8 L744.5 416.5 L745.5 416.1 L746.5 415.7 L747.4 415.4 L748.4 415.0 L749.4 414.6 L750.4 414.3 L751.4 413.9 L752.4 413.6 L753.3 413.3 L754.3 413.0 L755.3 412.7 L756.3 412.4 L757.3 412.1 L758.3 411.8 L759.2 411.5 L760.2 411.3 L761.2 411.1 L762.2 410.8 L763.2 410.6 L764.2 410.4 L765.1 410.2 L766.1 410.1 L767.1 410.0 L768.1 409.9 L769.1 409.9 L770.1 409.9 L771.0 409.9 L772.0 410.0 L773.0 410.2 L774.0 410.5 L775.0 410.8 L776.0 411.1 L776.9 411.5 L777.9 412.0 L778.9 412.6 L779.9 413.3 L780.9 414.0 L781.8 414.8 L782.8 415.6 L783.8 416.6 L784.8 417.6 L785.8 418.7 L786.8 420.0 L787.7 421.3 L788.7 422.7 L789.7 424.3 L790.7 426.0 L791.7 427.9 L792.7 429.9 L793.6 431.9 L794.6 434.1 L795.6 436.3 L796.6 438.4 L797.6 440.6 L798.6 442.7 L799.5 444.7 L800.5 446.6 L801.5 448.4 L802.5 450.1 L803.5 451.6 L804.5 452.9 L805.4 454.0 L806.4 454.9 L807.4 455.6 L808.4 456.1 L809.4 456.3 L810.4 456.3 L811.3 456.0 L812.3 455.5 L813.3 454.8 L814.3 453.9 L815.3 452.9 L816.2 451.7 L817.2 450.4 L818.2 448.9 L819.2 447.4 L820.2 445.7 L821.2 444.0 L822.1 442.1 L823.1 440.1 L824.1 437.9 L825.1 435.7 L826.1 433.3 L827.1 430.8 L828.0 428.2 L829.0 425.6 L830.0 422.8 L831.0 420.1 L832.0 417.3 L833.0 414.6 L833.9 411.8 L834.9 409.1 L835.9 406.5 L836.9 403.9 L837.9 401.4 L838.9 398.9 L839.8 396.5 L840.8 394.1 L841.8 391.9 L842.8 389.7 L843.8 387.5 L844.8 385.5 L845.7 383.5 L846.7 381.7 L847.7 380.1 L848.8 378.6 L849.8 377.4 L850.8 376.4 L851.9 375.8 L853.0 375.3 L854.2 375.2 L855.5 375.1 L856.8 375.2 L858.1 375.5 L859.4 376.2 L860.7 377.3 L861.9 378.7 L863.0 380.4 L864.1 382.3 L865.1 384.4 L866.2 386.6 L867.2 388.9 L868.2 391.2 L869.2 393.4 L870.1 395.5 L871.1 397.7 L872.1 399.8 L873.1 402.0 L874.1 404.3 L875.1 406.7 L876.1 409.3 L877.0 412.0 L878.0 415.1 L879.0 418.3 L880.0 421.9 L881.0 425.7 L881.9 429.7 L882.9 433.8 L883.9 437.9 L884.9 442.1 L885.9 446.2 L886.9 450.3 L887.8 454.3 L888.8 458.1 L889.8 461.7 L890.7 465.1 L891.7 468.3 L892.7 471.1 L893.6 473.7 L894.5 475.9 L895.5 477.8 L896.4 479.4 L897.2 480.5 L898.1 481.3 L898.9 481.7 L899.7 481.7 L900.5 481.3 L901.2 480.6 L902.0 479.5 L902.8 478.2 L903.5 476.6 L904.3 474.9 L905.2 473.0 L906.1 471.0 L906.9 469.0 L907.9 467.0 L908.8 465.0 L909.7 462.9 L910.7 461.0 L911.6 459.1 L912.6 457.4 L913.6 455.8 L914.6 454.4 L915.5 453.1 L916.5 451.9 L917.5 450.9 L918.5 449.9 L919.5 449.1 L920.4 448.3 L921.4 447.5 L922.4 446.9 L923.4 446.2 L924.4 445.7 L925.3 445.1 L926.3 444.6 L927.3 444.2 L928.3 443.8 L929.3 443.4 L930.3 443.0 L931.2 442.7 L932.2 442.3 L933.2 442.0 L934.2 441.7 L935.2 441.4 L936.2 441.1 L937.1 440.8 L938.1 440.5 L939.1 440.2 L940.1 439.9 L941.1 439.6 L942.1 439.2 L943.0 438.8 L944.0 438.3 L945.0 437.8 L946.0 437.2 L947.0 436.5 L947.9 435.8 L948.9 434.9 L949.9 434.0 L950.9 433.1 L951.9 432.2 L952.9 431.3 L953.8 430.4 L954.8 429.7 L955.8 429.0 L956.8 428.5 L957.8 428.1 L958.8 427.9 L959.7 427.8 L960.7 427.8 L961.7 427.8 L962.7 427.8 L963.7 427.8 L964.7 427.8 L965.6 427.8 L966.6 427.8 L967.6 427.9 L968.6 427.9 L969.6 427.9 L970.6 427.9 L971.5 427.9 L972.5 427.8 L973.5 427.8 L974.5 427.8 L975.5 427.8 L976.5 427.8 L977.4 427.8 L978.4 427.8 L979.4 427.8" stroke="#708090"/>
<path d="M727.3 428.3 L742.7 428.3 L744.5 416.9 L745.5 416.5 L746.5 416.2 L747.4 415.8 L748.4 415.4 L749.4 415.1 L750.4 414.7 L751.4 414.4 L752.4 414.0 L753.3 413.7 L754.3 413.4 L755.3 413.1 L756.3 412.8 L757.3 412.5 L758.3 412.2 L759.2 412.0 L760.2 411.7 L761.2 411.5 L762.2 411.2 L763.2 411.0 L764.2 410.8 L765.1 410.7 L766.1 410.5 L767.1 410.4 L768.1 410.3 L769.1 410.3 L770.1 410.3 L771.0 410.3 L772.0 410.4 L773.0 410.6 L774.0 410.9 L775.0 411.2 L776.0 411.5 L776.9 412.0 L777.9 412.5 L778.9 413.0 L779.9 413.7 L780.9 414.4 L781.8 415.2 L782.8 416.1 L783.8 417.0 L784.8 418.1 L785.8 419.2 L786.8 420.4 L787.7 421.8 L788.7 423.2 L789.7 424.8 L790.7 426.5 L791.7 428.4 L792.7 430.4 L793.6 432.5 L794.6 434.6 L795.6 436.8 L796.6 439.0 L797.6 441.2 L798.6 443.3 L799.5 445.3 L800.5 447.2 L801.5 449.0 L802.5 450.7 L803.5 452.2 L804.5 453.5 L805.4 454.6 L806.4 455.6 L807.4 456.3 L808.4 456.8 L809.4 457.0 L810.4 457.0 L811.3 456.7 L812.3 456.2 L813.3 455.5 L814.3 454.6 L815.3 453.5 L816.2 452.3 L817.2 451.0 L818.2 449.5 L819.2 448.0 L820.2 446.3 L821.2 444.5 L822.1 442.6 L823.1 440.6 L824.1 438.5 L825.1 436.2 L826.1 433.8 L827.1 431.3 L828.0 428.7 L829.0 426.0 L830.0 423.3 L831.0 420.5 L832.0 417.8 L833.0 415.0 L833.9 412.2 L834.9 409.5 L835.9 406.9 L836.9 404.3 L837.9 401.7 L838.9 399.2 L839.8 396.8 L840.8 394.5 L841.8 392.2 L842.8 390.0 L843.8 387.8 L844.8 385.8 L845.7 383.8 L846.7 382.0 L847.7 380.3 L848.7 378.9 L849.8 377.7 L850.8 376.7 L851.9 376.0 L853.0 375.6 L854.1 375.4 L855.3 375.3 L856.5 375.4 L857.8 375.8 L859.0 376.5 L860.2 377.5 L861.4 379.0 L862.5 380.7 L863.5 382.6 L864.6 384.7 L865.6 386.9 L866.6 389.2 L867.6 391.5 L868.6 393.7 L869.5 395.9 L870.5 398.0 L871.5 400.2 L872.5 402.4 L873.5 404.7 L874.5 407.1 L875.5 409.7 L876.4 412.5 L877.4 415.5 L878.4 418.8 L879.4 422.4 L880.4 426.2 L881.3 430.2 L882.3 434.3 L883.3 438.5 L884.3 442.7 L885.3 446.8 L886.3 450.9 L887.2 454.9 L888.2 458.8 L889.2 462.4 L890.2 465.8 L891.1 469.0 L892.1 471.9 L893.0 474.4 L894.0 476.7 L894.9 478.6 L895.8 480.1 L896.7 481.3 L897.6 482.1 L898.5 482.5 L899.3 482.5 L900.1 482.1 L900.9 481.3 L901.7 480.2 L902.5 478.9 L903.4 477.3 L904.2 475.6 L905.1 473.7 L906.0 471.8 L906.9 469.7 L907.8 467.7 L908.8 465.6 L909.7 463.6 L910.7 461.7 L911.6 459.8 L912.6 458.1 L913.6 456.5 L914.5 455.0 L915.5 453.7 L916.5 452.6 L917.5 451.5 L918.5 450.5 L919.4 449.7 L920.4 448.9 L921.4 448.1 L922.4 447.5 L923.4 446.8 L924.4 446.3 L925.3 445.7 L926.3 445.2 L927.3 444.8 L928.3 444.3 L929.3 443.9 L930.3 443.6 L931.2 443.2 L932.2 442.9 L933.2 442.6 L934.2 442.3 L935.2 442.0 L936.2 441.7 L937.1 441.4 L938.1 441.1 L939.1 440.8 L940.1 440.5 L941.1 440.1 L942.1 439.7 L943.0 439.3 L944.0 438.8 L945.0 438.3 L946.0 437.7 L947.0 437.1 L947.9 436.3 L948.9 435.5 L949.9 434.6 L950.9 433.6 L951.9 432.7 L952.9 431.8 L953.8 430.9 L954.8 430.2 L955.8 429.5 L956.8 429.0 L957.8 428.6 L958.8 428.4 L959.7 428.3 L960.7 428.3 L961.7 428.3 L962.7 428.3 L963.7 428.3 L964.7 428.3 L965.6 428.3 L966.6 428.3 L967.6 428.4 L968.6 428.4 L969.6 428.4 L970.6 428.4 L971.5 428.4 L972.5 428.3 L973.5 428.3 L974.5 428.3 L975.5 428.3 L976.5 428.3 L977.4 428.3 L978.4 428.3 L979.4 428.3" stroke="#20b2aa"/>
<path d="M728.8 428.1 L744.2 428.1 L746.0 416.8 L747.0 416.5 L748.0 416.1 L748.9 415.7 L749.9 415.4 L750.9 415.0 L751.9 414.7 L752.9 414.3 L753.9 414.0 L754.8 413.7 L755.8 413.3 L756.8 413.0 L757.8 412.7 L758.8 412.5 L759.8 412.2 L760.7 411.9 L761.7 411.7 L762.7 411.4 L763.7 411.2 L764.7 411.0 L765.7 410.8 L766.6 410.6 L767.6 410.5 L768.6 410.4 L769.6 410.3 L770.6 410.2 L771.6 410.3 L772.5 410.3 L773.5 410.4 L774.5 410.6 L775.5 410.8 L776.5 411.1 L777.5 411.5 L778.4 411.9 L779.4 412.4 L780.4 413.0 L781.4 413.6 L782.4 414.3 L783.3 415.1 L784.3 416.0 L785.3 416.9 L786.3 418.0 L787.3 419.1 L788.3 420.3 L789.2 421.6 L790.2 423.0 L791.2 424.6 L792.2 426.3 L793.2 428.2 L794.2 430.1 L795.1 432.2 L796.1 434.4 L797.1 436.5 L798.1 438.7 L799.1 440.8 L800.1 442.9 L801.0 444.9 L802.0 446.8 L803.0 448.6 L804.0 450.2 L805.0 451.7 L806.0 453.1 L806.9 454.2 L807.9 455.1 L808.9 455.8 L809.9 456.3 L810.9 456.5 L811.9 456.5 L812.8 456.2 L813.8 455.7 L814.8 455.0 L815.8 454.1 L816.8 453.0 L817.7 451.9 L818.7 450.5 L819.7 449.1 L820.7 447.6 L821.7 445.9 L822.7 444.2 L823.6 442.3 L824.6 440.3 L825.6 438.2 L826.6 435.9 L827.6 433.6 L828.6 431.1 L829.5 428.5 L830.5 425.9 L831.5 423.2 L832.5 420.4 L833.5 417.7 L834.5 414.9 L835.4 412.2 L836.4 409.5 L837.4 406.9 L838.4 404.3 L839.4 401.8 L840.4 399.3 L841.3 396.9 L842.3 394.6 L843.3 392.4 L844.3 390.2 L845.3 388.0 L846.3 386.0 L847.2 384.1 L848.2 382.3 L849.2 380.6 L850.2 379.2 L851.2 378.0 L852.1 377.0 L853.1 376.3 L854.1 375.9 L855.1 375.7 L856.1 375.7 L857.1 375.8 L858.0 376.1 L859.0 376.8 L860.0 377.9 L861.0 379.3 L862.0 380.9 L863.0 382.9 L863.9 384.9 L864.9 387.1 L865.9 389.4 L866.9 391.6 L867.9 393.9 L868.9 396.0 L869.8 398.1 L870.8 400.3 L871.8 402.4 L872.8 404.7 L873.8 407.1 L874.8 409.7 L875.7 412.4 L876.7 415.4 L877.7 418.7 L878.7 422.2 L879.7 426.0 L880.6 430.0 L881.6 434.0 L882.6 438.2 L883.6 442.3 L884.6 446.4 L885.6 450.5 L886.5 454.5 L887.5 458.3 L888.5 461.9 L889.5 465.3 L890.5 468.4 L891.5 471.2 L892.4 473.8 L893.4 476.0 L894.4 477.9 L895.4 479.4 L896.4 480.6 L897.4 481.4 L898.3 481.8 L899.3 481.7 L900.3 481.3 L901.3 480.6 L902.3 479.5 L903.3 478.2 L904.2 476.7 L905.2 474.9 L906.2 473.1 L907.2 471.1 L908.2 469.1 L909.2 467.1 L910.1 465.1 L911.1 463.1 L912.1 461.1 L913.1 459.3 L914.1 457.6 L915.0 456.0 L916.0 454.6 L917.0 453.3 L918.0 452.1 L919.0 451.1 L920.0 450.1 L920.9 449.3 L921.9 448.5 L922.9 447.7 L923.9 447.1 L924.9 446.5 L925.9 445.9 L926.8 445.4 L927.8 444.9 L928.8 444.4 L929.8 444.0 L930.8 443.6 L931.8 443.2 L932.7 442.9 L933.7 442.6 L934.7 442.2 L935.7 441.9 L936.7 441.6 L937.7 441.4 L938.6 441.1 L939.6 440.8 L940.6 440.5 L941.6 440.1 L942.6 439.8 L943.6 439.4 L944.5 439.0 L945.5 438.5 L946.5 438.0 L947.5 437.4 L948.5 436.8 L949.4 436.0 L950.4 435.2 L951.4 434.3 L952.4 433.4 L953.4 432.4 L954.4 431.6 L955.3 430.7 L956.3 429.9 L957.3 429.3 L958.3 428.8 L959.3 428.4 L960.3 428.2 L961.2 428.1 L962.2 428.1 L963.2 428.1 L964.2 428.1 L965.2 428.1 L966.2 428.1 L967.1 428.1 L968.1 428.1 L969.1 428.2 L970.1 428.2 L971.1 428.2 L972.1 428.2 L973.0 428.2 L974.0 428.1 L975.0 428.1 L976.0 428.1 L977.0 428.1 L978.0 428.1 L978.9 428.1 L979.9 428.1 L980.9 428.1" stroke="#808080"/>
<path d="M726.7 427.8 L742.1 427.8 L743.9 416.2 L744.9 415.8 L745.9 415.4 L746.8 415.0 L747.8 414.7 L748.8 414.3 L749.8 413.9 L750.8 413.6 L751.8 413.2 L752.7 412.9 L753.7 412.6 L754.7 412.3 L755.7 412.0 L756.7 411.7 L757.7 411.4 L758.6 411.1 L759.6 410.9 L760.6 410.6 L761.6 410.4 L762.6 410.2 L763.6 410.0 L764.5 409.8 L765.5 409.6 L766.5 409.5 L767.5 409.4 L768.5 409.4 L769.5 409.4 L770.4 409.5 L771.4 409.6 L772.4 409.8 L773.4 410.0 L774.4 410.3 L775.4 410.7 L776.3 411.1 L777.3 411.6 L778.3 412.2 L779.3 412.9 L780.3 413.6 L781.2 414.4 L782.2 415.3 L783.2 416.3 L784.2 417.4 L785.2 418.5 L786.2 419.8 L787.1 421.1 L788.1 422.6 L789.1 424.2 L790.1 426.0 L791.1 427.9 L792.1 429.9 L793.0 432.0 L794.0 434.2 L795.0 436.5 L796.0 438.7 L797.0 440.9 L798.0 443.1 L798.9 445.1 L799.9 447.1 L800.9 448.9 L801.9 450.6 L802.9 452.2 L803.9 453.5 L804.8 454.7 L805.8 455.6 L806.8 456.3 L807.8 456.8 L808.8 457.1 L809.8 457.0 L810.7 456.8 L811.7 456.2 L812.7 455.5 L813.7 454.6 L814.7 453.5 L815.6 452.3 L816.6 450.9 L817.6 449.5 L818.6 447.9 L819.6 446.2 L820.6 444.4 L821.5 442.4 L822.5 440.4 L823.5 438.2 L824.5 435.9 L825.5 433.4 L826.5 430.9 L827.4 428.2 L828.4 425.5 L829.4 422.7 L830.4 419.9 L831.4 417.0 L832.4 414.2 L833.3 411.4 L834.3 408.6 L835.3 405.9 L836.3 403.3 L837.3 400.7 L838.3 398.2 L839.2 395.7 L840.2 393.3 L841.2 391.0 L842.2 388.7 L843.2 386.5 L844.2 384.4 L845.1 382.4 L846.1 380.6 L847.1 378.9 L848.1 377.4 L849.1 376.1 L850.0 375.1 L851.0 374.4 L852.0 374.0 L853.0 373.8 L854.0 373.8 L855.0 373.8 L855.9 374.2 L856.9 374.9 L857.9 376.0 L858.9 377.5 L859.9 379.2 L860.9 381.2 L861.8 383.3 L862.8 385.6 L863.8 387.9 L864.8 390.2 L865.8 392.5 L866.8 394.7 L867.7 396.9 L868.7 399.1 L869.7 401.4 L870.7 403.7 L871.7 406.2 L872.7 408.8 L873.6 411.6 L874.6 414.7 L875.6 418.1 L876.6 421.8 L877.6 425.6 L878.5 429.7 L879.5 433.9 L880.5 438.2 L881.5 442.5 L882.5 446.7 L883.5 450.9 L884.4 455.0 L885.4 458.9 L886.4 462.6 L887.4 466.1 L888.4 469.3 L889.4 472.2 L890.3 474.9 L891.3 477.1 L892.3 479.1 L893.3 480.7 L894.3 481.9 L895.3 482.7 L896.2 483.1 L897.2 483.1 L898.2 482.7 L899.2 481.9 L900.2 480.8 L901.2 479.4 L902.1 477.8 L903.1 476.1 L904.1 474.1 L905.1 472.1 L906.1 470.1 L907.1 468.0 L908.0 465.9 L909.0 463.8 L910.0 461.8 L911.0 459.9 L912.0 458.2 L912.9 456.5 L913.9 455.1 L914.9 453.7 L915.9 452.5 L916.9 451.5 L917.9 450.5 L918.8 449.6 L919.8 448.8 L920.8 448.0 L921.8 447.4 L922.8 446.7 L923.8 446.1 L924.7 445.6 L925.7 445.1 L926.7 444.6 L927.7 444.2 L928.7 443.8 L929.7 443.4 L930.6 443.0 L931.6 442.7 L932.6 442.4 L933.6 442.1 L934.6 441.8 L935.6 441.4 L936.5 441.1 L937.5 440.8 L938.5 440.5 L939.5 440.2 L940.5 439.8 L941.5 439.5 L942.4 439.0 L943.4 438.6 L944.4 438.0 L945.4 437.4 L946.4 436.7 L947.3 436.0 L948.3 435.1 L949.3 434.2 L950.3 433.2 L951.3 432.3 L952.3 431.3 L953.2 430.5 L954.2 429.7 L955.2 429.0 L956.2 428.5 L957.2 428.1 L958.2 427.9 L959.1 427.8 L960.1 427.8 L961.1 427.8 L962.1 427.8 L963.1 427.8 L964.1 427.8 L965.0 427.8 L966.0 427.8 L967.0 427.8 L968.0 427.9 L969.0 427.9 L970.0 427.9 L970.9 427.8 L971.9 427.8 L972.9 427.8 L973.9 427.8 L974.9 427.8 L975.9 427.8 L976.8 427.8 L977.8 427.8 L978.8 427.8" stroke="#00008b"/>
<path d="M728.3 428.0 L743.7 428.0 L745.5 416.6 L746.5 416.2 L747.5 415.9 L748.4 415.5 L749.4 415.1 L750.4 414.8 L751.4 414.4 L752.4 414.1 L753.4 413.7 L754.3 413.4 L755.3 413.1 L756.3 412.8 L757.3 412.5 L758.3 412.2 L759.3 411.9 L760.2 411.7 L761.2 411.4 L762.2 411.2 L763.2 410.9 L764.2 410.7 L765.2 410.5 L766.1 410.4 L767.1 410.2 L768.1 410.1 L769.1 410.0 L770.1 410.0 L771.1 410.0 L772.0 410.0 L773.0 410.1 L774.0 410.3 L775.0 410.6 L776.0 410.9 L777.0 411.2 L777.9 411.7 L778.9 412.2 L779.9 412.7 L780.9 413.4 L781.9 414.1 L782.8 414.9 L783.8 415.8 L784.8 416.7 L785.8 417.8 L786.8 418.9 L787.8 420.1 L788.7 421.5 L789.7 422.9 L790.7 424.5 L791.7 426.2 L792.7 428.1 L793.7 430.1 L794.6 432.2 L795.6 434.3 L796.6 436.5 L797.6 438.7 L798.6 440.9 L799.6 443.0 L800.5 445.0 L801.5 446.9 L802.5 448.7 L803.5 450.4 L804.5 451.9 L805.5 453.2 L806.4 454.3 L807.4 455.3 L808.4 456.0 L809.4 456.5 L810.4 456.7 L811.4 456.7 L812.3 456.4 L813.3 455.9 L814.3 455.2 L815.3 454.3 L816.3 453.2 L817.2 452.0 L818.2 450.7 L819.2 449.2 L820.2 447.7 L821.2 446.0 L822.2 444.2 L823.1 442.3 L824.1 440.3 L825.1 438.2 L826.1 435.9 L827.1 433.5 L828.1 431.0 L829.0 428.4 L830.0 425.7 L831.0 423.0 L832.0 420.2 L833.0 417.5 L834.0 414.7 L834.9 411.9 L835.9 409.2 L836.9 406.6 L837.9 404.0 L838.9 401.4 L839.9 398.9 L840.8 396.5 L841.8 394.2 L842.8 391.9 L843.8 389.7 L844.8 387.5 L845.8 385.5 L846.7 383.5 L847.7 381.7 L848.7 380.0 L849.7 378.6 L850.7 377.4 L851.6 376.4 L852.6 375.7 L853.6 375.3 L854.6 375.1 L855.6 375.0 L856.6 375.1 L857.5 375.5 L858.5 376.2 L859.5 377.2 L860.5 378.7 L861.5 380.4 L862.5 382.3 L863.4 384.4 L864.4 386.6 L865.4 388.9 L866.4 391.2 L867.4 393.4 L868.4 395.6 L869.3 397.7 L870.3 399.9 L871.3 402.1 L872.3 404.4 L873.3 406.8 L874.3 409.4 L875.2 412.2 L876.2 415.2 L877.2 418.5 L878.2 422.1 L879.2 425.9 L880.1 429.9 L881.1 434.0 L882.1 438.2 L883.1 442.4 L884.1 446.5 L885.1 450.6 L886.0 454.6 L887.0 458.5 L888.0 462.1 L889.0 465.5 L890.0 468.7 L891.0 471.6 L891.9 474.1 L892.9 476.4 L893.9 478.3 L894.9 479.8 L895.9 481.0 L896.9 481.8 L897.8 482.2 L898.8 482.2 L899.8 481.8 L900.8 481.0 L901.8 479.9 L902.8 478.6 L903.7 477.0 L904.7 475.3 L905.7 473.4 L906.7 471.5 L907.7 469.4 L908.7 467.4 L909.6 465.3 L910.6 463.3 L911.6 461.4 L912.6 459.5 L913.6 457.8 L914.5 456.2 L915.5 454.7 L916.5 453.4 L917.5 452.3 L918.5 451.2 L919.5 450.2 L920.4 449.4 L921.4 448.6 L922.4 447.8 L923.4 447.2 L924.4 446.5 L925.4 446.0 L926.3 445.4 L927.3 444.9 L928.3 444.5 L929.3 444.0 L930.3 443.6 L931.3 443.3 L932.2 442.9 L933.2 442.6 L934.2 442.3 L935.2 442.0 L936.2 441.7 L937.2 441.4 L938.1 441.1 L939.1 440.8 L940.1 440.5 L941.1 440.2 L942.1 439.8 L943.1 439.4 L944.0 439.0 L945.0 438.5 L946.0 438.0 L947.0 437.4 L948.0 436.8 L948.9 436.0 L949.9 435.2 L950.9 434.3 L951.9 433.3 L952.9 432.4 L953.9 431.5 L954.8 430.6 L955.8 429.9 L956.8 429.2 L957.8 428.7 L958.8 428.3 L959.8 428.1 L960.7 428.0 L961.7 428.0 L962.7 428.0 L963.7 428.0 L964.7 428.0 L965.7 428.0 L966.6 428.0 L967.6 428.0 L968.6 428.1 L969.6 428.1 L970.6 428.1 L971.6 428.1 L972.5 428.1 L973.5 428.0 L974.5 428.0 L975.5 428.0 L976.5 428.0 L977.5 428.0 L978.4 428.0 L979.4 428.0 L980.4 428.0" stroke="#40e0d0"/>
<path d="M727.6 428.1 L743.0 428.1 L744.8 416.6 L745.8 416.2 L746.8 415.8 L747.7 415.5 L748.7 415.1 L749.7 414.7 L750.7 414.4 L751.7 414.0 L752.7 413.7 L753.6 413.4 L754.6 413.0 L755.6 412.7 L756.6 412.4 L757.6 412.1 L758.6 411.9 L759.5 411.6 L760.5 411.3 L761.5 411.1 L762.5 410.9 L763.5 410.7 L764.5 410.5 L765.4 410.3 L766.4 410.1 L767.4 410.0 L768.4 409.9 L769.4 409.9 L770.4 409.9 L771.3 409.9 L772.3 410.1 L773.3 410.2 L774.3 410.5 L775.3 410.8 L776.3 411.2 L777.2 411.6 L778.2 412.1 L779.2 412.7 L780.2 413.3 L781.2 414.1 L782.1 414.9 L783.1 415.7 L784.1 416.7 L785.1 417.8 L786.1 418.9 L787.1 420.1 L788.0 421.5 L789.0 422.9 L790.0 424.5 L791.0 426.3 L792.0 428.2 L793.0 430.2 L793.9 432.3 L794.9 434.5 L795.9 436.7 L796.9 438.9 L797.9 441.1 L798.9 443.2 L799.8 445.2 L800.8 447.2 L801.8 449.0 L802.8 450.7 L803.8 452.2 L804.8 453.6 L805.7 454.7 L806.7 455.6 L807.7 456.4 L808.7 456.8 L809.7 457.1 L810.7 457.1 L811.6 456.8 L812.6 456.3 L813.6 455.5 L814.6 454.6 L815.6 453.5 L816.5 452.3 L817.5 451.0 L818.5 449.5 L819.5 448.0 L820.5 446.3 L821.5 444.5 L822.4 442.6 L823.4 440.5 L824.4 438.4 L825.4 436.1 L826.4 433.7 L827.4 431.1 L828.3 428.5 L829.3 425.8 L830.3 423.1 L831.3 420.3 L832.3 417.5 L833.3 414.7 L834.2 411.9 L835.2 409.1 L836.2 406.4 L837.2 403.8 L838.2 401.3 L839.2 398.8 L840.1 396.3 L841.1 393.9 L842.1 391.6 L843.1 389.4 L844.1 387.2 L845.1 385.1 L846.0 383.2 L847.0 381.3 L848.0 379.7 L849.0 378.2 L850.0 376.9 L850.9 376.0 L851.9 375.3 L852.9 374.8 L853.9 374.6 L854.9 374.6 L855.9 374.7 L856.8 375.0 L857.8 375.7 L858.8 376.8 L859.8 378.3 L860.8 380.0 L861.8 381.9 L862.7 384.0 L863.7 386.3 L864.7 388.6 L865.7 390.9 L866.7 393.1 L867.7 395.3 L868.6 397.5 L869.6 399.7 L870.6 401.9 L871.6 404.2 L872.6 406.7 L873.6 409.3 L874.5 412.1 L875.5 415.2 L876.5 418.5 L877.5 422.1 L878.5 426.0 L879.4 430.0 L880.4 434.2 L881.4 438.4 L882.4 442.6 L883.4 446.8 L884.4 451.0 L885.3 455.0 L886.3 458.9 L887.3 462.6 L888.3 466.0 L889.3 469.2 L890.3 472.1 L891.2 474.7 L892.2 477.0 L893.2 478.9 L894.2 480.5 L895.2 481.6 L896.2 482.5 L897.1 482.9 L898.1 482.8 L899.1 482.4 L900.1 481.7 L901.1 480.6 L902.1 479.2 L903.0 477.6 L904.0 475.9 L905.0 474.0 L906.0 472.0 L907.0 470.0 L908.0 467.9 L908.9 465.8 L909.9 463.8 L910.9 461.8 L911.9 459.9 L912.9 458.2 L913.8 456.6 L914.8 455.1 L915.8 453.8 L916.8 452.6 L917.8 451.5 L918.8 450.6 L919.7 449.7 L920.7 448.9 L921.7 448.1 L922.7 447.5 L923.7 446.8 L924.7 446.2 L925.6 445.7 L926.6 445.2 L927.6 444.7 L928.6 444.3 L929.6 443.9 L930.6 443.5 L931.5 443.2 L932.5 442.8 L933.5 442.5 L934.5 442.2 L935.5 441.9 L936.5 441.6 L937.4 441.3 L938.4 441.0 L939.4 440.7 L940.4 440.4 L941.4 440.0 L942.4 439.6 L943.3 439.2 L944.3 438.8 L945.3 438.2 L946.3 437.6 L947.3 436.9 L948.2 436.2 L949.2 435.3 L950.2 434.4 L951.2 433.5 L952.2 432.5 L953.2 431.6 L954.1 430.8 L955.1 430.0 L956.1 429.3 L957.1 428.8 L958.1 428.4 L959.1 428.2 L960.0 428.1 L961.0 428.1 L962.0 428.1 L963.0 428.1 L964.0 428.1 L965.0 428.1 L965.9 428.1 L966.9 428.1 L967.9 428.2 L968.9 428.2 L969.9 428.2 L970.9 428.2 L971.8 428.1 L972.8 428.1 L973.8 428.1 L974.8 428.1 L975.8 428.1 L976.8 428.1 L977.7 428.1 L978.7 428.1 L979.7 428.1" stroke="#9400d3"/>
<path d="M726.4 427.8 L741.8 427.8 L743.6 415.9 L744.6 415.5 L745.6 415.1 L746.5 414.7 L747.5 414.3 L748.5 414.0 L749.5 413.6 L750.5 413.2 L751.5 412.9 L752.4 412.5 L753.4 412.2 L754.4 411.9 L755.4 411.6 L756.4 411.3 L757.4 411.0 L758.3 410.7 L759.3 410.4 L760.3 410.2 L761.3 410.0 L762.3 409.7 L763.3 409.5 L764.2 409.3 L765.2 409.2 L766.2 409.1 L767.2 409.0 L768.2 408.9 L769.2 408.9 L770.1 409.0 L771.1 409.1 L772.1 409.3 L773.1 409.6 L774.1 409.9 L775.1 410.3 L776.0 410.7 L777.0 411.2 L778.0 411.8 L779.0 412.5 L780.0 413.3 L780.9 414.1 L781.9 415.0 L782.9 416.0 L783.9 417.1 L784.9 418.3 L785.9 419.6 L786.8 420.9 L787.8 422.5 L788.8 424.1 L789.8 425.9 L790.8 427.9 L791.8 430.0 L792.7 432.1 L793.7 434.4 L794.7 436.7 L795.7 439.0 L796.7 441.2 L797.7 443.4 L798.6 445.5 L799.6 447.5 L800.6 449.4 L801.6 451.2 L802.6 452.8 L803.6 454.1 L804.5 455.3 L805.5 456.3 L806.5 457.0 L807.5 457.5 L808.5 457.8 L809.5 457.8 L810.4 457.5 L811.4 456.9 L812.4 456.2 L813.4 455.2 L814.4 454.1 L815.3 452.9 L816.3 451.5 L817.3 450.0 L818.3 448.4 L819.3 446.6 L820.3 444.8 L821.2 442.8 L822.2 440.7 L823.2 438.4 L824.2 436.1 L825.2 433.6 L826.2 430.9 L827.1 428.2 L828.1 425.4 L829.1 422.6 L830.1 419.7 L831.1 416.8 L832.1 413.9 L833.0 411.0 L834.0 408.2 L835.0 405.4 L836.0 402.7 L837.0 400.0 L838.0 397.4 L838.9 394.9 L839.9 392.4 L840.9 390.0 L841.9 387.7 L842.9 385.5 L843.9 383.3 L844.8 381.3 L845.8 379.4 L846.8 377.7 L847.8 376.1 L848.8 374.8 L849.7 373.8 L850.7 373.1 L851.7 372.7 L852.7 372.5 L853.7 372.4 L854.7 372.5 L855.6 372.9 L856.6 373.6 L857.6 374.7 L858.6 376.2 L859.6 378.0 L860.6 380.0 L861.5 382.2 L862.5 384.5 L863.5 386.9 L864.5 389.3 L865.5 391.6 L866.5 393.9 L867.4 396.1 L868.4 398.4 L869.4 400.7 L870.4 403.1 L871.4 405.6 L872.4 408.3 L873.3 411.2 L874.3 414.4 L875.3 417.9 L876.3 421.6 L877.3 425.6 L878.2 429.8 L879.2 434.1 L880.2 438.4 L881.2 442.8 L882.2 447.2 L883.2 451.4 L884.1 455.6 L885.1 459.6 L886.1 463.5 L887.1 467.0 L888.1 470.3 L889.1 473.3 L890.0 476.0 L891.0 478.4 L892.0 480.4 L893.0 482.0 L894.0 483.2 L895.0 484.1 L895.9 484.5 L896.9 484.4 L897.9 484.0 L898.9 483.2 L899.9 482.1 L900.9 480.7 L901.8 479.1 L902.8 477.2 L903.8 475.3 L904.8 473.2 L905.8 471.1 L906.8 469.0 L907.7 466.8 L908.7 464.7 L909.7 462.7 L910.7 460.7 L911.7 458.9 L912.6 457.2 L913.6 455.7 L914.6 454.4 L915.6 453.2 L916.6 452.0 L917.6 451.0 L918.5 450.1 L919.5 449.3 L920.5 448.5 L921.5 447.8 L922.5 447.2 L923.5 446.6 L924.4 446.0 L925.4 445.5 L926.4 445.0 L927.4 444.6 L928.4 444.1 L929.4 443.8 L930.3 443.4 L931.3 443.1 L932.3 442.7 L933.3 442.4 L934.3 442.1 L935.3 441.8 L936.2 441.5 L937.2 441.2 L938.2 440.8 L939.2 440.5 L940.2 440.1 L941.2 439.7 L942.1 439.3 L943.1 438.8 L944.1 438.3 L945.1 437.6 L946.1 436.9 L947.0 436.2 L948.0 435.3 L949.0 434.3 L950.0 433.4 L951.0 432.4 L952.0 431.4 L952.9 430.5 L953.9 429.7 L954.9 429.1 L955.9 428.5 L956.9 428.2 L957.9 427.9 L958.8 427.8 L959.8 427.8 L960.8 427.8 L961.8 427.8 L962.8 427.8 L963.8 427.8 L964.7 427.8 L965.7 427.8 L966.7 427.8 L967.7 427.8 L968.7 427.8 L969.7 427.8 L970.6 427.8 L971.6 427.8 L972.6 427.8 L973.6 427.8 L974.6 427.8 L975.6 427.8 L976.5 427.8 L977.5 427.8 L978.5 427.8" stroke="#32cd32"/>
<path d="M726.6 427.8 L742.0 427.8 L743.8 415.9 L744.8 415.6 L745.8 415.2 L746.7 414.8 L747.7 414.4 L748.7 414.0 L749.7 413.7 L750.7 413.3 L751.7 412.9 L752.6 412.6 L753.6 412.3 L754.6 412.0 L755.6 411.6 L756.6 411.3 L757.6 411.1 L758.5 410.8 L759.5 410.5 L760.5 410.3 L761.5 410.0 L762.5 409.8 L763.5 409.6 L764.4 409.4 L765.4 409.3 L766.4 409.1 L767.4 409.1 L768.4 409.0 L769.4 409.0 L770.3 409.1 L771.3 409.2 L772.3 409.4 L773.3 409.7 L774.3 410.0 L775.3 410.3 L776.2 410.8 L777.2 411.3 L778.2 411.9 L779.2 412.6 L780.2 413.3 L781.1 414.2 L782.1 415.1 L783.1 416.1 L784.1 417.1 L785.1 418.3 L786.1 419.6 L787.0 421.0 L788.0 422.5 L789.0 424.1 L790.0 425.9 L791.0 427.9 L792.0 429.9 L792.9 432.1 L793.9 434.4 L794.9 436.6 L795.9 438.9 L796.9 441.2 L797.9 443.4 L798.8 445.5 L799.8 447.5 L800.8 449.3 L801.8 451.1 L802.8 452.6 L803.8 454.0 L804.7 455.2 L805.7 456.2 L806.7 456.9 L807.7 457.4 L808.7 457.6 L809.7 457.6 L810.6 457.3 L811.6 456.8 L812.6 456.0 L813.6 455.1 L814.6 454.0 L815.5 452.8 L816.5 451.4 L817.5 449.9 L818.5 448.3 L819.5 446.5 L820.5 444.7 L821.4 442.7 L822.4 440.6 L823.4 438.4 L824.4 436.0 L825.4 433.5 L826.4 430.9 L827.3 428.2 L828.3 425.4 L829.3 422.6 L830.3 419.7 L831.3 416.8 L832.3 413.9 L833.2 411.1 L834.2 408.3 L835.2 405.5 L836.2 402.8 L837.2 400.1 L838.2 397.6 L839.1 395.0 L840.1 392.6 L841.1 390.2 L842.1 387.9 L843.1 385.7 L844.1 383.5 L845.0 381.5 L846.0 379.6 L847.0 377.9 L848.0 376.4 L849.0 375.1 L849.9 374.1 L850.9 373.4 L851.9 372.9 L852.9 372.7 L853.9 372.7 L854.9 372.8 L855.8 373.1 L856.8 373.9 L857.8 375.0 L858.8 376.5 L859.8 378.2 L860.8 380.2 L861.7 382.4 L862.7 384.7 L863.7 387.1 L864.7 389.5 L865.7 391.8 L866.7 394.1 L867.6 396.3 L868.6 398.5 L869.6 400.8 L870.6 403.2 L871.6 405.7 L872.6 408.4 L873.5 411.3 L874.5 414.5 L875.5 417.9 L876.5 421.6 L877.5 425.6 L878.4 429.8 L879.4 434.0 L880.4 438.4 L881.4 442.7 L882.4 447.1 L883.4 451.3 L884.3 455.5 L885.3 459.5 L886.3 463.3 L887.3 466.8 L888.3 470.1 L889.3 473.1 L890.2 475.8 L891.2 478.1 L892.2 480.1 L893.2 481.7 L894.2 482.9 L895.2 483.8 L896.1 484.2 L897.1 484.2 L898.1 483.7 L899.1 483.0 L900.1 481.8 L901.1 480.4 L902.0 478.8 L903.0 477.0 L904.0 475.1 L905.0 473.0 L906.0 470.9 L907.0 468.8 L907.9 466.6 L908.9 464.5 L909.9 462.5 L910.9 460.6 L911.9 458.8 L912.8 457.1 L913.8 455.6 L914.8 454.3 L915.8 453.0 L916.8 451.9 L917.8 450.9 L918.7 450.0 L919.7 449.2 L920.7 448.4 L921.7 447.7 L922.7 447.1 L923.7 446.5 L924.6 445.9 L925.6 445.4 L926.6 444.9 L927.6 444.5 L928.6 444.1 L929.6 443.7 L930.5 443.3 L931.5 443.0 L932.5 442.7 L933.5 442.3 L934.5 442.0 L935.5 441.7 L936.4 441.4 L937.4 441.1 L938.4 440.8 L939.4 440.4 L940.4 440.1 L941.4 439.7 L942.3 439.3 L943.3 438.8 L944.3 438.2 L945.3 437.6 L946.3 436.9 L947.2 436.1 L948.2 435.2 L949.2 434.3 L950.2 433.3 L951.2 432.4 L952.2 431.4 L953.1 430.5 L954.1 429.7 L955.1 429.1 L956.1 428.5 L957.1 428.2 L958.1 427.9 L959.0 427.8 L960.0 427.8 L961.0 427.8 L962.0 427.8 L963.0 427.8 L964.0 427.8 L964.9 427.8 L965.9 427.8 L966.9 427.8 L967.9 427.8 L968.9 427.8 L969.9 427.8 L970.8 427.8 L971.8 427.8 L972.8 427.8 L973.8 427.8 L974.8 427.8 L975.8 427.8 L976.7 427.8 L977.7 427.8 L978.7 427.8" stroke="#000000"/>
<path d="M726.9 427.8 L742.3 427.8 L744.1 416.2 L745.1 415.8 L746.1 415.4 L747.0 415.0 L748.0 414.7 L749.0 414.3 L750.0 413.9 L751.0 413.6 L752.0 413.2 L752.9 412.9 L753.9 412.6 L754.9 412.3 L755.9 412.0 L756.9 411.7 L757.9 411.4 L758.8 411.1 L759.8 410.9 L760.8 410.6 L761.8 410.4 L762.8 410.2 L763.8 410.0 L764.7 409.8 L765.7 409.6 L766.7 409.5 L767.7 409.4 L768.7 409.4 L769.7 409.4 L770.6 409.5 L771.6 409.6 L772.6 409.8 L773.6 410.0 L774.6 410.3 L775.6 410.7 L776.5 411.1 L777.5 411.6 L778.5 412.2 L779.5 412.9 L780.5 413.6 L781.4 414.4 L782.4 415.3 L783.4 416.3 L784.4 417.4 L785.4 418.5 L786.4 419.8 L787.3 421.1 L788.3 422.6 L789.3 424.2 L790.3 426.0 L791.3 427.9 L792.3 429.9 L793.2 432.0 L794.2 434.2 L795.2 436.5 L796.2 438.7 L797.2 440.9 L798.2 443.1 L799.1 445.1 L800.1 447.1 L801.1 448.9 L802.1 450.6 L803.1 452.2 L804.1 453.5 L805.0 454.7 L806.0 455.6 L807.0 456.3 L808.0 456.8 L809.0 457.1 L810.0 457.0 L810.9 456.8 L811.9 456.2 L812.9 455.5 L813.9 454.6 L814.9 453.5 L815.8 452.3 L816.8 450.9 L817.8 449.5 L818.8 447.9 L819.8 446.2 L820.8 444.4 L821.7 442.4 L822.7 440.4 L823.7 438.2 L824.7 435.9 L825.7 433.4 L826.7 430.9 L827.6 428.2 L828.6 425.5 L829.6 422.7 L830.6 419.9 L831.6 417.0 L832.6 414.2 L833.5 411.4 L834.5 408.6 L835.5 405.9 L836.5 403.3 L837.5 400.7 L838.5 398.2 L839.4 395.7 L840.4 393.3 L841.4 391.0 L842.4 388.7 L843.4 386.5 L844.4 384.4 L845.3 382.4 L846.3 380.6 L847.3 378.9 L848.3 377.4 L849.3 376.1 L850.2 375.1 L851.2 374.4 L852.2 374.0 L853.2 373.8 L854.2 373.8 L855.2 373.8 L856.1 374.2 L857.1 374.9 L858.1 376.0 L859.1 377.5 L860.1 379.2 L861.1 381.2 L862.0 383.3 L863.0 385.6 L864.0 387.9 L865.0 390.2 L866.0 392.5 L867.0 394.7 L867.9 396.9 L868.9 399.1 L869.9 401.4 L870.9 403.7 L871.9 406.2 L872.9 408.8 L873.8 411.6 L874.8 414.7 L875.8 418.1 L876.8 421.8 L877.8 425.6 L878.7 429.7 L879.7 433.9 L880.7 438.2 L881.7 442.5 L882.7 446.7 L883.7 450.9 L884.6 455.0 L885.6 458.9 L886.6 462.6 L887.6 466.1 L888.6 469.3 L889.6 472.2 L890.5 474.9 L891.5 477.1 L892.5 479.1 L893.5 480.7 L894.5 481.9 L895.5 482.7 L896.4 483.1 L897.4 483.1 L898.4 482.7 L899.4 481.9 L900.4 480.8 L901.4 479.4 L902.3 477.8 L903.3 476.1 L904.3 474.1 L905.3 472.1 L906.3 470.1 L907.3 468.0 L908.2 465.9 L909.2 463.8 L910.2 461.8 L911.2 459.9 L912.2 458.2 L913.1 456.5 L914.1 455.1 L915.1 453.7 L916.1 452.5 L917.1 451.5 L918.1 450.5 L919.0 449.6 L920.0 448.8 L921.0 448.0 L922.0 447.4 L923.0 446.7 L924.0 446.1 L924.9 445.6 L925.9 445.1 L926.9 444.6 L927.9 444.2 L928.9 443.8 L929.9 443.4 L930.8 443.0 L931.8 442.7 L932.8 442.4 L933.8 442.1 L934.8 441.8 L935.8 441.4 L936.7 441.1 L937.7 440.8 L938.7 440.5 L939.7 440.2 L940.7 439.8 L941.7 439.5 L942.6 439.0 L943.6 438.6 L944.6 438.0 L945.6 437.4 L946.6 436.7 L947.5 436.0 L948.5 435.1 L949.5 434.2 L950.5 433.2 L951.5 432.3 L952.5 431.3 L953.4 430.5 L954.4 429.7 L955.4 429.0 L956.4 428.5 L957.4 428.1 L958.4 427.9 L959.3 427.8 L960.3 427.8 L961.3 427.8 L962.3 427.8 L963.3 427.8 L964.3 427.8 L965.2 427.8 L966.2 427.8 L967.2 427.8 L968.2 427.9 L969.2 427.9 L970.2 427.9 L971.1 427.8 L972.1 427.8 L973.1 427.8 L974.1 427.8 L975.1 427.8 L976.1 427.8 L977.0 427.8 L978.0 427.8 L979.0 427.8" stroke="#000000"/>
<path d="M727.7 428.0 L743.1 428.0 L744.9 416.5 L745.9 416.1 L746.9 415.7 L747.8 415.4 L748.8 415.0 L749.8 414.6 L750.8 414.3 L751.8 413.9 L752.8 413.6 L753.7 413.3 L754.7 412.9 L755.7 412.6 L756.7 412.3 L757.7 412.0 L758.7 411.8 L759.6 411.5 L760.6 411.2 L761.6 411.0 L762.6 410.8 L763.6 410.6 L764.6 410.4 L765.5 410.2 L766.5 410.0 L767.5 409.9 L768.5 409.8 L769.5 409.8 L770.5 409.8 L771.4 409.8 L772.4 410.0 L773.4 410.1 L774.4 410.4 L775.4 410.7 L776.4 411.1 L777.3 411.5 L778.3 412.0 L779.3 412.6 L780.3 413.2 L781.3 414.0 L782.2 414.8 L783.2 415.6 L784.2 416.6 L785.2 417.7 L786.2 418.8 L787.2 420.0 L788.1 421.4 L789.1 422.8 L790.1 424.4 L791.1 426.2 L792.1 428.1 L793.1 430.1 L794.0 432.2 L795.0 434.4 L796.0 436.6 L797.0 438.8 L798.0 441.0 L799.0 443.1 L799.9 445.1 L800.9 447.1 L801.9 448.9 L802.9 450.6 L803.9 452.1 L804.9 453.5 L805.8 454.6 L806.8 455.5 L807.8 456.3 L808.8 456.7 L809.8 457.0 L810.8 457.0 L811.7 456.7 L812.7 456.2 L813.7 455.4 L814.7 454.5 L815.7 453.4 L816.6 452.2 L817.6 450.9 L818.6 449.4 L819.6 447.9 L820.6 446.2 L821.6 444.4 L822.5 442.5 L823.5 440.4 L824.5 438.3 L825.5 436.0 L826.5 433.6 L827.5 431.0 L828.4 428.4 L829.4 425.7 L830.4 423.0 L831.4 420.2 L832.4 417.4 L833.4 414.6 L834.3 411.8 L835.3 409.0 L836.3 406.3 L837.3 403.7 L838.3 401.2 L839.3 398.7 L840.2 396.2 L841.2 393.8 L842.2 391.5 L843.2 389.3 L844.2 387.1 L845.2 385.0 L846.1 383.1 L847.1 381.2 L848.1 379.6 L849.1 378.1 L850.1 376.8 L851.0 375.9 L852.0 375.2 L853.0 374.7 L854.0 374.5 L855.0 374.5 L856.0 374.6 L856.9 374.9 L857.9 375.6 L858.9 376.7 L859.9 378.2 L860.9 379.9 L861.9 381.8 L862.8 383.9 L863.8 386.2 L864.8 388.5 L865.8 390.8 L866.8 393.0 L867.8 395.2 L868.7 397.4 L869.7 399.6 L870.7 401.8 L871.7 404.1 L872.7 406.6 L873.7 409.2 L874.6 412.0 L875.6 415.1 L876.6 418.4 L877.6 422.0 L878.6 425.9 L879.5 429.9 L880.5 434.1 L881.5 438.3 L882.5 442.5 L883.5 446.7 L884.5 450.9 L885.4 454.9 L886.4 458.8 L887.4 462.5 L888.4 465.9 L889.4 469.1 L890.4 472.0 L891.3 474.6 L892.3 476.9 L893.3 478.8 L894.3 480.4 L895.3 481.5 L896.3 482.4 L897.2 482.8 L898.2 482.7 L899.2 482.3 L900.2 481.6 L901.2 480.5 L902.2 479.1 L903.1 477.5 L904.1 475.8 L905.1 473.9 L906.1 471.9 L907.1 469.9 L908.1 467.8 L909.0 465.7 L910.0 463.7 L911.0 461.7 L912.0 459.8 L913.0 458.1 L913.9 456.5 L914.9 455.0 L915.9 453.7 L916.9 452.5 L917.9 451.4 L918.9 450.5 L919.8 449.6 L920.8 448.8 L921.8 448.0 L922.8 447.4 L923.8 446.7 L924.8 446.1 L925.7 445.6 L926.7 445.1 L927.7 444.6 L928.7 444.2 L929.7 443.8 L930.7 443.4 L931.6 443.1 L932.6 442.7 L933.6 442.4 L934.6 442.1 L935.6 441.8 L936.6 441.5 L937.5 441.2 L938.5 440.9 L939.5 440.6 L940.5 440.3 L941.5 439.9 L942.5 439.5 L943.4 439.1 L944.4 438.7 L945.4 438.1 L946.4 437.5 L947.4 436.8 L948.3 436.1 L949.3 435.2 L950.3 434.3 L951.3 433.4 L952.3 432.4 L953.3 431.5 L954.2 430.7 L955.2 429.9 L956.2 429.2 L957.2 428.7 L958.2 428.3 L959.2 428.1 L960.1 428.0 L961.1 428.0 L962.1 428.0 L963.1 428.0 L964.1 428.0 L965.1 428.0 L966.0 428.0 L967.0 428.0 L968.0 428.1 L969.0 428.1 L970.0 428.1 L971.0 428.1 L971.9 428.0 L972.9 428.0 L973.9 428.0 L974.9 428.0 L975.9 428.0 L976.9 428.0 L977.8 428.0 L978.8 428.0 L979.8 428.0" stroke="#ff00ff"/>
<path d="M727.3 427.9 L742.7 427.9 L744.5 416.4 L745.5 416.0 L746.5 415.6 L747.4 415.3 L748.4 414.9 L749.4 414.5 L750.4 414.2 L751.4 413.8 L752.4 413.5 L753.3 413.2 L754.3 412.8 L755.3 412.5 L756.3 412.2 L757.3 411.9 L758.3 411.7 L759.2 411.4 L760.2 411.1 L761.2 410.9 L762.2 410.7 L763.2 410.5 L764.2 410.3 L765.1 410.1 L766.1 409.9 L767.1 409.8 L768.1 409.7 L769.1 409.7 L770.1 409.7 L771.0 409.7 L772.0 409.9 L773.0 410.0 L774.0 410.3 L775.0 410.6 L776.0 411.0 L776.9 411.4 L777.9 411.9 L778.9 412.5 L779.9 413.1 L780.9 413.9 L781.8 414.7 L782.8 415.5 L783.8 416.5 L784.8 417.6 L785.8 418.7 L786.8 419.9 L787.7 421.3 L788.7 422.7 L789.7 424.3 L790.7 426.1 L791.7 428.0 L792.7 430.0 L793.6 432.1 L794.6 434.3 L795.6 436.5 L796.6 438.7 L797.6 440.9 L798.6 443.0 L799.5 445.0 L800.5 447.0 L801.5 448.8 L802.5 450.5 L803.5 452.0 L804.5 453.4 L805.4 454.5 L806.4 455.4 L807.4 456.2 L808.4 456.6 L809.4 456.9 L810.4 456.9 L811.3 456.6 L812.3 456.1 L813.3 455.3 L814.3 454.4 L815.3 453.3 L816.2 452.1 L817.2 450.8 L818.2 449.3 L819.2 447.8 L820.2 446.1 L821.2 444.3 L822.1 442.4 L823.1 440.3 L824.1 438.2 L825.1 435.9 L826.1 433.5 L827.1 430.9 L828.0 428.3 L829.0 425.6 L830.0 422.9 L831.0 420.1 L832.0 417.3 L833.0 414.5 L833.9 411.7 L834.9 408.9 L835.9 406.2 L836.9 403.6 L837.9 401.1 L838.9 398.6 L839.8 396.1 L840.8 393.7 L841.8 391.4 L842.8 389.2 L843.8 387.0 L844.8 384.9 L845.7 383.0 L846.7 381.1 L847.7 379.5 L848.7 378.0 L849.7 376.7 L850.6 375.8 L851.6 375.1 L852.6 374.6 L853.6 374.4 L854.6 374.4 L855.6 374.5 L856.5 374.8 L857.5 375.5 L858.5 376.6 L859.5 378.1 L860.5 379.8 L861.5 381.7 L862.4 383.8 L863.4 386.1 L864.4 388.4 L865.4 390.7 L866.4 392.9 L867.4 395.1 L868.3 397.3 L869.3 399.5 L870.3 401.7 L871.3 404.0 L872.3 406.5 L873.3 409.1 L874.2 411.9 L875.2 415.0 L876.2 418.3 L877.2 421.9 L878.2 425.8 L879.1 429.8 L880.1 434.0 L881.1 438.2 L882.1 442.4 L883.1 446.6 L884.1 450.8 L885.0 454.8 L886.0 458.7 L887.0 462.4 L888.0 465.8 L889.0 469.0 L890.0 471.9 L890.9 474.5 L891.9 476.8 L892.9 478.7 L893.9 480.3 L894.9 481.4 L895.9 482.3 L896.8 482.7 L897.8 482.6 L898.8 482.2 L899.8 481.5 L900.8 480.4 L901.8 479.0 L902.7 477.4 L903.7 475.7 L904.7 473.8 L905.7 471.8 L906.7 469.8 L907.7 467.7 L908.6 465.6 L909.6 463.6 L910.6 461.6 L911.6 459.7 L912.6 458.0 L913.5 456.4 L914.5 454.9 L915.5 453.6 L916.5 452.4 L917.5 451.3 L918.5 450.4 L919.4 449.5 L920.4 448.7 L921.4 447.9 L922.4 447.3 L923.4 446.6 L924.4 446.0 L925.3 445.5 L926.3 445.0 L927.3 444.5 L928.3 444.1 L929.3 443.7 L930.3 443.3 L931.2 443.0 L932.2 442.6 L933.2 442.3 L934.2 442.0 L935.2 441.7 L936.2 441.4 L937.1 441.1 L938.1 440.8 L939.1 440.5 L940.1 440.2 L941.1 439.8 L942.1 439.4 L943.0 439.0 L944.0 438.6 L945.0 438.0 L946.0 437.4 L947.0 436.7 L947.9 436.0 L948.9 435.1 L949.9 434.2 L950.9 433.3 L951.9 432.3 L952.9 431.4 L953.8 430.6 L954.8 429.8 L955.8 429.1 L956.8 428.6 L957.8 428.2 L958.8 428.0 L959.7 427.9 L960.7 427.9 L961.7 427.9 L962.7 427.9 L963.7 427.9 L964.7 427.9 L965.6 427.9 L966.6 427.9 L967.6 428.0 L968.6 428.0 L969.6 428.0 L970.6 428.0 L971.5 427.9 L972.5 427.9 L973.5 427.9 L974.5 427.9 L975.5 427.9 L976.5 427.9 L977.4 427.9 L978.4 427.9 L979.4 427.9" stroke="#b0205a"/>
<path d="M727.3 427.8 L742.7 427.8 L744.5 416.3 L745.5 415.9 L746.5 415.5 L747.4 415.2 L748.4 414.8 L749.4 414.4 L750.4 414.1 L751.4 413.7 L752.4 413.4 L753.3 413.1 L754.3 412.7 L755.3 412.4 L756.3 412.1 L757.3 411.8 L758.3 411.6 L759.2 411.3 L760.2 411.0 L761.2 410.8 L762.2 410.6 L763.2 410.4 L764.2 410.2 L765.1 410.0 L766.1 409.8 L767.1 409.7 L768.1 409.6 L769.1 409.6 L770.1 409.6 L771.0 409.6 L772.0 409.8 L773.0 409.9 L774.0 410.2 L775.0 410.5 L776.0 410.9 L776.9 411.3 L777.9 411.8 L778.9 412.4 L779.9 413.0 L780.9 413.8 L781.8 414.6 L782.8 415.4 L783.8 416.4 L784.8 417.5 L785.8 418.6 L786.8 419.8 L787.7 421.2 L788.7 422.6 L789.7 424.2 L790.7 426.0 L791.7 427.9 L792.7 429.9 L793.6 432.0 L794.6 434.2 L795.6 436.4 L796.6 438.6 L797.6 440.8 L798.6 442.9 L799.5 444.9 L800.5 446.9 L801.5 448.7 L802.5 450.4 L803.5 451.9 L804.5 453.3 L805.4 454.4 L806.4 455.3 L807.4 456.1 L808.4 456.5 L809.4 456.8 L810.4 456.8 L811.3 456.5 L812.3 456.0 L813.3 455.2 L814.3 454.3 L815.3 453.2 L816.2 452.0 L817.2 450.7 L818.2 449.2 L819.2 447.7 L820.2 446.0 L821.2 444.2 L822.1 442.3 L823.1 440.2 L824.1 438.1 L825.1 435.8 L826.1 433.4 L827.1 430.8 L828.0 428.2 L829.0 425.5 L830.0 422.8 L831.0 420.0 L832.0 417.2 L833.0 414.4 L833.9 411.6 L834.9 408.8 L835.9 406.1 L836.9 403.5 L837.9 401.0 L838.9 398.5 L839.8 396.0 L840.8 393.6 L841.8 391.3 L842.8 389.1 L843.8 386.9 L844.8 384.8 L845.7 382.9 L846.7 381.0 L847.7 379.4 L848.7 377.9 L849.7 376.6 L850.6 375.7 L851.6 375.0 L852.6 374.5 L853.6 374.3 L854.6 374.3 L855.6 374.4 L856.5 374.7 L857.5 375.4 L858.5 376.5 L859.5 378.0 L860.5 379.7 L861.5 381.6 L862.4 383.7 L863.4 386.0 L864.4 388.3 L865.4 390.6 L866.4 392.8 L867.4 395.0 L868.3 397.2 L869.3 399.4 L870.3 401.6 L871.3 403.9 L872.3 406.4 L873.3 409.0 L874.2 411.8 L875.2 414.9 L876.2 418.2 L877.2 421.8 L878.2 425.7 L879.1 429.7 L880.1 433.9 L881.1 438.1 L882.1 442.3 L883.1 446.5 L884.1 450.7 L885.0 454.7 L886.0 458.6 L887.0 462.3 L888.0 465.7 L889.0 468.9 L890.0 471.8 L890.9 474.4 L891.9 476.7 L892.9 478.6 L893.9 480.2 L894.9 481.3 L895.9 482.2 L896.8 482.6 L897.8 482.5 L898.8 482.1 L899.8 481.4 L900.8 480.3 L901.8 478.9 L902.7 477.3 L903.7 475.6 L904.7 473.7 L905.7 471.7 L906.7 469.7 L907.7 467.6 L908.6 465.5 L909.6 463.5 L910.6 461.5 L911.6 459.6 L912.6 457.8 L913.5 456.2 L914.5 454.8 L915.5 453.4 L916.5 452.2 L917.5 451.1 L918.5 450.1 L919.4 449.2 L920.4 448.3 L921.4 447.4 L922.4 446.6 L923.4 445.9 L924.4 445.1 L925.3 444.4 L926.3 443.7 L927.3 443.1 L928.3 442.4 L929.3 441.8 L930.3 441.2 L931.2 440.6 L932.2 440.1 L933.2 439.6 L934.2 439.1 L935.2 438.7 L936.2 438.3 L937.1 438.0 L938.1 437.7 L939.1 437.5 L940.1 437.3 L941.1 437.1 L942.1 436.9 L943.0 436.7 L944.0 436.5 L945.0 436.2 L946.0 435.8 L947.0 435.3 L947.9 434.8 L948.9 434.1 L949.9 433.4 L950.9 432.6 L951.9 431.8 L952.9 430.9 L953.8 430.2 L954.8 429.5 L955.8 428.9 L956.8 428.4 L957.8 428.1 L958.8 427.9 L959.7 427.8 L960.7 427.8 L961.7 427.8 L962.7 427.8 L963.7 427.8 L964.7 427.8 L965.6 427.8 L966.6 427.8 L967.6 427.8 L968.6 427.9 L969.6 427.9 L970.6 427.9 L971.5 427.8 L972.5 427.8 L973.5 427.8 L974.5 427.8 L975.5 427.8 L976.5 427.8 L977.4 427.8 L978.4 427.8 L979.4 427.8" stroke="#00ffff" stroke-width="2"/>
<path d="M727.3 427.8 L742.7 427.8 L744.5 416.3 L745.5 415.9 L746.5 415.5 L747.4 415.2 L748.4 414.8 L749.4 414.4 L750.4 414.1 L751.4 413.7 L752.4 413.4 L753.3 413.1 L754.3 412.7 L755.3 412.4 L756.3 412.1 L757.3 411.8 L758.3 411.6 L759.2 411.3 L760.2 411.0 L761.2 410.8 L762.2 410.6 L763.2 410.4 L764.2 410.2 L765.1 410.0 L766.1 409.8 L767.1 409.7 L768.1 409.6 L769.1 409.6 L770.1 409.6 L771.0 409.6 L772.0 409.8 L773.0 409.9 L774.0 410.2 L775.0 410.5 L776.0 410.9 L776.9 411.3 L777.9 411.8 L778.9 412.4 L779.9 413.0 L780.9 413.8 L781.8 414.6 L782.8 415.4 L783.8 416.4 L784.8 417.5 L785.8 418.6 L786.8 419.8 L787.7 421.2 L788.7 422.6 L789.7 424.2 L790.7 426.0 L791.7 427.9 L792.7 429.9 L793.6 432.0 L794.6 434.2 L795.6 436.4 L796.6 438.6 L797.6 440.8 L798.6 442.9 L799.5 444.9 L800.5 446.9 L801.5 448.7 L802.5 450.4 L803.5 451.9 L804.5 453.3 L805.4 454.4 L806.4 455.3 L807.4 456.1 L808.4 456.5 L809.4 456.8 L810.4 456.8 L811.3 456.5 L812.3 456.0 L813.3 455.2 L814.3 454.3 L815.3 453.2 L816.2 452.0 L817.2 450.7 L818.2 449.2 L819.2 447.7 L820.2 446.0 L821.2 444.2 L822.1 442.3 L823.1 440.2 L824.1 438.1 L825.1 435.8 L826.1 433.4 L827.1 430.8 L828.0 428.2 L829.0 425.5 L830.0 422.8 L831.0 420.0 L832.0 417.2 L833.0 414.4 L833.9 411.6 L834.9 408.8 L835.9 406.1 L836.9 403.5 L837.9 401.0 L838.9 398.5 L839.8 396.0 L840.8 393.6 L841.8 391.3 L842.8 389.1 L843.8 386.9 L844.8 384.8 L845.7 382.9 L846.7 381.0 L847.7 379.4 L848.7 377.9 L849.7 376.6 L850.6 375.7 L851.6 375.0 L852.6 374.5 L853.6 374.3 L854.6 374.3 L855.6 374.4 L856.5 374.7 L857.5 375.4 L858.5 376.5 L859.5 378.0 L860.5 379.7 L861.5 381.6 L862.4 383.7 L863.4 386.0 L864.4 388.3 L865.4 390.6 L866.4 392.8 L867.4 395.0 L868.3 397.2 L869.3 399.4 L870.3 401.6 L871.3 403.9 L872.3 406.4 L873.3 409.0 L874.2 411.8 L875.2 414.9 L876.2 418.2 L877.2 421.8 L878.2 425.7 L879.1 429.7 L880.1 433.9 L881.1 438.1 L882.1 442.3 L883.1 446.5 L884.1 450.7 L885.0 454.7 L886.0 458.6 L887.0 462.3 L888.0 465.7 L889.0 468.9 L890.0 471.8 L890.9 474.4 L891.9 476.7 L892.9 478.6 L893.9 480.2 L894.9 481.3 L895.9 482.2 L896.8 482.6 L897.8 482.5 L898.8 482.1 L899.8 481.4 L900.8 480.3 L901.8 478.9 L902.7 477.3 L903.7 475.6 L904.7 473.7 L905.7 471.7 L906.7 469.7 L907.7 467.6 L908.6 465.5 L909.6 463.5 L910.6 461.5 L911.6 459.6 L912.6 457.8 L913.5 456.2 L914.5 454.8 L915.5 453.4 L916.5 452.2 L917.5 451.1 L918.5 450.2 L919.4 449.2 L920.4 448.4 L921.4 447.6 L922.4 446.8 L923.4 446.1 L924.4 445.4 L925.3 444.7 L926.3 444.1 L927.3 443.5 L928.3 442.9 L929.3 442.4 L930.3 441.9 L931.2 441.4 L932.2 440.9 L933.2 440.4 L934.2 440.0 L935.2 439.7 L936.2 439.3 L937.1 439.0 L938.1 438.7 L939.1 438.5 L940.1 438.2 L941.1 438.0 L942.1 437.7 L943.0 437.4 L944.0 437.1 L945.0 436.7 L946.0 436.3 L947.0 435.8 L947.9 435.1 L948.9 434.4 L949.9 433.6 L950.9 432.8 L951.9 431.9 L952.9 431.1 L953.8 430.3 L954.8 429.5 L955.8 428.9 L956.8 428.4 L957.8 428.1 L958.8 427.9 L959.7 427.8 L960.7 427.8 L961.7 427.8 L962.7 427.8 L963.7 427.8 L964.7 427.8 L965.6 427.8 L966.6 427.8 L967.6 427.8 L968.6 427.9 L969.6 427.9 L970.6 427.9 L971.5 427.8 L972.5 427.8 L973.5 427.8 L974.5 427.8 L975.5 427.8 L976.5 427.8 L977.4 427.8 L978.4 427.8 L979.4 427.8" stroke="#7fff00" stroke-width="2"/>
<path d="M727.3 427.8 L742.7 427.8 L744.5 416.3 L745.5 415.9 L746.5 415.5 L747.4 415.2 L748.4 414.8 L749.4 414.4 L750.4 414.1 L751.4 413.7 L752.4 413.4 L753.3 413.1 L754.3 412.7 L755.3 412.4 L756.3 412.1 L757.3 411.8 L758.3 411.6 L759.2 411.3 L760.2 411.0 L761.2 410.8 L762.2 410.6 L763.2 410.4 L764.2 410.2 L765.1 410.0 L766.1 409.8 L767.1 409.7 L768.1 409.6 L769.1 409.6 L770.1 409.6 L771.0 409.6 L772.0 409.8 L773.0 409.9 L774.0 410.2 L775.0 410.5 L776.0 410.9 L776.9 411.3 L777.9 411.8 L778.9 412.4 L779.9 413.0 L780.9 413.8 L781.8 414.6 L782.8 415.4 L783.8 416.4 L784.8 417.5 L785.8 418.6 L786.8 419.8 L787.7 421.2 L788.7 422.6 L789.7 424.2 L790.7 426.0 L791.7 427.9 L792.7 429.9 L793.6 432.0 L794.6 434.2 L795.6 436.4 L796.6 438.6 L797.6 440.8 L798.6 442.9 L799.5 444.9 L800.5 446.9 L801.5 448.7 L802.5 450.4 L803.5 451.9 L804.5 453.3 L805.4 454.4 L806.4 455.3 L807.4 456.1 L808.4 456.5 L809.4 456.8 L810.4 456.8 L811.3 456.5 L812.3 456.0 L813.3 455.2 L814.3 454.3 L815.3 453.2 L816.2 452.0 L817.2 450.7 L818.2 449.2 L819.2 447.7 L820.2 446.0 L821.2 444.2 L822.1 442.3 L823.1 440.2 L824.1 438.1 L825.1 435.8 L826.1 433.4 L827.1 430.8 L828.0 428.2 L829.0 425.5 L830.0 422.8 L831.0 420.0 L832.0 417.2 L833.0 414.4 L833.9 411.6 L834.9 408.8 L835.9 406.1 L836.9 403.5 L837.9 401.0 L838.9 398.5 L839.8 396.0 L840.8 393.6 L841.8 391.3 L842.8 389.1 L843.8 386.9 L844.8 384.8 L845.7 382.9 L846.7 381.0 L847.7 379.4 L848.7 377.9 L849.7 376.6 L850.6 375.7 L851.6 375.0 L852.6 374.5 L853.6 374.3 L854.6 374.3 L855.6 374.4 L856.5 374.7 L857.5 375.4 L858.5 376.5 L859.5 378.0 L860.5 379.7 L861.5 381.6 L862.4 383.7 L863.4 386.0 L864.4 388.3 L865.4 390.6 L866.4 392.8 L867.4 395.0 L868.3 397.2 L869.3 399.4 L870.3 401.6 L871.3 403.9 L872.3 406.4 L873.3 409.0 L874.2 411.8 L875.2 414.9 L876.2 418.2 L877.2 421.8 L878.2 425.7 L879.1 429.7 L880.1 433.9 L881.1 438.1 L882.1 442.3 L883.1 446.5 L884.1 450.7 L885.0 454.7 L886.0 458.6 L887.0 462.3 L888.0 465.7 L889.0 468.9 L890.0 471.8 L890.9 474.4 L891.9 476.7 L892.9 478.6 L893.9 480.2 L894.9 481.3 L895.9 482.2 L896.8 482.6 L897.8 482.5 L898.8 482.1 L899.8 481.4 L900.8 480.3 L901.8 478.9 L902.7 477.3 L903.7 475.6 L904.7 473.7 L905.7 471.7 L906.7 469.7 L907.7 467.6 L908.6 465.5 L909.6 463.5 L910.6 461.5 L911.6 459.6 L912.6 457.8 L913.5 456.2 L914.5 454.8 L915.5 453.4 L916.5 452.2 L917.5 451.1 L918.5 450.1 L919.4 449.2 L920.4 448.3 L921.4 447.5 L922.4 446.7 L923.4 446.0 L924.4 445.3 L925.3 444.6 L926.3 443.9 L927.3 443.3 L928.3 442.7 L929.3 442.1 L930.3 441.5 L931.2 441.0 L932.2 440.5 L933.2 440.0 L934.2 439.6 L935.2 439.2 L936.2 438.8 L937.1 438.5 L938.1 438.2 L939.1 438.0 L940.1 437.8 L941.1 437.5 L942.1 437.3 L943.0 437.1 L944.0 436.8 L945.0 436.4 L946.0 436.0 L947.0 435.5 L947.9 435.0 L948.9 434.3 L949.9 433.5 L950.9 432.7 L951.9 431.8 L952.9 431.0 L953.8 430.2 L954.8 429.5 L955.8 428.9 L956.8 428.4 L957.8 428.1 L958.8 427.9 L959.7 427.8 L960.7 427.8 L961.7 427.8 L962.7 427.8 L963.7 427.8 L964.7 427.8 L965.6 427.8 L966.6 427.8 L967.6 427.8 L968.6 427.9 L969.6 427.9 L970.6 427.9 L971.5 427.8 L972.5 427.8 L973.5 427.8 L974.5 427.8 L975.5 427.8 L976.5 427.8 L977.4 427.8 L978.4 427.8 L979.4 427.8" stroke="#87ceeb" stroke-width="2"/>
<path d="M727.3 427.8 L742.7 427.8 L744.5 416.3 L745.5 415.9 L746.5 415.5 L747.4 415.2 L748.4 414.8 L749.4 414.4 L750.4 414.1 L751.4 413.7 L752.4 413.4 L753.3 413.1 L754.3 412.7 L755.3 412.4 L756.3 412.1 L757.3 411.8 L758.3 411.6 L759.2 411.3 L760.2 411.0 L761.2 410.8 L762.2 410.6 L763.2 410.4 L764.2 410.2 L765.1 410.0 L766.1 409.8 L767.1 409.7 L768.1 409.6 L769.1 409.6 L770.1 409.6 L771.0 409.6 L772.0 409.8 L773.0 409.9 L774.0 410.2 L775.0 410.5 L776.0 410.9 L776.9 411.3 L777.9 411.8 L778.9 412.4 L779.9 413.0 L780.9 413.8 L781.8 414.6 L782.8 415.4 L783.8 416.4 L784.8 417.5 L785.8 418.6 L786.8 419.8 L787.7 421.2 L788.7 422.6 L789.7 424.2 L790.7 426.0 L791.7 427.9 L792.7 429.9 L793.6 432.0 L794.6 434.2 L795.6 436.4 L796.6 438.6 L797.6 440.8 L798.6 442.9 L799.5 444.9 L800.5 446.9 L801.5 448.7 L802.5 450.4 L803.5 451.9 L804.5 453.3 L805.4 454.4 L806.4 455.3 L807.4 456.1 L808.4 456.5 L809.4 456.8 L810.4 456.8 L811.3 456.5 L812.3 456.0 L813.3 455.2 L814.3 454.3 L815.3 453.2 L816.2 452.0 L817.2 450.7 L818.2 449.2 L819.2 447.7 L820.2 446.0 L821.2 444.2 L822.1 442.3 L823.1 440.2 L824.1 438.1 L825.1 435.8 L826.1 433.4 L827.1 430.8 L828.0 428.2 L829.0 425.5 L830.0 422.8 L831.0 420.0 L832.0 417.2 L833.0 414.4 L833.9 411.6 L834.9 408.8 L835.9 406.1 L836.9 403.5 L837.9 401.0 L838.9 398.5 L839.8 396.0 L840.8 393.6 L841.8 391.3 L842.8 389.1 L843.8 386.9 L844.8 384.8 L845.7 382.9 L846.7 381.0 L847.7 379.4 L848.7 377.9 L849.7 376.6 L850.6 375.7 L851.6 375.0 L852.6 374.5 L853.6 374.3 L854.6 374.3 L855.6 374.4 L856.5 374.7 L857.5 375.4 L858.5 376.5 L859.5 378.0 L860.5 379.7 L861.5 381.6 L862.4 383.7 L863.4 386.0 L864.4 388.3 L865.4 390.6 L866.4 392.8 L867.4 395.0 L868.3 397.2 L869.3 399.4 L870.3 401.6 L871.3 403.9 L872.3 406.4 L873.3 409.0 L874.2 411.8 L875.2 414.9 L876.2 418.2 L877.2 421.8 L878.2 425.7 L879.1 429.7 L880.1 433.9 L881.1 438.1 L882.1 442.3 L883.1 446.5 L884.1 450.7 L885.0 454.7 L886.0 458.6 L887.0 462.3 L888.0 465.7 L889.0 468.9 L890.0 471.8 L890.9 474.4 L891.9 476.7 L892.9 478.6 L893.9 480.2 L894.9 481.3 L895.9 482.2 L896.8 482.6 L897.8 482.5 L898.8 482.1 L899.8 481.4 L900.8 480.3 L901.8 478.9 L902.7 477.3 L903.7 475.6 L904.7 473.7 L905.7 471.7 L906.7 469.7 L907.7 467.6 L908.6 465.5 L909.6 463.5 L910.6 461.5 L911.6 459.6 L912.6 457.9 L913.5 456.3 L914.5 454.8 L915.5 453.6 L916.5 452.4 L917.5 451.4 L918.5 450.4 L919.4 449.6 L920.4 448.9 L921.4 448.2 L922.4 447.6 L923.4 447.1 L924.4 446.7 L925.3 446.3 L926.3 446.0 L927.3 445.7 L928.3 445.5 L929.3 445.3 L930.3 445.2 L931.2 445.0 L932.2 444.9 L933.2 444.7 L934.2 444.5 L935.2 444.3 L936.2 444.1 L937.1 443.8 L938.1 443.5 L939.1 443.1 L940.1 442.7 L941.1 442.2 L942.1 441.6 L943.0 441.0 L944.0 440.3 L945.0 439.6 L946.0 438.8 L947.0 437.9 L947.9 436.9 L948.9 435.9 L949.9 434.8 L950.9 433.7 L951.9 432.7 L952.9 431.7 L953.8 430.7 L954.8 429.9 L955.8 429.2 L956.8 428.6 L957.8 428.2 L958.8 428.0 L959.7 427.9 L960.7 427.8 L961.7 427.8 L962.7 427.8 L963.7 427.8 L964.7 427.8 L965.6 427.8 L966.6 427.8 L967.6 427.9 L968.6 427.9 L969.6 427.9 L970.6 427.9 L971.5 427.8 L972.5 427.8 L973.5 427.8 L974.5 427.8 L975.5 427.8 L976.5 427.8 L977.4 427.8 L978.4 427.8 L979.4 427.8" stroke="#9400d3" stroke-width="2"/>
<path d="M727.3 427.8 L742.7 427.8 L744.5 416.3 L745.5 415.9 L746.5 415.5 L747.4 415.2 L748.4 414.8 L749.4 414.4 L750.4 414.1 L751.4 413.7 L752.4 413.4 L753.3 413.1 L754.3 412.7 L755.3 412.4 L756.3 412.1 L757.3 411.8 L758.3 411.6 L759.2 411.3 L760.2 411.0 L761.2 410.8 L762.2 410.6 L763.2 410.4 L764.2 410.2 L765.1 410.0 L766.1 409.8 L767.1 409.7 L768.1 409.6 L769.1 409.6 L770.1 409.6 L771.0 409.6 L772.0 409.8 L773.0 409.9 L774.0 410.2 L775.0 410.5 L776.0 410.9 L776.9 411.3 L777.9 411.8 L778.9 412.4 L779.9 413.0 L780.9 413.8 L781.8 414.6 L782.8 415.4 L783.8 416.4 L784.8 417.5 L785.8 418.6 L786.8 419.8 L787.7 421.2 L788.7 422.6 L789.7 424.2 L790.7 426.0 L791.7 427.9 L792.7 429.9 L793.6 432.0 L794.6 434.2 L795.6 436.4 L796.6 438.6 L797.6 440.8 L798.6 442.9 L799.5 444.9 L800.5 446.9 L801.5 448.7 L802.5 450.4 L803.5 451.9 L804.5 453.3 L805.4 454.4 L806.4 455.3 L807.4 456.1 L808.4 456.5 L809.4 456.8 L810.4 456.8 L811.3 456.5 L812.3 456.0 L813.3 455.2 L814.3 454.3 L815.3 453.2 L816.2 452.0 L817.2 450.7 L818.2 449.2 L819.2 447.7 L820.2 446.0 L821.2 444.2 L822.1 442.3 L823.1 440.2 L824.1 438.1 L825.1 435.8 L826.1 433.4 L827.1 430.8 L828.0 428.2 L829.0 425.5 L830.0 422.8 L831.0 420.0 L832.0 417.2 L833.0 414.4 L833.9 411.6 L834.9 408.8 L835.9 406.1 L836.9 403.5 L837.9 401.0 L838.9 398.5 L839.8 396.0 L840.8 393.6 L841.8 391.3 L842.8 389.1 L843.8 386.9 L844.8 384.8 L845.7 382.9 L846.7 381.0 L847.7 379.4 L848.7 377.9 L849.7 376.6 L850.6 375.7 L851.6 375.0 L852.6 374.5 L853.6 374.3 L854.6 374.3 L855.6 374.4 L856.5 374.7 L857.5 375.4 L858.5 376.5 L859.5 378.0 L860.5 379.7 L861.5 381.6 L862.4 383.7 L863.4 386.0 L864.4 388.3 L865.4 390.6 L866.4 392.8 L867.4 395.0 L868.3 397.2 L869.3 399.4 L870.3 401.6 L871.3 403.9 L872.3 406.4 L873.3 409.0 L874.2 411.8 L875.2 414.9 L876.2 418.2 L877.2 421.8 L878.2 425.7 L879.1 429.7 L880.1 433.9 L881.1 438.1 L882.1 442.3 L883.1 446.5 L884.1 450.7 L885.0 454.7 L886.0 458.6 L887.0 462.3 L888.0 465.7 L889.0 468.9 L890.0 471.8 L890.9 474.4 L891.9 476.7 L892.9 478.6 L893.9 480.2 L894.9 481.3 L895.9 482.2 L896.8 482.6 L897.8 482.5 L898.8 482.1 L899.8 481.4 L900.8 480.3 L901.8 478.9 L902.7 477.3 L903.7 475.6 L904.7 473.7 L905.7 471.7 L906.7 469.7 L907.7 467.6 L908.6 465.5 L909.6 463.5 L910.6 461.5 L911.6 459.6 L912.6 457.9 L913.5 456.3 L914.5 454.8 L915.5 453.5 L916.5 452.4 L917.5 451.3 L918.5 450.4 L919.4 449.6 L920.4 448.8 L921.4 448.1 L922.4 447.5 L923.4 447.0 L924.4 446.5 L925.3 446.1 L926.3 445.8 L927.3 445.4 L928.3 445.2 L929.3 444.9 L930.3 444.7 L931.2 444.5 L932.2 444.4 L933.2 444.2 L934.2 444.0 L935.2 443.8 L936.2 443.5 L937.1 443.2 L938.1 442.9 L939.1 442.5 L940.1 442.1 L941.1 441.6 L942.1 441.1 L943.0 440.6 L944.0 439.9 L945.0 439.2 L946.0 438.4 L947.0 437.6 L947.9 436.7 L948.9 435.7 L949.9 434.7 L950.9 433.6 L951.9 432.6 L952.9 431.6 L953.8 430.7 L954.8 429.8 L955.8 429.1 L956.8 428.6 L957.8 428.2 L958.8 428.0 L959.7 427.9 L960.7 427.8 L961.7 427.8 L962.7 427.8 L963.7 427.8 L964.7 427.8 L965.6 427.8 L966.6 427.8 L967.6 427.9 L968.6 427.9 L969.6 427.9 L970.6 427.9 L971.5 427.8 L972.5 427.8 L973.5 427.8 L974.5 427.8 L975.5 427.8 L976.5 427.8 L977.4 427.8 L978.4 427.8 L979.4 427.8" stroke="#00008b" stroke-width="2"/>
<path d="M946 435.5 L951 432 L957.3 422.4 L960.5 427.3 L964 428" stroke="#00008b"/>
<path d="M727.6 428.1 L743.0 428.1 L744.8 416.6 L745.8 416.2 L746.8 415.8 L747.7 415.5 L748.7 415.1 L749.7 414.7 L750.7 414.4 L751.7 414.0 L752.7 413.7 L753.6 413.4 L754.6 413.0 L755.6 412.7 L756.6 412.4 L757.6 412.1 L758.6 411.9 L759.5 411.6 L760.5 411.3 L761.5 411.1 L762.5 410.9 L763.5 410.7 L764.5 410.5 L765.4 410.3 L766.4 410.1 L767.4 410.0 L768.4 409.9 L769.4 409.9 L770.4 409.9 L771.3 409.9 L772.3 410.1 L773.3 410.2 L774.3 410.5 L775.3 410.8 L776.3 411.2 L777.2 411.6 L778.2 412.1 L779.2 412.7 L780.2 413.3 L781.2 414.1 L782.1 414.9 L783.1 415.7 L784.1 416.7 L785.1 417.8 L786.1 418.9 L787.1 420.1 L788.0 421.5 L789.0 422.9 L790.0 424.5 L791.0 426.3 L792.0 428.2 L793.0 430.2 L793.9 432.3 L794.9 434.5 L795.9 436.7 L796.9 438.9 L797.9 441.1 L798.9 443.2 L799.8 445.2 L800.8 447.2 L801.8 449.0 L802.8 450.7 L803.8 452.2 L804.8 453.6 L805.7 454.7 L806.7 455.6 L807.7 456.4 L808.7 456.8 L809.7 457.1 L810.7 457.1 L811.6 456.8 L812.6 456.3 L813.6 455.5 L814.6 454.6 L815.6 453.5 L816.5 452.3 L817.5 451.0 L818.5 449.5 L819.5 448.0 L820.5 446.3 L821.5 444.5 L822.4 442.6 L823.4 440.5 L824.4 438.4 L825.4 436.1 L826.4 433.7 L827.4 431.1 L828.3 428.5 L829.3 425.8 L830.3 423.1 L831.3 420.3 L832.3 417.5 L833.3 414.7 L834.2 411.9 L835.2 409.1 L836.2 406.4 L837.2 403.8 L838.2 401.3 L839.2 398.8 L840.1 396.3 L841.1 393.9 L842.1 391.6 L843.1 389.4 L844.1 387.2 L845.1 385.1 L846.0 383.2 L847.0 381.3 L848.0 379.7 L849.0 378.2 L850.0 376.9 L850.9 376.0 L851.9 375.3 L852.9 374.8 L853.9 374.6 L854.9 374.6 L855.9 374.7 L856.8 375.0 L857.8 375.7 L858.8 376.8 L859.8 378.3 L860.8 380.0 L861.8 381.9 L862.7 384.0 L863.7 386.3 L864.7 388.6 L865.7 390.9 L866.7 393.1 L867.7 395.3 L868.6 397.5 L869.6 399.7 L870.6 401.9 L871.6 404.2 L872.6 406.7 L873.6 409.3 L874.5 412.1 L875.5 415.2 L876.5 418.5 L877.5 422.1 L878.5 426.0 L879.4 430.0 L880.4 434.2 L881.4 438.4 L882.4 442.6 L883.4 446.8 L884.4 451.0 L885.3 455.0 L886.3 458.9 L887.3 462.6 L888.3 466.0 L889.3 469.2 L890.3 472.1 L891.2 474.7 L892.2 477.0 L893.2 478.9 L894.2 480.5 L895.2 481.6 L896.2 482.5 L897.1 482.9 L898.1 482.8 L899.1 482.4 L900.1 481.7 L901.1 480.6 L902.1 479.2 L903.0 477.6 L904.0 475.9 L905.0 474.0 L906.0 472.0 L907.0 470.0 L908.0 467.9 L908.9 465.8 L909.9 463.8 L910.9 461.8 L911.9 459.9 L912.9 458.2 L913.8 456.6 L914.8 455.1 L915.8 453.8 L916.8 452.6 L917.8 451.5 L918.8 450.6 L919.7 449.7 L920.7 448.9 L921.7 448.1 L922.7 447.5 L923.7 446.8 L924.7 446.2 L925.6 445.7 L926.6 445.2 L927.6 444.7 L928.6 444.3 L929.6 443.9 L930.6 443.5 L931.5 443.2 L932.5 442.8 L933.5 442.5 L934.5 442.2 L935.5 441.9 L936.5 441.6 L937.4 441.3 L938.4 441.0 L939.4 440.7 L940.4 440.4 L941.4 440.0 L942.4 439.6 L943.3 439.2 L944.3 438.8 L945.3 438.2 L946.3 437.6 L947.3 436.9 L948.2 436.2 L949.2 435.3 L950.2 434.4 L951.2 433.5 L952.2 432.5 L953.2 431.6 L954.1 430.8 L955.1 430.0 L956.1 429.3 L957.1 428.8 L958.1 428.4 L959.1 428.2 L960.0 428.1 L961.0 428.1 L962.0 428.1 L963.0 428.1 L964.0 428.1 L965.0 428.1 L965.9 428.1 L966.9 428.1 L967.9 428.2 L968.9 428.2 L969.9 428.2 L970.9 428.2 L971.8 428.1 L972.8 428.1 L973.8 428.1 L974.8 428.1 L975.8 428.1 L976.8 428.1 L977.7 428.1 L978.7 428.1 L979.7 428.1" stroke="#d02063" stroke-width="2.4"/>
</g>
<rect x="724.5" y="370.5" width="258.0" height="117.0" fill="none" stroke="#000" stroke-width="1"/>
<line x1="720" y1="377.5" x2="724.5" y2="377.5" stroke="#000" stroke-width="1"/>
<line x1="720" y1="403.5" x2="724.5" y2="403.5" stroke="#000" stroke-width="1"/>
<line x1="720" y1="429.5" x2="724.5" y2="429.5" stroke="#000" stroke-width="1"/>
<line x1="720" y1="455.5" x2="724.5" y2="455.5" stroke="#000" stroke-width="1"/>
<line x1="720" y1="481.5" x2="724.5" y2="481.5" stroke="#000" stroke-width="1"/>
<line x1="727.5" y1="487.5" x2="727.5" y2="495.0" stroke="#000" stroke-width="1"/>
<line x1="740.5" y1="487.5" x2="740.5" y2="492.0" stroke="#000" stroke-width="1"/>
<line x1="752.5" y1="487.5" x2="752.5" y2="492.0" stroke="#000" stroke-width="1"/>
<line x1="765.5" y1="487.5" x2="765.5" y2="492.0" stroke="#000" stroke-width="1"/>
<line x1="777.5" y1="487.5" x2="777.5" y2="492.0" stroke="#000" stroke-width="1"/>
<line x1="790.5" y1="487.5" x2="790.5" y2="495.0" stroke="#000" stroke-width="1"/>
<line x1="803.5" y1="487.5" x2="803.5" y2="492.0" stroke="#000" stroke-width="1"/>
<line x1="815.5" y1="487.5" x2="815.5" y2="492.0" stroke="#000" stroke-width="1"/>
<line x1="828.5" y1="487.5" x2="828.5" y2="492.0" stroke="#000" stroke-width="1"/>
<line x1="840.5" y1="487.5" x2="840.5" y2="492.0" stroke="#000" stroke-width="1"/>
<line x1="853.5" y1="487.5" x2="853.5" y2="495.0" stroke="#000" stroke-width="1"/>
<line x1="866.5" y1="487.5" x2="866.5" y2="492.0" stroke="#000" stroke-width="1"/>
<line x1="878.5" y1="487.5" x2="878.5" y2="492.0" stroke="#000" stroke-width="1"/>
<line x1="891.5" y1="487.5" x2="891.5" y2="492.0" stroke="#000" stroke-width="1"/>
<line x1="903.5" y1="487.5" x2="903.5" y2="492.0" stroke="#000" stroke-width="1"/>
<line x1="916.5" y1="487.5" x2="916.5" y2="495.0" stroke="#000" stroke-width="1"/>
<line x1="929.5" y1="487.5" x2="929.5" y2="492.0" stroke="#000" stroke-width="1"/>
<line x1="941.5" y1="487.5" x2="941.5" y2="492.0" stroke="#000" stroke-width="1"/>
<line x1="954.5" y1="487.5" x2="954.5" y2="492.0" stroke="#000" stroke-width="1"/>
<line x1="966.5" y1="487.5" x2="966.5" y2="492.0" stroke="#000" stroke-width="1"/>
<line x1="979.5" y1="487.5" x2="979.5" y2="495.0" stroke="#000" stroke-width="1"/>
<text x="727.5" y="512" font-size="12.5" fill="#333" text-anchor="middle" font-weight="400" letter-spacing="0">850</text>
<text x="790.5" y="512" font-size="12.5" fill="#333" text-anchor="middle" font-weight="400" letter-spacing="0">900</text>
<text x="853.5" y="512" font-size="12.5" fill="#333" text-anchor="middle" font-weight="400" letter-spacing="0">950</text>
<text x="916.5" y="512" font-size="12.5" fill="#333" text-anchor="middle" font-weight="400" letter-spacing="0">1000</text>
<text x="979.5" y="512" font-size="12.5" fill="#333" text-anchor="middle" font-weight="400" letter-spacing="0">1050</text>
<text x="709" y="433.5" font-size="12.5" fill="#333" text-anchor="middle" font-weight="400" letter-spacing="0">0</text>
<text x="853" y="530" font-size="13" fill="#333" text-anchor="middle" font-weight="400" letter-spacing="0">Wavelength / nm</text>
<text x="703" y="428.6" font-size="12.8" fill="#333" text-anchor="middle" font-weight="400" letter-spacing="0" transform="rotate(-90 703 428.6)">Absorbance / AU</text>
</svg>
</div></body></html>
